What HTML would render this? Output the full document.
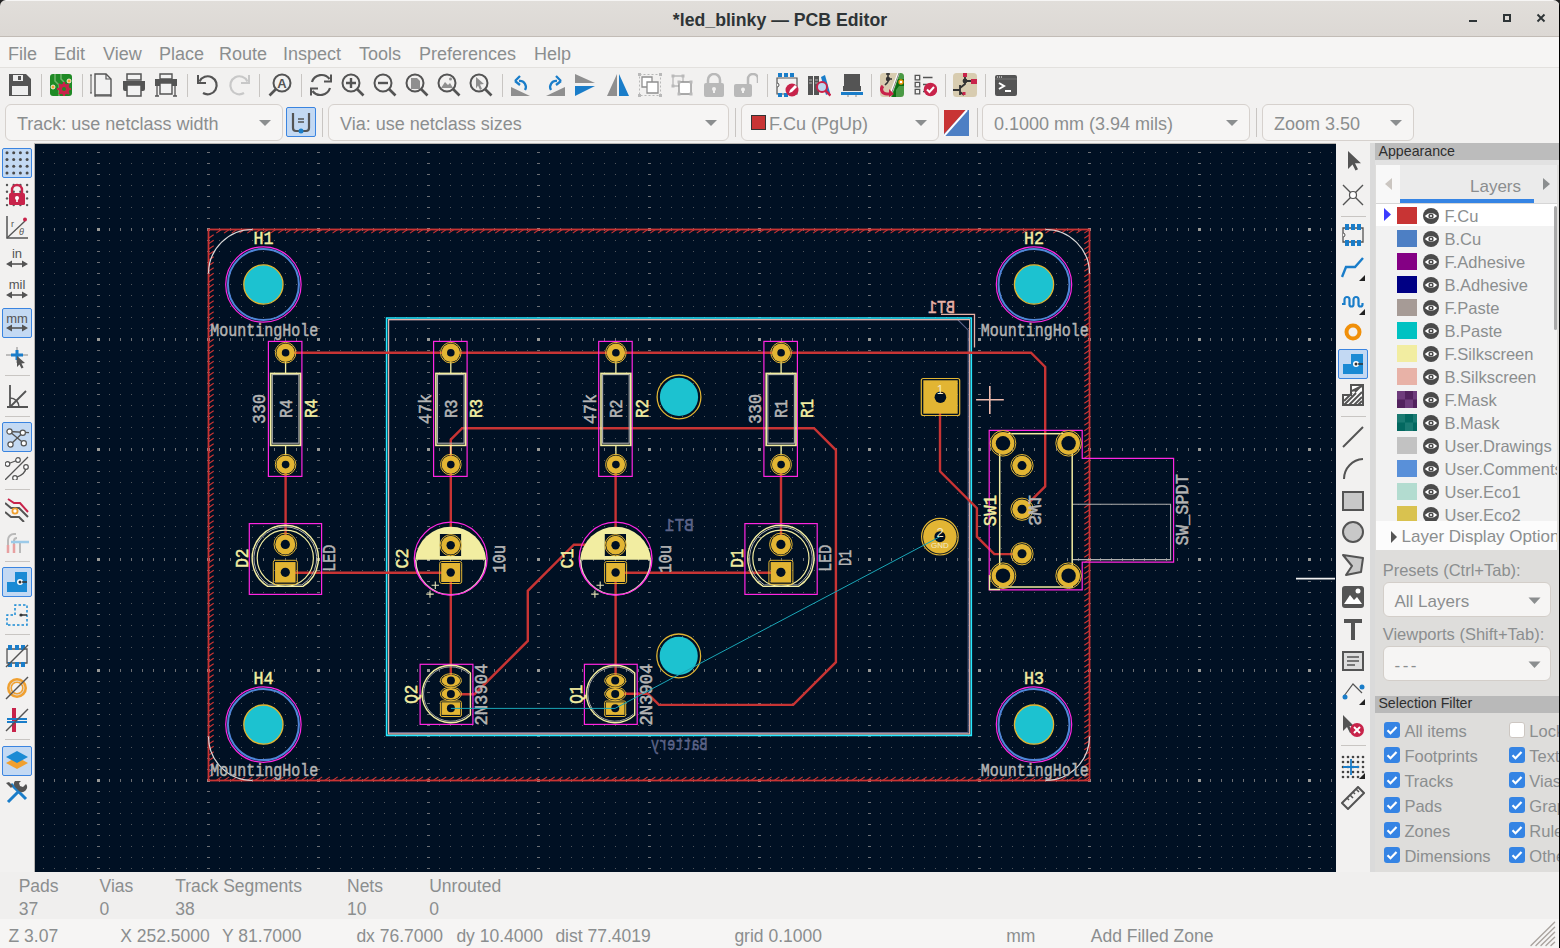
<!DOCTYPE html>
<html><head><meta charset="utf-8">
<style>
*{box-sizing:border-box}
html,body{margin:0;padding:0}
body{width:1560px;height:948px;overflow:hidden;position:relative;background:#f2f1f0;font-family:"Liberation Sans",sans-serif;color:#8b8e8f}
.a{position:absolute}
#title{left:0;top:0;width:1560px;height:37px;background:linear-gradient(#e1deda,#dcd8d4);border-top:1px solid #f6f5f4;border-bottom:1px solid #c2bcb6;}
#title .t{left:0;width:1560px;top:9px;text-align:center;font-weight:bold;font-size:17.7px;line-height:20px;color:#2e3436}
#menu{left:0;top:37px;width:1560px;height:31px;background:#f6f5f4;border-bottom:1px solid #e3e1de}
#menu span{position:absolute;top:7px;font-size:18px;color:#8b8e8f}
#tb1{left:0;top:68px;width:1560px;height:36px;background:#f2f1f0}
.sep{position:absolute;width:1px;background:#c8c5c2}
.combo{position:absolute;background:#f6f5f4;border:1px solid #d6d1cd;border-radius:6px;font-size:18px;color:#8b8e8f;padding-left:11px;line-height:39px;white-space:nowrap;overflow:hidden}
.combo .arr{position:absolute;right:11px;top:15px;width:0;height:0;border-left:6px solid transparent;border-right:6px solid transparent;border-top:6px solid #8b8e8f}
#canvas{left:34px;top:143px;width:1302px;height:730px;background:#001023;border-left:1px solid #b8b5b2;border-top:1px solid #b8b5b2}
#rtb{left:1336px;top:143px;width:34px;height:729px;background:#f2f1f0}
#app{left:1370px;top:143px;width:190px;height:729px;background:#dedddb;border-left:5px solid #dadada}
#msg{left:0;top:872px;width:1560px;height:47px;background:#f0efee;font-size:17px}
#status{left:0;top:919px;width:1560px;height:29px;background:#f6f5f4;font-size:17px}
</style></head><body>
<div id="title" class="a"><div class="t a">*led_blinky — PCB Editor</div></div>
<div id="menu" class="a">
<span style="left:8px">File</span><span style="left:54px">Edit</span><span style="left:103px">View</span><span style="left:159px">Place</span><span style="left:219px">Route</span><span style="left:283px">Inspect</span><span style="left:359px">Tools</span><span style="left:419px">Preferences</span><span style="left:534px">Help</span>
</div>
<div id="tb1" class="a"></div>
<div class="combo" style="left:5px;top:104px;width:278px;height:37px">Track: use netclass width<div class="arr"></div></div>
<div class="combo" style="left:328px;top:104px;width:401px;height:37px">Via: use netclass sizes<div class="arr"></div></div>
<div class="combo" style="left:741px;top:104px;width:198px;height:37px;padding-left:27px">F.Cu (PgUp)<div class="arr"></div></div>
<div class="combo" style="left:982px;top:104px;width:268px;height:37px">0.1000 mm (3.94 mils)<div class="arr"></div></div>
<div class="combo" style="left:1262px;top:104px;width:152px;height:37px">Zoom 3.50<div class="arr"></div></div>
<div id="canvas" class="a"></div>
<svg class="a" style="left:35px;top:144px" width="1300" height="728" viewBox="35 144 1300 728">
<rect x="35" y="144" width="1300" height="728" fill="#001023"/>
<path d="M43 152.5h1m10 0h1m10 0h1m10 0h1m10 0h1m21 0h1m10 0h1m10 0h1m10 0h1m10 0h1m10 0h1m10 0h1m10 0h1m10 0h1m21 0h1m10 0h1m10 0h1m10 0h1m10 0h1m10 0h1m10 0h1m10 0h1m10 0h1m21 0h1m10 0h1m10 0h1m10 0h1m10 0h1m10 0h1m10 0h1m10 0h1m10 0h1m21 0h1m10 0h1m10 0h1m10 0h1m10 0h1m10 0h1m10 0h1m10 0h1m10 0h1m21 0h1m10 0h1m10 0h1m10 0h1m10 0h1m10 0h1m10 0h1m10 0h1m11 0h1m21 0h1m10 0h1m10 0h1m10 0h1m10 0h1m10 0h1m10 0h1m10 0h1m10 0h1m21 0h1m10 0h1m10 0h1m10 0h1m10 0h1m10 0h1m10 0h1m10 0h1m10 0h1m21 0h1m10 0h1m10 0h1m10 0h1m10 0h1m10 0h1m10 0h1m10 0h1m10 0h1m21 0h1m10 0h1m10 0h1m10 0h1m10 0h1m10 0h1m10 0h1m10 0h1m10 0h1m21 0h1m10 0h1m10 0h1m10 0h1m10 0h1m10 0h1m10 0h1m10 0h1m10 0h1m21 0h1m10 0h1m10 0h1m10 0h1m10 0h1m10 0h1m10 0h1m10 0h1m10 0h1m21 0h1m10 0h1M43 163.5h1m10 0h1m10 0h1m10 0h1m10 0h1m21 0h1m10 0h1m10 0h1m10 0h1m10 0h1m10 0h1m10 0h1m10 0h1m10 0h1m21 0h1m10 0h1m10 0h1m10 0h1m10 0h1m10 0h1m10 0h1m10 0h1m10 0h1m21 0h1m10 0h1m10 0h1m10 0h1m10 0h1m10 0h1m10 0h1m10 0h1m10 0h1m21 0h1m10 0h1m10 0h1m10 0h1m10 0h1m10 0h1m10 0h1m10 0h1m10 0h1m21 0h1m10 0h1m10 0h1m10 0h1m10 0h1m10 0h1m10 0h1m10 0h1m11 0h1m21 0h1m10 0h1m10 0h1m10 0h1m10 0h1m10 0h1m10 0h1m10 0h1m10 0h1m21 0h1m10 0h1m10 0h1m10 0h1m10 0h1m10 0h1m10 0h1m10 0h1m10 0h1m21 0h1m10 0h1m10 0h1m10 0h1m10 0h1m10 0h1m10 0h1m10 0h1m10 0h1m21 0h1m10 0h1m10 0h1m10 0h1m10 0h1m10 0h1m10 0h1m10 0h1m10 0h1m21 0h1m10 0h1m10 0h1m10 0h1m10 0h1m10 0h1m10 0h1m10 0h1m10 0h1m21 0h1m10 0h1m10 0h1m10 0h1m10 0h1m10 0h1m10 0h1m10 0h1m10 0h1m21 0h1m10 0h1M43 174.5h1m10 0h1m10 0h1m10 0h1m10 0h1m21 0h1m10 0h1m10 0h1m10 0h1m10 0h1m10 0h1m10 0h1m10 0h1m10 0h1m21 0h1m10 0h1m10 0h1m10 0h1m10 0h1m10 0h1m10 0h1m10 0h1m10 0h1m21 0h1m10 0h1m10 0h1m10 0h1m10 0h1m10 0h1m10 0h1m10 0h1m10 0h1m21 0h1m10 0h1m10 0h1m10 0h1m10 0h1m10 0h1m10 0h1m10 0h1m10 0h1m21 0h1m10 0h1m10 0h1m10 0h1m10 0h1m10 0h1m10 0h1m10 0h1m11 0h1m21 0h1m10 0h1m10 0h1m10 0h1m10 0h1m10 0h1m10 0h1m10 0h1m10 0h1m21 0h1m10 0h1m10 0h1m10 0h1m10 0h1m10 0h1m10 0h1m10 0h1m10 0h1m21 0h1m10 0h1m10 0h1m10 0h1m10 0h1m10 0h1m10 0h1m10 0h1m10 0h1m21 0h1m10 0h1m10 0h1m10 0h1m10 0h1m10 0h1m10 0h1m10 0h1m10 0h1m21 0h1m10 0h1m10 0h1m10 0h1m10 0h1m10 0h1m10 0h1m10 0h1m10 0h1m21 0h1m10 0h1m10 0h1m10 0h1m10 0h1m10 0h1m10 0h1m10 0h1m10 0h1m21 0h1m10 0h1M43 185.5h1m10 0h1m10 0h1m10 0h1m10 0h1m21 0h1m10 0h1m10 0h1m10 0h1m10 0h1m10 0h1m10 0h1m10 0h1m10 0h1m21 0h1m10 0h1m10 0h1m10 0h1m10 0h1m10 0h1m10 0h1m10 0h1m10 0h1m21 0h1m10 0h1m10 0h1m10 0h1m10 0h1m10 0h1m10 0h1m10 0h1m10 0h1m21 0h1m10 0h1m10 0h1m10 0h1m10 0h1m10 0h1m10 0h1m10 0h1m10 0h1m21 0h1m10 0h1m10 0h1m10 0h1m10 0h1m10 0h1m10 0h1m10 0h1m11 0h1m21 0h1m10 0h1m10 0h1m10 0h1m10 0h1m10 0h1m10 0h1m10 0h1m10 0h1m21 0h1m10 0h1m10 0h1m10 0h1m10 0h1m10 0h1m10 0h1m10 0h1m10 0h1m21 0h1m10 0h1m10 0h1m10 0h1m10 0h1m10 0h1m10 0h1m10 0h1m10 0h1m21 0h1m10 0h1m10 0h1m10 0h1m10 0h1m10 0h1m10 0h1m10 0h1m10 0h1m21 0h1m10 0h1m10 0h1m10 0h1m10 0h1m10 0h1m10 0h1m10 0h1m10 0h1m21 0h1m10 0h1m10 0h1m10 0h1m10 0h1m10 0h1m10 0h1m10 0h1m10 0h1m21 0h1m10 0h1M43 196.5h1m10 0h1m10 0h1m10 0h1m10 0h1m21 0h1m10 0h1m10 0h1m10 0h1m10 0h1m10 0h1m10 0h1m10 0h1m10 0h1m21 0h1m10 0h1m10 0h1m10 0h1m10 0h1m10 0h1m10 0h1m10 0h1m10 0h1m21 0h1m10 0h1m10 0h1m10 0h1m10 0h1m10 0h1m10 0h1m10 0h1m10 0h1m21 0h1m10 0h1m10 0h1m10 0h1m10 0h1m10 0h1m10 0h1m10 0h1m10 0h1m21 0h1m10 0h1m10 0h1m10 0h1m10 0h1m10 0h1m10 0h1m10 0h1m11 0h1m21 0h1m10 0h1m10 0h1m10 0h1m10 0h1m10 0h1m10 0h1m10 0h1m10 0h1m21 0h1m10 0h1m10 0h1m10 0h1m10 0h1m10 0h1m10 0h1m10 0h1m10 0h1m21 0h1m10 0h1m10 0h1m10 0h1m10 0h1m10 0h1m10 0h1m10 0h1m10 0h1m21 0h1m10 0h1m10 0h1m10 0h1m10 0h1m10 0h1m10 0h1m10 0h1m10 0h1m21 0h1m10 0h1m10 0h1m10 0h1m10 0h1m10 0h1m10 0h1m10 0h1m10 0h1m21 0h1m10 0h1m10 0h1m10 0h1m10 0h1m10 0h1m10 0h1m10 0h1m10 0h1m21 0h1m10 0h1M43 207.5h1m10 0h1m10 0h1m10 0h1m10 0h1m21 0h1m10 0h1m10 0h1m10 0h1m10 0h1m10 0h1m10 0h1m10 0h1m10 0h1m21 0h1m10 0h1m10 0h1m10 0h1m10 0h1m10 0h1m10 0h1m10 0h1m10 0h1m21 0h1m10 0h1m10 0h1m10 0h1m10 0h1m10 0h1m10 0h1m10 0h1m10 0h1m21 0h1m10 0h1m10 0h1m10 0h1m10 0h1m10 0h1m10 0h1m10 0h1m10 0h1m21 0h1m10 0h1m10 0h1m10 0h1m10 0h1m10 0h1m10 0h1m10 0h1m11 0h1m21 0h1m10 0h1m10 0h1m10 0h1m10 0h1m10 0h1m10 0h1m10 0h1m10 0h1m21 0h1m10 0h1m10 0h1m10 0h1m10 0h1m10 0h1m10 0h1m10 0h1m10 0h1m21 0h1m10 0h1m10 0h1m10 0h1m10 0h1m10 0h1m10 0h1m10 0h1m10 0h1m21 0h1m10 0h1m10 0h1m10 0h1m10 0h1m10 0h1m10 0h1m10 0h1m10 0h1m21 0h1m10 0h1m10 0h1m10 0h1m10 0h1m10 0h1m10 0h1m10 0h1m10 0h1m21 0h1m10 0h1m10 0h1m10 0h1m10 0h1m10 0h1m10 0h1m10 0h1m10 0h1m21 0h1m10 0h1M43 218.5h1m10 0h1m10 0h1m10 0h1m10 0h1m21 0h1m10 0h1m10 0h1m10 0h1m10 0h1m10 0h1m10 0h1m10 0h1m10 0h1m21 0h1m10 0h1m10 0h1m10 0h1m10 0h1m10 0h1m10 0h1m10 0h1m10 0h1m21 0h1m10 0h1m10 0h1m10 0h1m10 0h1m10 0h1m10 0h1m10 0h1m10 0h1m21 0h1m10 0h1m10 0h1m10 0h1m10 0h1m10 0h1m10 0h1m10 0h1m10 0h1m21 0h1m10 0h1m10 0h1m10 0h1m10 0h1m10 0h1m10 0h1m10 0h1m11 0h1m21 0h1m10 0h1m10 0h1m10 0h1m10 0h1m10 0h1m10 0h1m10 0h1m10 0h1m21 0h1m10 0h1m10 0h1m10 0h1m10 0h1m10 0h1m10 0h1m10 0h1m10 0h1m21 0h1m10 0h1m10 0h1m10 0h1m10 0h1m10 0h1m10 0h1m10 0h1m10 0h1m21 0h1m10 0h1m10 0h1m10 0h1m10 0h1m10 0h1m10 0h1m10 0h1m10 0h1m21 0h1m10 0h1m10 0h1m10 0h1m10 0h1m10 0h1m10 0h1m10 0h1m10 0h1m21 0h1m10 0h1m10 0h1m10 0h1m10 0h1m10 0h1m10 0h1m10 0h1m10 0h1m21 0h1m10 0h1M43 240.5h1m10 0h1m10 0h1m10 0h1m10 0h1m21 0h1m10 0h1m10 0h1m10 0h1m10 0h1m10 0h1m10 0h1m10 0h1m10 0h1m21 0h1m10 0h1m10 0h1m10 0h1m10 0h1m10 0h1m10 0h1m10 0h1m10 0h1m21 0h1m10 0h1m10 0h1m10 0h1m10 0h1m10 0h1m10 0h1m10 0h1m10 0h1m21 0h1m10 0h1m10 0h1m10 0h1m10 0h1m10 0h1m10 0h1m10 0h1m10 0h1m21 0h1m10 0h1m10 0h1m10 0h1m10 0h1m10 0h1m10 0h1m10 0h1m11 0h1m21 0h1m10 0h1m10 0h1m10 0h1m10 0h1m10 0h1m10 0h1m10 0h1m10 0h1m21 0h1m10 0h1m10 0h1m10 0h1m10 0h1m10 0h1m10 0h1m10 0h1m10 0h1m21 0h1m10 0h1m10 0h1m10 0h1m10 0h1m10 0h1m10 0h1m10 0h1m10 0h1m21 0h1m10 0h1m10 0h1m10 0h1m10 0h1m10 0h1m10 0h1m10 0h1m10 0h1m21 0h1m10 0h1m10 0h1m10 0h1m10 0h1m10 0h1m10 0h1m10 0h1m10 0h1m21 0h1m10 0h1m10 0h1m10 0h1m10 0h1m10 0h1m10 0h1m10 0h1m10 0h1m21 0h1m10 0h1M43 251.5h1m10 0h1m10 0h1m10 0h1m10 0h1m21 0h1m10 0h1m10 0h1m10 0h1m10 0h1m10 0h1m10 0h1m10 0h1m10 0h1m21 0h1m10 0h1m10 0h1m10 0h1m10 0h1m10 0h1m10 0h1m10 0h1m10 0h1m21 0h1m10 0h1m10 0h1m10 0h1m10 0h1m10 0h1m10 0h1m10 0h1m10 0h1m21 0h1m10 0h1m10 0h1m10 0h1m10 0h1m10 0h1m10 0h1m10 0h1m10 0h1m21 0h1m10 0h1m10 0h1m10 0h1m10 0h1m10 0h1m10 0h1m10 0h1m11 0h1m21 0h1m10 0h1m10 0h1m10 0h1m10 0h1m10 0h1m10 0h1m10 0h1m10 0h1m21 0h1m10 0h1m10 0h1m10 0h1m10 0h1m10 0h1m10 0h1m10 0h1m10 0h1m21 0h1m10 0h1m10 0h1m10 0h1m10 0h1m10 0h1m10 0h1m10 0h1m10 0h1m21 0h1m10 0h1m10 0h1m10 0h1m10 0h1m10 0h1m10 0h1m10 0h1m10 0h1m21 0h1m10 0h1m10 0h1m10 0h1m10 0h1m10 0h1m10 0h1m10 0h1m10 0h1m21 0h1m10 0h1m10 0h1m10 0h1m10 0h1m10 0h1m10 0h1m10 0h1m10 0h1m21 0h1m10 0h1M43 262.5h1m10 0h1m10 0h1m10 0h1m10 0h1m21 0h1m10 0h1m10 0h1m10 0h1m10 0h1m10 0h1m10 0h1m10 0h1m10 0h1m21 0h1m10 0h1m10 0h1m10 0h1m10 0h1m10 0h1m10 0h1m10 0h1m10 0h1m21 0h1m10 0h1m10 0h1m10 0h1m10 0h1m10 0h1m10 0h1m10 0h1m10 0h1m21 0h1m10 0h1m10 0h1m10 0h1m10 0h1m10 0h1m10 0h1m10 0h1m10 0h1m21 0h1m10 0h1m10 0h1m10 0h1m10 0h1m10 0h1m10 0h1m10 0h1m11 0h1m21 0h1m10 0h1m10 0h1m10 0h1m10 0h1m10 0h1m10 0h1m10 0h1m10 0h1m21 0h1m10 0h1m10 0h1m10 0h1m10 0h1m10 0h1m10 0h1m10 0h1m10 0h1m21 0h1m10 0h1m10 0h1m10 0h1m10 0h1m10 0h1m10 0h1m10 0h1m10 0h1m21 0h1m10 0h1m10 0h1m10 0h1m10 0h1m10 0h1m10 0h1m10 0h1m10 0h1m21 0h1m10 0h1m10 0h1m10 0h1m10 0h1m10 0h1m10 0h1m10 0h1m10 0h1m21 0h1m10 0h1m10 0h1m10 0h1m10 0h1m10 0h1m10 0h1m10 0h1m10 0h1m21 0h1m10 0h1M43 273.5h1m10 0h1m10 0h1m10 0h1m10 0h1m21 0h1m10 0h1m10 0h1m10 0h1m10 0h1m10 0h1m10 0h1m10 0h1m10 0h1m21 0h1m10 0h1m10 0h1m10 0h1m10 0h1m10 0h1m10 0h1m10 0h1m10 0h1m21 0h1m10 0h1m10 0h1m10 0h1m10 0h1m10 0h1m10 0h1m10 0h1m10 0h1m21 0h1m10 0h1m10 0h1m10 0h1m10 0h1m10 0h1m10 0h1m10 0h1m10 0h1m21 0h1m10 0h1m10 0h1m10 0h1m10 0h1m10 0h1m10 0h1m10 0h1m11 0h1m21 0h1m10 0h1m10 0h1m10 0h1m10 0h1m10 0h1m10 0h1m10 0h1m10 0h1m21 0h1m10 0h1m10 0h1m10 0h1m10 0h1m10 0h1m10 0h1m10 0h1m10 0h1m21 0h1m10 0h1m10 0h1m10 0h1m10 0h1m10 0h1m10 0h1m10 0h1m10 0h1m21 0h1m10 0h1m10 0h1m10 0h1m10 0h1m10 0h1m10 0h1m10 0h1m10 0h1m21 0h1m10 0h1m10 0h1m10 0h1m10 0h1m10 0h1m10 0h1m10 0h1m10 0h1m21 0h1m10 0h1m10 0h1m10 0h1m10 0h1m10 0h1m10 0h1m10 0h1m10 0h1m21 0h1m10 0h1M43 284.5h1m10 0h1m10 0h1m10 0h1m10 0h1m21 0h1m10 0h1m10 0h1m10 0h1m10 0h1m10 0h1m10 0h1m10 0h1m10 0h1m21 0h1m10 0h1m10 0h1m10 0h1m10 0h1m10 0h1m10 0h1m10 0h1m10 0h1m21 0h1m10 0h1m10 0h1m10 0h1m10 0h1m10 0h1m10 0h1m10 0h1m10 0h1m21 0h1m10 0h1m10 0h1m10 0h1m10 0h1m10 0h1m10 0h1m10 0h1m10 0h1m21 0h1m10 0h1m10 0h1m10 0h1m10 0h1m10 0h1m10 0h1m10 0h1m11 0h1m21 0h1m10 0h1m10 0h1m10 0h1m10 0h1m10 0h1m10 0h1m10 0h1m10 0h1m21 0h1m10 0h1m10 0h1m10 0h1m10 0h1m10 0h1m10 0h1m10 0h1m10 0h1m21 0h1m10 0h1m10 0h1m10 0h1m10 0h1m10 0h1m10 0h1m10 0h1m10 0h1m21 0h1m10 0h1m10 0h1m10 0h1m10 0h1m10 0h1m10 0h1m10 0h1m10 0h1m21 0h1m10 0h1m10 0h1m10 0h1m10 0h1m10 0h1m10 0h1m10 0h1m10 0h1m21 0h1m10 0h1m10 0h1m10 0h1m10 0h1m10 0h1m10 0h1m10 0h1m10 0h1m21 0h1m10 0h1M43 295.5h1m10 0h1m10 0h1m10 0h1m10 0h1m21 0h1m10 0h1m10 0h1m10 0h1m10 0h1m10 0h1m10 0h1m10 0h1m10 0h1m21 0h1m10 0h1m10 0h1m10 0h1m10 0h1m10 0h1m10 0h1m10 0h1m10 0h1m21 0h1m10 0h1m10 0h1m10 0h1m10 0h1m10 0h1m10 0h1m10 0h1m10 0h1m21 0h1m10 0h1m10 0h1m10 0h1m10 0h1m10 0h1m10 0h1m10 0h1m10 0h1m21 0h1m10 0h1m10 0h1m10 0h1m10 0h1m10 0h1m10 0h1m10 0h1m11 0h1m21 0h1m10 0h1m10 0h1m10 0h1m10 0h1m10 0h1m10 0h1m10 0h1m10 0h1m21 0h1m10 0h1m10 0h1m10 0h1m10 0h1m10 0h1m10 0h1m10 0h1m10 0h1m21 0h1m10 0h1m10 0h1m10 0h1m10 0h1m10 0h1m10 0h1m10 0h1m10 0h1m21 0h1m10 0h1m10 0h1m10 0h1m10 0h1m10 0h1m10 0h1m10 0h1m10 0h1m21 0h1m10 0h1m10 0h1m10 0h1m10 0h1m10 0h1m10 0h1m10 0h1m10 0h1m21 0h1m10 0h1m10 0h1m10 0h1m10 0h1m10 0h1m10 0h1m10 0h1m10 0h1m21 0h1m10 0h1M43 306.5h1m10 0h1m10 0h1m10 0h1m10 0h1m21 0h1m10 0h1m10 0h1m10 0h1m10 0h1m10 0h1m10 0h1m10 0h1m10 0h1m21 0h1m10 0h1m10 0h1m10 0h1m10 0h1m10 0h1m10 0h1m10 0h1m10 0h1m21 0h1m10 0h1m10 0h1m10 0h1m10 0h1m10 0h1m10 0h1m10 0h1m10 0h1m21 0h1m10 0h1m10 0h1m10 0h1m10 0h1m10 0h1m10 0h1m10 0h1m10 0h1m21 0h1m10 0h1m10 0h1m10 0h1m10 0h1m10 0h1m10 0h1m10 0h1m11 0h1m21 0h1m10 0h1m10 0h1m10 0h1m10 0h1m10 0h1m10 0h1m10 0h1m10 0h1m21 0h1m10 0h1m10 0h1m10 0h1m10 0h1m10 0h1m10 0h1m10 0h1m10 0h1m21 0h1m10 0h1m10 0h1m10 0h1m10 0h1m10 0h1m10 0h1m10 0h1m10 0h1m21 0h1m10 0h1m10 0h1m10 0h1m10 0h1m10 0h1m10 0h1m10 0h1m10 0h1m21 0h1m10 0h1m10 0h1m10 0h1m10 0h1m10 0h1m10 0h1m10 0h1m10 0h1m21 0h1m10 0h1m10 0h1m10 0h1m10 0h1m10 0h1m10 0h1m10 0h1m10 0h1m21 0h1m10 0h1M43 317.5h1m10 0h1m10 0h1m10 0h1m10 0h1m21 0h1m10 0h1m10 0h1m10 0h1m10 0h1m10 0h1m10 0h1m10 0h1m10 0h1m21 0h1m10 0h1m10 0h1m10 0h1m10 0h1m10 0h1m10 0h1m10 0h1m10 0h1m21 0h1m10 0h1m10 0h1m10 0h1m10 0h1m10 0h1m10 0h1m10 0h1m10 0h1m21 0h1m10 0h1m10 0h1m10 0h1m10 0h1m10 0h1m10 0h1m10 0h1m10 0h1m21 0h1m10 0h1m10 0h1m10 0h1m10 0h1m10 0h1m10 0h1m10 0h1m11 0h1m21 0h1m10 0h1m10 0h1m10 0h1m10 0h1m10 0h1m10 0h1m10 0h1m10 0h1m21 0h1m10 0h1m10 0h1m10 0h1m10 0h1m10 0h1m10 0h1m10 0h1m10 0h1m21 0h1m10 0h1m10 0h1m10 0h1m10 0h1m10 0h1m10 0h1m10 0h1m10 0h1m21 0h1m10 0h1m10 0h1m10 0h1m10 0h1m10 0h1m10 0h1m10 0h1m10 0h1m21 0h1m10 0h1m10 0h1m10 0h1m10 0h1m10 0h1m10 0h1m10 0h1m10 0h1m21 0h1m10 0h1m10 0h1m10 0h1m10 0h1m10 0h1m10 0h1m10 0h1m10 0h1m21 0h1m10 0h1M43 328.5h1m10 0h1m10 0h1m10 0h1m10 0h1m21 0h1m10 0h1m10 0h1m10 0h1m10 0h1m10 0h1m10 0h1m10 0h1m10 0h1m21 0h1m10 0h1m10 0h1m10 0h1m10 0h1m10 0h1m10 0h1m10 0h1m10 0h1m21 0h1m10 0h1m10 0h1m10 0h1m10 0h1m10 0h1m10 0h1m10 0h1m10 0h1m21 0h1m10 0h1m10 0h1m10 0h1m10 0h1m10 0h1m10 0h1m10 0h1m10 0h1m21 0h1m10 0h1m10 0h1m10 0h1m10 0h1m10 0h1m10 0h1m10 0h1m11 0h1m21 0h1m10 0h1m10 0h1m10 0h1m10 0h1m10 0h1m10 0h1m10 0h1m10 0h1m21 0h1m10 0h1m10 0h1m10 0h1m10 0h1m10 0h1m10 0h1m10 0h1m10 0h1m21 0h1m10 0h1m10 0h1m10 0h1m10 0h1m10 0h1m10 0h1m10 0h1m10 0h1m21 0h1m10 0h1m10 0h1m10 0h1m10 0h1m10 0h1m10 0h1m10 0h1m10 0h1m21 0h1m10 0h1m10 0h1m10 0h1m10 0h1m10 0h1m10 0h1m10 0h1m10 0h1m21 0h1m10 0h1m10 0h1m10 0h1m10 0h1m10 0h1m10 0h1m10 0h1m10 0h1m21 0h1m10 0h1M43 350.5h1m10 0h1m10 0h1m10 0h1m10 0h1m21 0h1m10 0h1m10 0h1m10 0h1m10 0h1m10 0h1m10 0h1m10 0h1m10 0h1m21 0h1m10 0h1m10 0h1m10 0h1m10 0h1m10 0h1m10 0h1m10 0h1m10 0h1m21 0h1m10 0h1m10 0h1m10 0h1m10 0h1m10 0h1m10 0h1m10 0h1m10 0h1m21 0h1m10 0h1m10 0h1m10 0h1m10 0h1m10 0h1m10 0h1m10 0h1m10 0h1m21 0h1m10 0h1m10 0h1m10 0h1m10 0h1m10 0h1m10 0h1m10 0h1m11 0h1m21 0h1m10 0h1m10 0h1m10 0h1m10 0h1m10 0h1m10 0h1m10 0h1m10 0h1m21 0h1m10 0h1m10 0h1m10 0h1m10 0h1m10 0h1m10 0h1m10 0h1m10 0h1m21 0h1m10 0h1m10 0h1m10 0h1m10 0h1m10 0h1m10 0h1m10 0h1m10 0h1m21 0h1m10 0h1m10 0h1m10 0h1m10 0h1m10 0h1m10 0h1m10 0h1m10 0h1m21 0h1m10 0h1m10 0h1m10 0h1m10 0h1m10 0h1m10 0h1m10 0h1m10 0h1m21 0h1m10 0h1m10 0h1m10 0h1m10 0h1m10 0h1m10 0h1m10 0h1m10 0h1m21 0h1m10 0h1M43 361.5h1m10 0h1m10 0h1m10 0h1m10 0h1m21 0h1m10 0h1m10 0h1m10 0h1m10 0h1m10 0h1m10 0h1m10 0h1m10 0h1m21 0h1m10 0h1m10 0h1m10 0h1m10 0h1m10 0h1m10 0h1m10 0h1m10 0h1m21 0h1m10 0h1m10 0h1m10 0h1m10 0h1m10 0h1m10 0h1m10 0h1m10 0h1m21 0h1m10 0h1m10 0h1m10 0h1m10 0h1m10 0h1m10 0h1m10 0h1m10 0h1m21 0h1m10 0h1m10 0h1m10 0h1m10 0h1m10 0h1m10 0h1m10 0h1m11 0h1m21 0h1m10 0h1m10 0h1m10 0h1m10 0h1m10 0h1m10 0h1m10 0h1m10 0h1m21 0h1m10 0h1m10 0h1m10 0h1m10 0h1m10 0h1m10 0h1m10 0h1m10 0h1m21 0h1m10 0h1m10 0h1m10 0h1m10 0h1m10 0h1m10 0h1m10 0h1m10 0h1m21 0h1m10 0h1m10 0h1m10 0h1m10 0h1m10 0h1m10 0h1m10 0h1m10 0h1m21 0h1m10 0h1m10 0h1m10 0h1m10 0h1m10 0h1m10 0h1m10 0h1m10 0h1m21 0h1m10 0h1m10 0h1m10 0h1m10 0h1m10 0h1m10 0h1m10 0h1m10 0h1m21 0h1m10 0h1M43 372.5h1m10 0h1m10 0h1m10 0h1m10 0h1m21 0h1m10 0h1m10 0h1m10 0h1m10 0h1m10 0h1m10 0h1m10 0h1m10 0h1m21 0h1m10 0h1m10 0h1m10 0h1m10 0h1m10 0h1m10 0h1m10 0h1m10 0h1m21 0h1m10 0h1m10 0h1m10 0h1m10 0h1m10 0h1m10 0h1m10 0h1m10 0h1m21 0h1m10 0h1m10 0h1m10 0h1m10 0h1m10 0h1m10 0h1m10 0h1m10 0h1m21 0h1m10 0h1m10 0h1m10 0h1m10 0h1m10 0h1m10 0h1m10 0h1m11 0h1m21 0h1m10 0h1m10 0h1m10 0h1m10 0h1m10 0h1m10 0h1m10 0h1m10 0h1m21 0h1m10 0h1m10 0h1m10 0h1m10 0h1m10 0h1m10 0h1m10 0h1m10 0h1m21 0h1m10 0h1m10 0h1m10 0h1m10 0h1m10 0h1m10 0h1m10 0h1m10 0h1m21 0h1m10 0h1m10 0h1m10 0h1m10 0h1m10 0h1m10 0h1m10 0h1m10 0h1m21 0h1m10 0h1m10 0h1m10 0h1m10 0h1m10 0h1m10 0h1m10 0h1m10 0h1m21 0h1m10 0h1m10 0h1m10 0h1m10 0h1m10 0h1m10 0h1m10 0h1m10 0h1m21 0h1m10 0h1M43 383.5h1m10 0h1m10 0h1m10 0h1m10 0h1m21 0h1m10 0h1m10 0h1m10 0h1m10 0h1m10 0h1m10 0h1m10 0h1m10 0h1m21 0h1m10 0h1m10 0h1m10 0h1m10 0h1m10 0h1m10 0h1m10 0h1m10 0h1m21 0h1m10 0h1m10 0h1m10 0h1m10 0h1m10 0h1m10 0h1m10 0h1m10 0h1m21 0h1m10 0h1m10 0h1m10 0h1m10 0h1m10 0h1m10 0h1m10 0h1m10 0h1m21 0h1m10 0h1m10 0h1m10 0h1m10 0h1m10 0h1m10 0h1m10 0h1m11 0h1m21 0h1m10 0h1m10 0h1m10 0h1m10 0h1m10 0h1m10 0h1m10 0h1m10 0h1m21 0h1m10 0h1m10 0h1m10 0h1m10 0h1m10 0h1m10 0h1m10 0h1m10 0h1m21 0h1m10 0h1m10 0h1m10 0h1m10 0h1m10 0h1m10 0h1m10 0h1m10 0h1m21 0h1m10 0h1m10 0h1m10 0h1m10 0h1m10 0h1m10 0h1m10 0h1m10 0h1m21 0h1m10 0h1m10 0h1m10 0h1m10 0h1m10 0h1m10 0h1m10 0h1m10 0h1m21 0h1m10 0h1m10 0h1m10 0h1m10 0h1m10 0h1m10 0h1m10 0h1m10 0h1m21 0h1m10 0h1M43 394.5h1m10 0h1m10 0h1m10 0h1m10 0h1m21 0h1m10 0h1m10 0h1m10 0h1m10 0h1m10 0h1m10 0h1m10 0h1m10 0h1m21 0h1m10 0h1m10 0h1m10 0h1m10 0h1m10 0h1m10 0h1m10 0h1m10 0h1m21 0h1m10 0h1m10 0h1m10 0h1m10 0h1m10 0h1m10 0h1m10 0h1m10 0h1m21 0h1m10 0h1m10 0h1m10 0h1m10 0h1m10 0h1m10 0h1m10 0h1m10 0h1m21 0h1m10 0h1m10 0h1m10 0h1m10 0h1m10 0h1m10 0h1m10 0h1m11 0h1m21 0h1m10 0h1m10 0h1m10 0h1m10 0h1m10 0h1m10 0h1m10 0h1m10 0h1m21 0h1m10 0h1m10 0h1m10 0h1m10 0h1m10 0h1m10 0h1m10 0h1m10 0h1m21 0h1m10 0h1m10 0h1m10 0h1m10 0h1m10 0h1m10 0h1m10 0h1m10 0h1m21 0h1m10 0h1m10 0h1m10 0h1m10 0h1m10 0h1m10 0h1m10 0h1m10 0h1m21 0h1m10 0h1m10 0h1m10 0h1m10 0h1m10 0h1m10 0h1m10 0h1m10 0h1m21 0h1m10 0h1m10 0h1m10 0h1m10 0h1m10 0h1m10 0h1m10 0h1m10 0h1m21 0h1m10 0h1M43 405.5h1m10 0h1m10 0h1m10 0h1m10 0h1m21 0h1m10 0h1m10 0h1m10 0h1m10 0h1m10 0h1m10 0h1m10 0h1m10 0h1m21 0h1m10 0h1m10 0h1m10 0h1m10 0h1m10 0h1m10 0h1m10 0h1m10 0h1m21 0h1m10 0h1m10 0h1m10 0h1m10 0h1m10 0h1m10 0h1m10 0h1m10 0h1m21 0h1m10 0h1m10 0h1m10 0h1m10 0h1m10 0h1m10 0h1m10 0h1m10 0h1m21 0h1m10 0h1m10 0h1m10 0h1m10 0h1m10 0h1m10 0h1m10 0h1m11 0h1m21 0h1m10 0h1m10 0h1m10 0h1m10 0h1m10 0h1m10 0h1m10 0h1m10 0h1m21 0h1m10 0h1m10 0h1m10 0h1m10 0h1m10 0h1m10 0h1m10 0h1m10 0h1m21 0h1m10 0h1m10 0h1m10 0h1m10 0h1m10 0h1m10 0h1m10 0h1m10 0h1m21 0h1m10 0h1m10 0h1m10 0h1m10 0h1m10 0h1m10 0h1m10 0h1m10 0h1m21 0h1m10 0h1m10 0h1m10 0h1m10 0h1m10 0h1m10 0h1m10 0h1m10 0h1m21 0h1m10 0h1m10 0h1m10 0h1m10 0h1m10 0h1m10 0h1m10 0h1m10 0h1m21 0h1m10 0h1M43 416.5h1m10 0h1m10 0h1m10 0h1m10 0h1m21 0h1m10 0h1m10 0h1m10 0h1m10 0h1m10 0h1m10 0h1m10 0h1m10 0h1m21 0h1m10 0h1m10 0h1m10 0h1m10 0h1m10 0h1m10 0h1m10 0h1m10 0h1m21 0h1m10 0h1m10 0h1m10 0h1m10 0h1m10 0h1m10 0h1m10 0h1m10 0h1m21 0h1m10 0h1m10 0h1m10 0h1m10 0h1m10 0h1m10 0h1m10 0h1m10 0h1m21 0h1m10 0h1m10 0h1m10 0h1m10 0h1m10 0h1m10 0h1m10 0h1m11 0h1m21 0h1m10 0h1m10 0h1m10 0h1m10 0h1m10 0h1m10 0h1m10 0h1m10 0h1m21 0h1m10 0h1m10 0h1m10 0h1m10 0h1m10 0h1m10 0h1m10 0h1m10 0h1m21 0h1m10 0h1m10 0h1m10 0h1m10 0h1m10 0h1m10 0h1m10 0h1m10 0h1m21 0h1m10 0h1m10 0h1m10 0h1m10 0h1m10 0h1m10 0h1m10 0h1m10 0h1m21 0h1m10 0h1m10 0h1m10 0h1m10 0h1m10 0h1m10 0h1m10 0h1m10 0h1m21 0h1m10 0h1m10 0h1m10 0h1m10 0h1m10 0h1m10 0h1m10 0h1m10 0h1m21 0h1m10 0h1M43 427.5h1m10 0h1m10 0h1m10 0h1m10 0h1m21 0h1m10 0h1m10 0h1m10 0h1m10 0h1m10 0h1m10 0h1m10 0h1m10 0h1m21 0h1m10 0h1m10 0h1m10 0h1m10 0h1m10 0h1m10 0h1m10 0h1m10 0h1m21 0h1m10 0h1m10 0h1m10 0h1m10 0h1m10 0h1m10 0h1m10 0h1m10 0h1m21 0h1m10 0h1m10 0h1m10 0h1m10 0h1m10 0h1m10 0h1m10 0h1m10 0h1m21 0h1m10 0h1m10 0h1m10 0h1m10 0h1m10 0h1m10 0h1m10 0h1m11 0h1m21 0h1m10 0h1m10 0h1m10 0h1m10 0h1m10 0h1m10 0h1m10 0h1m10 0h1m21 0h1m10 0h1m10 0h1m10 0h1m10 0h1m10 0h1m10 0h1m10 0h1m10 0h1m21 0h1m10 0h1m10 0h1m10 0h1m10 0h1m10 0h1m10 0h1m10 0h1m10 0h1m21 0h1m10 0h1m10 0h1m10 0h1m10 0h1m10 0h1m10 0h1m10 0h1m10 0h1m21 0h1m10 0h1m10 0h1m10 0h1m10 0h1m10 0h1m10 0h1m10 0h1m10 0h1m21 0h1m10 0h1m10 0h1m10 0h1m10 0h1m10 0h1m10 0h1m10 0h1m10 0h1m21 0h1m10 0h1M43 438.5h1m10 0h1m10 0h1m10 0h1m10 0h1m21 0h1m10 0h1m10 0h1m10 0h1m10 0h1m10 0h1m10 0h1m10 0h1m10 0h1m21 0h1m10 0h1m10 0h1m10 0h1m10 0h1m10 0h1m10 0h1m10 0h1m10 0h1m21 0h1m10 0h1m10 0h1m10 0h1m10 0h1m10 0h1m10 0h1m10 0h1m10 0h1m21 0h1m10 0h1m10 0h1m10 0h1m10 0h1m10 0h1m10 0h1m10 0h1m10 0h1m21 0h1m10 0h1m10 0h1m10 0h1m10 0h1m10 0h1m10 0h1m10 0h1m11 0h1m21 0h1m10 0h1m10 0h1m10 0h1m10 0h1m10 0h1m10 0h1m10 0h1m10 0h1m21 0h1m10 0h1m10 0h1m10 0h1m10 0h1m10 0h1m10 0h1m10 0h1m10 0h1m21 0h1m10 0h1m10 0h1m10 0h1m10 0h1m10 0h1m10 0h1m10 0h1m10 0h1m21 0h1m10 0h1m10 0h1m10 0h1m10 0h1m10 0h1m10 0h1m10 0h1m10 0h1m21 0h1m10 0h1m10 0h1m10 0h1m10 0h1m10 0h1m10 0h1m10 0h1m10 0h1m21 0h1m10 0h1m10 0h1m10 0h1m10 0h1m10 0h1m10 0h1m10 0h1m10 0h1m21 0h1m10 0h1M43 460.5h1m10 0h1m10 0h1m10 0h1m10 0h1m21 0h1m10 0h1m10 0h1m10 0h1m10 0h1m10 0h1m10 0h1m10 0h1m10 0h1m21 0h1m10 0h1m10 0h1m10 0h1m10 0h1m10 0h1m10 0h1m10 0h1m10 0h1m21 0h1m10 0h1m10 0h1m10 0h1m10 0h1m10 0h1m10 0h1m10 0h1m10 0h1m21 0h1m10 0h1m10 0h1m10 0h1m10 0h1m10 0h1m10 0h1m10 0h1m10 0h1m21 0h1m10 0h1m10 0h1m10 0h1m10 0h1m10 0h1m10 0h1m10 0h1m11 0h1m21 0h1m10 0h1m10 0h1m10 0h1m10 0h1m10 0h1m10 0h1m10 0h1m10 0h1m21 0h1m10 0h1m10 0h1m10 0h1m10 0h1m10 0h1m10 0h1m10 0h1m10 0h1m21 0h1m10 0h1m10 0h1m10 0h1m10 0h1m10 0h1m10 0h1m10 0h1m10 0h1m21 0h1m10 0h1m10 0h1m10 0h1m10 0h1m10 0h1m10 0h1m10 0h1m10 0h1m21 0h1m10 0h1m10 0h1m10 0h1m10 0h1m10 0h1m10 0h1m10 0h1m10 0h1m21 0h1m10 0h1m10 0h1m10 0h1m10 0h1m10 0h1m10 0h1m10 0h1m10 0h1m21 0h1m10 0h1M43 471.5h1m10 0h1m10 0h1m10 0h1m10 0h1m21 0h1m10 0h1m10 0h1m10 0h1m10 0h1m10 0h1m10 0h1m10 0h1m10 0h1m21 0h1m10 0h1m10 0h1m10 0h1m10 0h1m10 0h1m10 0h1m10 0h1m10 0h1m21 0h1m10 0h1m10 0h1m10 0h1m10 0h1m10 0h1m10 0h1m10 0h1m10 0h1m21 0h1m10 0h1m10 0h1m10 0h1m10 0h1m10 0h1m10 0h1m10 0h1m10 0h1m21 0h1m10 0h1m10 0h1m10 0h1m10 0h1m10 0h1m10 0h1m10 0h1m11 0h1m21 0h1m10 0h1m10 0h1m10 0h1m10 0h1m10 0h1m10 0h1m10 0h1m10 0h1m21 0h1m10 0h1m10 0h1m10 0h1m10 0h1m10 0h1m10 0h1m10 0h1m10 0h1m21 0h1m10 0h1m10 0h1m10 0h1m10 0h1m10 0h1m10 0h1m10 0h1m10 0h1m21 0h1m10 0h1m10 0h1m10 0h1m10 0h1m10 0h1m10 0h1m10 0h1m10 0h1m21 0h1m10 0h1m10 0h1m10 0h1m10 0h1m10 0h1m10 0h1m10 0h1m10 0h1m21 0h1m10 0h1m10 0h1m10 0h1m10 0h1m10 0h1m10 0h1m10 0h1m10 0h1m21 0h1m10 0h1M43 482.5h1m10 0h1m10 0h1m10 0h1m10 0h1m21 0h1m10 0h1m10 0h1m10 0h1m10 0h1m10 0h1m10 0h1m10 0h1m10 0h1m21 0h1m10 0h1m10 0h1m10 0h1m10 0h1m10 0h1m10 0h1m10 0h1m10 0h1m21 0h1m10 0h1m10 0h1m10 0h1m10 0h1m10 0h1m10 0h1m10 0h1m10 0h1m21 0h1m10 0h1m10 0h1m10 0h1m10 0h1m10 0h1m10 0h1m10 0h1m10 0h1m21 0h1m10 0h1m10 0h1m10 0h1m10 0h1m10 0h1m10 0h1m10 0h1m11 0h1m21 0h1m10 0h1m10 0h1m10 0h1m10 0h1m10 0h1m10 0h1m10 0h1m10 0h1m21 0h1m10 0h1m10 0h1m10 0h1m10 0h1m10 0h1m10 0h1m10 0h1m10 0h1m21 0h1m10 0h1m10 0h1m10 0h1m10 0h1m10 0h1m10 0h1m10 0h1m10 0h1m21 0h1m10 0h1m10 0h1m10 0h1m10 0h1m10 0h1m10 0h1m10 0h1m10 0h1m21 0h1m10 0h1m10 0h1m10 0h1m10 0h1m10 0h1m10 0h1m10 0h1m10 0h1m21 0h1m10 0h1m10 0h1m10 0h1m10 0h1m10 0h1m10 0h1m10 0h1m10 0h1m21 0h1m10 0h1M43 493.5h1m10 0h1m10 0h1m10 0h1m10 0h1m21 0h1m10 0h1m10 0h1m10 0h1m10 0h1m10 0h1m10 0h1m10 0h1m10 0h1m21 0h1m10 0h1m10 0h1m10 0h1m10 0h1m10 0h1m10 0h1m10 0h1m10 0h1m21 0h1m10 0h1m10 0h1m10 0h1m10 0h1m10 0h1m10 0h1m10 0h1m10 0h1m21 0h1m10 0h1m10 0h1m10 0h1m10 0h1m10 0h1m10 0h1m10 0h1m10 0h1m21 0h1m10 0h1m10 0h1m10 0h1m10 0h1m10 0h1m10 0h1m10 0h1m11 0h1m21 0h1m10 0h1m10 0h1m10 0h1m10 0h1m10 0h1m10 0h1m10 0h1m10 0h1m21 0h1m10 0h1m10 0h1m10 0h1m10 0h1m10 0h1m10 0h1m10 0h1m10 0h1m21 0h1m10 0h1m10 0h1m10 0h1m10 0h1m10 0h1m10 0h1m10 0h1m10 0h1m21 0h1m10 0h1m10 0h1m10 0h1m10 0h1m10 0h1m10 0h1m10 0h1m10 0h1m21 0h1m10 0h1m10 0h1m10 0h1m10 0h1m10 0h1m10 0h1m10 0h1m10 0h1m21 0h1m10 0h1m10 0h1m10 0h1m10 0h1m10 0h1m10 0h1m10 0h1m10 0h1m21 0h1m10 0h1M43 504.5h1m10 0h1m10 0h1m10 0h1m10 0h1m21 0h1m10 0h1m10 0h1m10 0h1m10 0h1m10 0h1m10 0h1m10 0h1m10 0h1m21 0h1m10 0h1m10 0h1m10 0h1m10 0h1m10 0h1m10 0h1m10 0h1m10 0h1m21 0h1m10 0h1m10 0h1m10 0h1m10 0h1m10 0h1m10 0h1m10 0h1m10 0h1m21 0h1m10 0h1m10 0h1m10 0h1m10 0h1m10 0h1m10 0h1m10 0h1m10 0h1m21 0h1m10 0h1m10 0h1m10 0h1m10 0h1m10 0h1m10 0h1m10 0h1m11 0h1m21 0h1m10 0h1m10 0h1m10 0h1m10 0h1m10 0h1m10 0h1m10 0h1m10 0h1m21 0h1m10 0h1m10 0h1m10 0h1m10 0h1m10 0h1m10 0h1m10 0h1m10 0h1m21 0h1m10 0h1m10 0h1m10 0h1m10 0h1m10 0h1m10 0h1m10 0h1m10 0h1m21 0h1m10 0h1m10 0h1m10 0h1m10 0h1m10 0h1m10 0h1m10 0h1m10 0h1m21 0h1m10 0h1m10 0h1m10 0h1m10 0h1m10 0h1m10 0h1m10 0h1m10 0h1m21 0h1m10 0h1m10 0h1m10 0h1m10 0h1m10 0h1m10 0h1m10 0h1m10 0h1m21 0h1m10 0h1M43 515.5h1m10 0h1m10 0h1m10 0h1m10 0h1m21 0h1m10 0h1m10 0h1m10 0h1m10 0h1m10 0h1m10 0h1m10 0h1m10 0h1m21 0h1m10 0h1m10 0h1m10 0h1m10 0h1m10 0h1m10 0h1m10 0h1m10 0h1m21 0h1m10 0h1m10 0h1m10 0h1m10 0h1m10 0h1m10 0h1m10 0h1m10 0h1m21 0h1m10 0h1m10 0h1m10 0h1m10 0h1m10 0h1m10 0h1m10 0h1m10 0h1m21 0h1m10 0h1m10 0h1m10 0h1m10 0h1m10 0h1m10 0h1m10 0h1m11 0h1m21 0h1m10 0h1m10 0h1m10 0h1m10 0h1m10 0h1m10 0h1m10 0h1m10 0h1m21 0h1m10 0h1m10 0h1m10 0h1m10 0h1m10 0h1m10 0h1m10 0h1m10 0h1m21 0h1m10 0h1m10 0h1m10 0h1m10 0h1m10 0h1m10 0h1m10 0h1m10 0h1m21 0h1m10 0h1m10 0h1m10 0h1m10 0h1m10 0h1m10 0h1m10 0h1m10 0h1m21 0h1m10 0h1m10 0h1m10 0h1m10 0h1m10 0h1m10 0h1m10 0h1m10 0h1m21 0h1m10 0h1m10 0h1m10 0h1m10 0h1m10 0h1m10 0h1m10 0h1m10 0h1m21 0h1m10 0h1M43 526.5h1m10 0h1m10 0h1m10 0h1m10 0h1m21 0h1m10 0h1m10 0h1m10 0h1m10 0h1m10 0h1m10 0h1m10 0h1m10 0h1m21 0h1m10 0h1m10 0h1m10 0h1m10 0h1m10 0h1m10 0h1m10 0h1m10 0h1m21 0h1m10 0h1m10 0h1m10 0h1m10 0h1m10 0h1m10 0h1m10 0h1m10 0h1m21 0h1m10 0h1m10 0h1m10 0h1m10 0h1m10 0h1m10 0h1m10 0h1m10 0h1m21 0h1m10 0h1m10 0h1m10 0h1m10 0h1m10 0h1m10 0h1m10 0h1m11 0h1m21 0h1m10 0h1m10 0h1m10 0h1m10 0h1m10 0h1m10 0h1m10 0h1m10 0h1m21 0h1m10 0h1m10 0h1m10 0h1m10 0h1m10 0h1m10 0h1m10 0h1m10 0h1m21 0h1m10 0h1m10 0h1m10 0h1m10 0h1m10 0h1m10 0h1m10 0h1m10 0h1m21 0h1m10 0h1m10 0h1m10 0h1m10 0h1m10 0h1m10 0h1m10 0h1m10 0h1m21 0h1m10 0h1m10 0h1m10 0h1m10 0h1m10 0h1m10 0h1m10 0h1m10 0h1m21 0h1m10 0h1m10 0h1m10 0h1m10 0h1m10 0h1m10 0h1m10 0h1m10 0h1m21 0h1m10 0h1M43 537.5h1m10 0h1m10 0h1m10 0h1m10 0h1m21 0h1m10 0h1m10 0h1m10 0h1m10 0h1m10 0h1m10 0h1m10 0h1m10 0h1m21 0h1m10 0h1m10 0h1m10 0h1m10 0h1m10 0h1m10 0h1m10 0h1m10 0h1m21 0h1m10 0h1m10 0h1m10 0h1m10 0h1m10 0h1m10 0h1m10 0h1m10 0h1m21 0h1m10 0h1m10 0h1m10 0h1m10 0h1m10 0h1m10 0h1m10 0h1m10 0h1m21 0h1m10 0h1m10 0h1m10 0h1m10 0h1m10 0h1m10 0h1m10 0h1m11 0h1m21 0h1m10 0h1m10 0h1m10 0h1m10 0h1m10 0h1m10 0h1m10 0h1m10 0h1m21 0h1m10 0h1m10 0h1m10 0h1m10 0h1m10 0h1m10 0h1m10 0h1m10 0h1m21 0h1m10 0h1m10 0h1m10 0h1m10 0h1m10 0h1m10 0h1m10 0h1m10 0h1m21 0h1m10 0h1m10 0h1m10 0h1m10 0h1m10 0h1m10 0h1m10 0h1m10 0h1m21 0h1m10 0h1m10 0h1m10 0h1m10 0h1m10 0h1m10 0h1m10 0h1m10 0h1m21 0h1m10 0h1m10 0h1m10 0h1m10 0h1m10 0h1m10 0h1m10 0h1m10 0h1m21 0h1m10 0h1M43 548.5h1m10 0h1m10 0h1m10 0h1m10 0h1m21 0h1m10 0h1m10 0h1m10 0h1m10 0h1m10 0h1m10 0h1m10 0h1m10 0h1m21 0h1m10 0h1m10 0h1m10 0h1m10 0h1m10 0h1m10 0h1m10 0h1m10 0h1m21 0h1m10 0h1m10 0h1m10 0h1m10 0h1m10 0h1m10 0h1m10 0h1m10 0h1m21 0h1m10 0h1m10 0h1m10 0h1m10 0h1m10 0h1m10 0h1m10 0h1m10 0h1m21 0h1m10 0h1m10 0h1m10 0h1m10 0h1m10 0h1m10 0h1m10 0h1m11 0h1m21 0h1m10 0h1m10 0h1m10 0h1m10 0h1m10 0h1m10 0h1m10 0h1m10 0h1m21 0h1m10 0h1m10 0h1m10 0h1m10 0h1m10 0h1m10 0h1m10 0h1m10 0h1m21 0h1m10 0h1m10 0h1m10 0h1m10 0h1m10 0h1m10 0h1m10 0h1m10 0h1m21 0h1m10 0h1m10 0h1m10 0h1m10 0h1m10 0h1m10 0h1m10 0h1m10 0h1m21 0h1m10 0h1m10 0h1m10 0h1m10 0h1m10 0h1m10 0h1m10 0h1m10 0h1m21 0h1m10 0h1m10 0h1m10 0h1m10 0h1m10 0h1m10 0h1m10 0h1m10 0h1m21 0h1m10 0h1M43 570.5h1m10 0h1m10 0h1m10 0h1m10 0h1m21 0h1m10 0h1m10 0h1m10 0h1m10 0h1m10 0h1m10 0h1m10 0h1m10 0h1m21 0h1m10 0h1m10 0h1m10 0h1m10 0h1m10 0h1m10 0h1m10 0h1m10 0h1m21 0h1m10 0h1m10 0h1m10 0h1m10 0h1m10 0h1m10 0h1m10 0h1m10 0h1m21 0h1m10 0h1m10 0h1m10 0h1m10 0h1m10 0h1m10 0h1m10 0h1m10 0h1m21 0h1m10 0h1m10 0h1m10 0h1m10 0h1m10 0h1m10 0h1m10 0h1m11 0h1m21 0h1m10 0h1m10 0h1m10 0h1m10 0h1m10 0h1m10 0h1m10 0h1m10 0h1m21 0h1m10 0h1m10 0h1m10 0h1m10 0h1m10 0h1m10 0h1m10 0h1m10 0h1m21 0h1m10 0h1m10 0h1m10 0h1m10 0h1m10 0h1m10 0h1m10 0h1m10 0h1m21 0h1m10 0h1m10 0h1m10 0h1m10 0h1m10 0h1m10 0h1m10 0h1m10 0h1m21 0h1m10 0h1m10 0h1m10 0h1m10 0h1m10 0h1m10 0h1m10 0h1m10 0h1m21 0h1m10 0h1m10 0h1m10 0h1m10 0h1m10 0h1m10 0h1m10 0h1m10 0h1m21 0h1m10 0h1M43 581.5h1m10 0h1m10 0h1m10 0h1m10 0h1m21 0h1m10 0h1m10 0h1m10 0h1m10 0h1m10 0h1m10 0h1m10 0h1m10 0h1m21 0h1m10 0h1m10 0h1m10 0h1m10 0h1m10 0h1m10 0h1m10 0h1m10 0h1m21 0h1m10 0h1m10 0h1m10 0h1m10 0h1m10 0h1m10 0h1m10 0h1m10 0h1m21 0h1m10 0h1m10 0h1m10 0h1m10 0h1m10 0h1m10 0h1m10 0h1m10 0h1m21 0h1m10 0h1m10 0h1m10 0h1m10 0h1m10 0h1m10 0h1m10 0h1m11 0h1m21 0h1m10 0h1m10 0h1m10 0h1m10 0h1m10 0h1m10 0h1m10 0h1m10 0h1m21 0h1m10 0h1m10 0h1m10 0h1m10 0h1m10 0h1m10 0h1m10 0h1m10 0h1m21 0h1m10 0h1m10 0h1m10 0h1m10 0h1m10 0h1m10 0h1m10 0h1m10 0h1m21 0h1m10 0h1m10 0h1m10 0h1m10 0h1m10 0h1m10 0h1m10 0h1m10 0h1m21 0h1m10 0h1m10 0h1m10 0h1m10 0h1m10 0h1m10 0h1m10 0h1m10 0h1m21 0h1m10 0h1m10 0h1m10 0h1m10 0h1m10 0h1m10 0h1m10 0h1m10 0h1m21 0h1m10 0h1M43 592.5h1m10 0h1m10 0h1m10 0h1m10 0h1m21 0h1m10 0h1m10 0h1m10 0h1m10 0h1m10 0h1m10 0h1m10 0h1m10 0h1m21 0h1m10 0h1m10 0h1m10 0h1m10 0h1m10 0h1m10 0h1m10 0h1m10 0h1m21 0h1m10 0h1m10 0h1m10 0h1m10 0h1m10 0h1m10 0h1m10 0h1m10 0h1m21 0h1m10 0h1m10 0h1m10 0h1m10 0h1m10 0h1m10 0h1m10 0h1m10 0h1m21 0h1m10 0h1m10 0h1m10 0h1m10 0h1m10 0h1m10 0h1m10 0h1m11 0h1m21 0h1m10 0h1m10 0h1m10 0h1m10 0h1m10 0h1m10 0h1m10 0h1m10 0h1m21 0h1m10 0h1m10 0h1m10 0h1m10 0h1m10 0h1m10 0h1m10 0h1m10 0h1m21 0h1m10 0h1m10 0h1m10 0h1m10 0h1m10 0h1m10 0h1m10 0h1m10 0h1m21 0h1m10 0h1m10 0h1m10 0h1m10 0h1m10 0h1m10 0h1m10 0h1m10 0h1m21 0h1m10 0h1m10 0h1m10 0h1m10 0h1m10 0h1m10 0h1m10 0h1m10 0h1m21 0h1m10 0h1m10 0h1m10 0h1m10 0h1m10 0h1m10 0h1m10 0h1m10 0h1m21 0h1m10 0h1M43 603.5h1m10 0h1m10 0h1m10 0h1m10 0h1m21 0h1m10 0h1m10 0h1m10 0h1m10 0h1m10 0h1m10 0h1m10 0h1m10 0h1m21 0h1m10 0h1m10 0h1m10 0h1m10 0h1m10 0h1m10 0h1m10 0h1m10 0h1m21 0h1m10 0h1m10 0h1m10 0h1m10 0h1m10 0h1m10 0h1m10 0h1m10 0h1m21 0h1m10 0h1m10 0h1m10 0h1m10 0h1m10 0h1m10 0h1m10 0h1m10 0h1m21 0h1m10 0h1m10 0h1m10 0h1m10 0h1m10 0h1m10 0h1m10 0h1m11 0h1m21 0h1m10 0h1m10 0h1m10 0h1m10 0h1m10 0h1m10 0h1m10 0h1m10 0h1m21 0h1m10 0h1m10 0h1m10 0h1m10 0h1m10 0h1m10 0h1m10 0h1m10 0h1m21 0h1m10 0h1m10 0h1m10 0h1m10 0h1m10 0h1m10 0h1m10 0h1m10 0h1m21 0h1m10 0h1m10 0h1m10 0h1m10 0h1m10 0h1m10 0h1m10 0h1m10 0h1m21 0h1m10 0h1m10 0h1m10 0h1m10 0h1m10 0h1m10 0h1m10 0h1m10 0h1m21 0h1m10 0h1m10 0h1m10 0h1m10 0h1m10 0h1m10 0h1m10 0h1m10 0h1m21 0h1m10 0h1M43 614.5h1m10 0h1m10 0h1m10 0h1m10 0h1m21 0h1m10 0h1m10 0h1m10 0h1m10 0h1m10 0h1m10 0h1m10 0h1m10 0h1m21 0h1m10 0h1m10 0h1m10 0h1m10 0h1m10 0h1m10 0h1m10 0h1m10 0h1m21 0h1m10 0h1m10 0h1m10 0h1m10 0h1m10 0h1m10 0h1m10 0h1m10 0h1m21 0h1m10 0h1m10 0h1m10 0h1m10 0h1m10 0h1m10 0h1m10 0h1m10 0h1m21 0h1m10 0h1m10 0h1m10 0h1m10 0h1m10 0h1m10 0h1m10 0h1m11 0h1m21 0h1m10 0h1m10 0h1m10 0h1m10 0h1m10 0h1m10 0h1m10 0h1m10 0h1m21 0h1m10 0h1m10 0h1m10 0h1m10 0h1m10 0h1m10 0h1m10 0h1m10 0h1m21 0h1m10 0h1m10 0h1m10 0h1m10 0h1m10 0h1m10 0h1m10 0h1m10 0h1m21 0h1m10 0h1m10 0h1m10 0h1m10 0h1m10 0h1m10 0h1m10 0h1m10 0h1m21 0h1m10 0h1m10 0h1m10 0h1m10 0h1m10 0h1m10 0h1m10 0h1m10 0h1m21 0h1m10 0h1m10 0h1m10 0h1m10 0h1m10 0h1m10 0h1m10 0h1m10 0h1m21 0h1m10 0h1M43 625.5h1m10 0h1m10 0h1m10 0h1m10 0h1m21 0h1m10 0h1m10 0h1m10 0h1m10 0h1m10 0h1m10 0h1m10 0h1m10 0h1m21 0h1m10 0h1m10 0h1m10 0h1m10 0h1m10 0h1m10 0h1m10 0h1m10 0h1m21 0h1m10 0h1m10 0h1m10 0h1m10 0h1m10 0h1m10 0h1m10 0h1m10 0h1m21 0h1m10 0h1m10 0h1m10 0h1m10 0h1m10 0h1m10 0h1m10 0h1m10 0h1m21 0h1m10 0h1m10 0h1m10 0h1m10 0h1m10 0h1m10 0h1m10 0h1m11 0h1m21 0h1m10 0h1m10 0h1m10 0h1m10 0h1m10 0h1m10 0h1m10 0h1m10 0h1m21 0h1m10 0h1m10 0h1m10 0h1m10 0h1m10 0h1m10 0h1m10 0h1m10 0h1m21 0h1m10 0h1m10 0h1m10 0h1m10 0h1m10 0h1m10 0h1m10 0h1m10 0h1m21 0h1m10 0h1m10 0h1m10 0h1m10 0h1m10 0h1m10 0h1m10 0h1m10 0h1m21 0h1m10 0h1m10 0h1m10 0h1m10 0h1m10 0h1m10 0h1m10 0h1m10 0h1m21 0h1m10 0h1m10 0h1m10 0h1m10 0h1m10 0h1m10 0h1m10 0h1m10 0h1m21 0h1m10 0h1M43 636.5h1m10 0h1m10 0h1m10 0h1m10 0h1m21 0h1m10 0h1m10 0h1m10 0h1m10 0h1m10 0h1m10 0h1m10 0h1m10 0h1m21 0h1m10 0h1m10 0h1m10 0h1m10 0h1m10 0h1m10 0h1m10 0h1m10 0h1m21 0h1m10 0h1m10 0h1m10 0h1m10 0h1m10 0h1m10 0h1m10 0h1m10 0h1m21 0h1m10 0h1m10 0h1m10 0h1m10 0h1m10 0h1m10 0h1m10 0h1m10 0h1m21 0h1m10 0h1m10 0h1m10 0h1m10 0h1m10 0h1m10 0h1m10 0h1m11 0h1m21 0h1m10 0h1m10 0h1m10 0h1m10 0h1m10 0h1m10 0h1m10 0h1m10 0h1m21 0h1m10 0h1m10 0h1m10 0h1m10 0h1m10 0h1m10 0h1m10 0h1m10 0h1m21 0h1m10 0h1m10 0h1m10 0h1m10 0h1m10 0h1m10 0h1m10 0h1m10 0h1m21 0h1m10 0h1m10 0h1m10 0h1m10 0h1m10 0h1m10 0h1m10 0h1m10 0h1m21 0h1m10 0h1m10 0h1m10 0h1m10 0h1m10 0h1m10 0h1m10 0h1m10 0h1m21 0h1m10 0h1m10 0h1m10 0h1m10 0h1m10 0h1m10 0h1m10 0h1m10 0h1m21 0h1m10 0h1M43 647.5h1m10 0h1m10 0h1m10 0h1m10 0h1m21 0h1m10 0h1m10 0h1m10 0h1m10 0h1m10 0h1m10 0h1m10 0h1m10 0h1m21 0h1m10 0h1m10 0h1m10 0h1m10 0h1m10 0h1m10 0h1m10 0h1m10 0h1m21 0h1m10 0h1m10 0h1m10 0h1m10 0h1m10 0h1m10 0h1m10 0h1m10 0h1m21 0h1m10 0h1m10 0h1m10 0h1m10 0h1m10 0h1m10 0h1m10 0h1m10 0h1m21 0h1m10 0h1m10 0h1m10 0h1m10 0h1m10 0h1m10 0h1m10 0h1m11 0h1m21 0h1m10 0h1m10 0h1m10 0h1m10 0h1m10 0h1m10 0h1m10 0h1m10 0h1m21 0h1m10 0h1m10 0h1m10 0h1m10 0h1m10 0h1m10 0h1m10 0h1m10 0h1m21 0h1m10 0h1m10 0h1m10 0h1m10 0h1m10 0h1m10 0h1m10 0h1m10 0h1m21 0h1m10 0h1m10 0h1m10 0h1m10 0h1m10 0h1m10 0h1m10 0h1m10 0h1m21 0h1m10 0h1m10 0h1m10 0h1m10 0h1m10 0h1m10 0h1m10 0h1m10 0h1m21 0h1m10 0h1m10 0h1m10 0h1m10 0h1m10 0h1m10 0h1m10 0h1m10 0h1m21 0h1m10 0h1M43 659.5h1m10 0h1m10 0h1m10 0h1m10 0h1m21 0h1m10 0h1m10 0h1m10 0h1m10 0h1m10 0h1m10 0h1m10 0h1m10 0h1m21 0h1m10 0h1m10 0h1m10 0h1m10 0h1m10 0h1m10 0h1m10 0h1m10 0h1m21 0h1m10 0h1m10 0h1m10 0h1m10 0h1m10 0h1m10 0h1m10 0h1m10 0h1m21 0h1m10 0h1m10 0h1m10 0h1m10 0h1m10 0h1m10 0h1m10 0h1m10 0h1m21 0h1m10 0h1m10 0h1m10 0h1m10 0h1m10 0h1m10 0h1m10 0h1m11 0h1m21 0h1m10 0h1m10 0h1m10 0h1m10 0h1m10 0h1m10 0h1m10 0h1m10 0h1m21 0h1m10 0h1m10 0h1m10 0h1m10 0h1m10 0h1m10 0h1m10 0h1m10 0h1m21 0h1m10 0h1m10 0h1m10 0h1m10 0h1m10 0h1m10 0h1m10 0h1m10 0h1m21 0h1m10 0h1m10 0h1m10 0h1m10 0h1m10 0h1m10 0h1m10 0h1m10 0h1m21 0h1m10 0h1m10 0h1m10 0h1m10 0h1m10 0h1m10 0h1m10 0h1m10 0h1m21 0h1m10 0h1m10 0h1m10 0h1m10 0h1m10 0h1m10 0h1m10 0h1m10 0h1m21 0h1m10 0h1M43 681.5h1m10 0h1m10 0h1m10 0h1m10 0h1m21 0h1m10 0h1m10 0h1m10 0h1m10 0h1m10 0h1m10 0h1m10 0h1m10 0h1m21 0h1m10 0h1m10 0h1m10 0h1m10 0h1m10 0h1m10 0h1m10 0h1m10 0h1m21 0h1m10 0h1m10 0h1m10 0h1m10 0h1m10 0h1m10 0h1m10 0h1m10 0h1m21 0h1m10 0h1m10 0h1m10 0h1m10 0h1m10 0h1m10 0h1m10 0h1m10 0h1m21 0h1m10 0h1m10 0h1m10 0h1m10 0h1m10 0h1m10 0h1m10 0h1m11 0h1m21 0h1m10 0h1m10 0h1m10 0h1m10 0h1m10 0h1m10 0h1m10 0h1m10 0h1m21 0h1m10 0h1m10 0h1m10 0h1m10 0h1m10 0h1m10 0h1m10 0h1m10 0h1m21 0h1m10 0h1m10 0h1m10 0h1m10 0h1m10 0h1m10 0h1m10 0h1m10 0h1m21 0h1m10 0h1m10 0h1m10 0h1m10 0h1m10 0h1m10 0h1m10 0h1m10 0h1m21 0h1m10 0h1m10 0h1m10 0h1m10 0h1m10 0h1m10 0h1m10 0h1m10 0h1m21 0h1m10 0h1m10 0h1m10 0h1m10 0h1m10 0h1m10 0h1m10 0h1m10 0h1m21 0h1m10 0h1M43 692.5h1m10 0h1m10 0h1m10 0h1m10 0h1m21 0h1m10 0h1m10 0h1m10 0h1m10 0h1m10 0h1m10 0h1m10 0h1m10 0h1m21 0h1m10 0h1m10 0h1m10 0h1m10 0h1m10 0h1m10 0h1m10 0h1m10 0h1m21 0h1m10 0h1m10 0h1m10 0h1m10 0h1m10 0h1m10 0h1m10 0h1m10 0h1m21 0h1m10 0h1m10 0h1m10 0h1m10 0h1m10 0h1m10 0h1m10 0h1m10 0h1m21 0h1m10 0h1m10 0h1m10 0h1m10 0h1m10 0h1m10 0h1m10 0h1m11 0h1m21 0h1m10 0h1m10 0h1m10 0h1m10 0h1m10 0h1m10 0h1m10 0h1m10 0h1m21 0h1m10 0h1m10 0h1m10 0h1m10 0h1m10 0h1m10 0h1m10 0h1m10 0h1m21 0h1m10 0h1m10 0h1m10 0h1m10 0h1m10 0h1m10 0h1m10 0h1m10 0h1m21 0h1m10 0h1m10 0h1m10 0h1m10 0h1m10 0h1m10 0h1m10 0h1m10 0h1m21 0h1m10 0h1m10 0h1m10 0h1m10 0h1m10 0h1m10 0h1m10 0h1m10 0h1m21 0h1m10 0h1m10 0h1m10 0h1m10 0h1m10 0h1m10 0h1m10 0h1m10 0h1m21 0h1m10 0h1M43 703.5h1m10 0h1m10 0h1m10 0h1m10 0h1m21 0h1m10 0h1m10 0h1m10 0h1m10 0h1m10 0h1m10 0h1m10 0h1m10 0h1m21 0h1m10 0h1m10 0h1m10 0h1m10 0h1m10 0h1m10 0h1m10 0h1m10 0h1m21 0h1m10 0h1m10 0h1m10 0h1m10 0h1m10 0h1m10 0h1m10 0h1m10 0h1m21 0h1m10 0h1m10 0h1m10 0h1m10 0h1m10 0h1m10 0h1m10 0h1m10 0h1m21 0h1m10 0h1m10 0h1m10 0h1m10 0h1m10 0h1m10 0h1m10 0h1m11 0h1m21 0h1m10 0h1m10 0h1m10 0h1m10 0h1m10 0h1m10 0h1m10 0h1m10 0h1m21 0h1m10 0h1m10 0h1m10 0h1m10 0h1m10 0h1m10 0h1m10 0h1m10 0h1m21 0h1m10 0h1m10 0h1m10 0h1m10 0h1m10 0h1m10 0h1m10 0h1m10 0h1m21 0h1m10 0h1m10 0h1m10 0h1m10 0h1m10 0h1m10 0h1m10 0h1m10 0h1m21 0h1m10 0h1m10 0h1m10 0h1m10 0h1m10 0h1m10 0h1m10 0h1m10 0h1m21 0h1m10 0h1m10 0h1m10 0h1m10 0h1m10 0h1m10 0h1m10 0h1m10 0h1m21 0h1m10 0h1M43 714.5h1m10 0h1m10 0h1m10 0h1m10 0h1m21 0h1m10 0h1m10 0h1m10 0h1m10 0h1m10 0h1m10 0h1m10 0h1m10 0h1m21 0h1m10 0h1m10 0h1m10 0h1m10 0h1m10 0h1m10 0h1m10 0h1m10 0h1m21 0h1m10 0h1m10 0h1m10 0h1m10 0h1m10 0h1m10 0h1m10 0h1m10 0h1m21 0h1m10 0h1m10 0h1m10 0h1m10 0h1m10 0h1m10 0h1m10 0h1m10 0h1m21 0h1m10 0h1m10 0h1m10 0h1m10 0h1m10 0h1m10 0h1m10 0h1m11 0h1m21 0h1m10 0h1m10 0h1m10 0h1m10 0h1m10 0h1m10 0h1m10 0h1m10 0h1m21 0h1m10 0h1m10 0h1m10 0h1m10 0h1m10 0h1m10 0h1m10 0h1m10 0h1m21 0h1m10 0h1m10 0h1m10 0h1m10 0h1m10 0h1m10 0h1m10 0h1m10 0h1m21 0h1m10 0h1m10 0h1m10 0h1m10 0h1m10 0h1m10 0h1m10 0h1m10 0h1m21 0h1m10 0h1m10 0h1m10 0h1m10 0h1m10 0h1m10 0h1m10 0h1m10 0h1m21 0h1m10 0h1m10 0h1m10 0h1m10 0h1m10 0h1m10 0h1m10 0h1m10 0h1m21 0h1m10 0h1M43 725.5h1m10 0h1m10 0h1m10 0h1m10 0h1m21 0h1m10 0h1m10 0h1m10 0h1m10 0h1m10 0h1m10 0h1m10 0h1m10 0h1m21 0h1m10 0h1m10 0h1m10 0h1m10 0h1m10 0h1m10 0h1m10 0h1m10 0h1m21 0h1m10 0h1m10 0h1m10 0h1m10 0h1m10 0h1m10 0h1m10 0h1m10 0h1m21 0h1m10 0h1m10 0h1m10 0h1m10 0h1m10 0h1m10 0h1m10 0h1m10 0h1m21 0h1m10 0h1m10 0h1m10 0h1m10 0h1m10 0h1m10 0h1m10 0h1m11 0h1m21 0h1m10 0h1m10 0h1m10 0h1m10 0h1m10 0h1m10 0h1m10 0h1m10 0h1m21 0h1m10 0h1m10 0h1m10 0h1m10 0h1m10 0h1m10 0h1m10 0h1m10 0h1m21 0h1m10 0h1m10 0h1m10 0h1m10 0h1m10 0h1m10 0h1m10 0h1m10 0h1m21 0h1m10 0h1m10 0h1m10 0h1m10 0h1m10 0h1m10 0h1m10 0h1m10 0h1m21 0h1m10 0h1m10 0h1m10 0h1m10 0h1m10 0h1m10 0h1m10 0h1m10 0h1m21 0h1m10 0h1m10 0h1m10 0h1m10 0h1m10 0h1m10 0h1m10 0h1m10 0h1m21 0h1m10 0h1M43 736.5h1m10 0h1m10 0h1m10 0h1m10 0h1m21 0h1m10 0h1m10 0h1m10 0h1m10 0h1m10 0h1m10 0h1m10 0h1m10 0h1m21 0h1m10 0h1m10 0h1m10 0h1m10 0h1m10 0h1m10 0h1m10 0h1m10 0h1m21 0h1m10 0h1m10 0h1m10 0h1m10 0h1m10 0h1m10 0h1m10 0h1m10 0h1m21 0h1m10 0h1m10 0h1m10 0h1m10 0h1m10 0h1m10 0h1m10 0h1m10 0h1m21 0h1m10 0h1m10 0h1m10 0h1m10 0h1m10 0h1m10 0h1m10 0h1m11 0h1m21 0h1m10 0h1m10 0h1m10 0h1m10 0h1m10 0h1m10 0h1m10 0h1m10 0h1m21 0h1m10 0h1m10 0h1m10 0h1m10 0h1m10 0h1m10 0h1m10 0h1m10 0h1m21 0h1m10 0h1m10 0h1m10 0h1m10 0h1m10 0h1m10 0h1m10 0h1m10 0h1m21 0h1m10 0h1m10 0h1m10 0h1m10 0h1m10 0h1m10 0h1m10 0h1m10 0h1m21 0h1m10 0h1m10 0h1m10 0h1m10 0h1m10 0h1m10 0h1m10 0h1m10 0h1m21 0h1m10 0h1m10 0h1m10 0h1m10 0h1m10 0h1m10 0h1m10 0h1m10 0h1m21 0h1m10 0h1M43 747.5h1m10 0h1m10 0h1m10 0h1m10 0h1m21 0h1m10 0h1m10 0h1m10 0h1m10 0h1m10 0h1m10 0h1m10 0h1m10 0h1m21 0h1m10 0h1m10 0h1m10 0h1m10 0h1m10 0h1m10 0h1m10 0h1m10 0h1m21 0h1m10 0h1m10 0h1m10 0h1m10 0h1m10 0h1m10 0h1m10 0h1m10 0h1m21 0h1m10 0h1m10 0h1m10 0h1m10 0h1m10 0h1m10 0h1m10 0h1m10 0h1m21 0h1m10 0h1m10 0h1m10 0h1m10 0h1m10 0h1m10 0h1m10 0h1m11 0h1m21 0h1m10 0h1m10 0h1m10 0h1m10 0h1m10 0h1m10 0h1m10 0h1m10 0h1m21 0h1m10 0h1m10 0h1m10 0h1m10 0h1m10 0h1m10 0h1m10 0h1m10 0h1m21 0h1m10 0h1m10 0h1m10 0h1m10 0h1m10 0h1m10 0h1m10 0h1m10 0h1m21 0h1m10 0h1m10 0h1m10 0h1m10 0h1m10 0h1m10 0h1m10 0h1m10 0h1m21 0h1m10 0h1m10 0h1m10 0h1m10 0h1m10 0h1m10 0h1m10 0h1m10 0h1m21 0h1m10 0h1m10 0h1m10 0h1m10 0h1m10 0h1m10 0h1m10 0h1m10 0h1m21 0h1m10 0h1M43 758.5h1m10 0h1m10 0h1m10 0h1m10 0h1m21 0h1m10 0h1m10 0h1m10 0h1m10 0h1m10 0h1m10 0h1m10 0h1m10 0h1m21 0h1m10 0h1m10 0h1m10 0h1m10 0h1m10 0h1m10 0h1m10 0h1m10 0h1m21 0h1m10 0h1m10 0h1m10 0h1m10 0h1m10 0h1m10 0h1m10 0h1m10 0h1m21 0h1m10 0h1m10 0h1m10 0h1m10 0h1m10 0h1m10 0h1m10 0h1m10 0h1m21 0h1m10 0h1m10 0h1m10 0h1m10 0h1m10 0h1m10 0h1m10 0h1m11 0h1m21 0h1m10 0h1m10 0h1m10 0h1m10 0h1m10 0h1m10 0h1m10 0h1m10 0h1m21 0h1m10 0h1m10 0h1m10 0h1m10 0h1m10 0h1m10 0h1m10 0h1m10 0h1m21 0h1m10 0h1m10 0h1m10 0h1m10 0h1m10 0h1m10 0h1m10 0h1m10 0h1m21 0h1m10 0h1m10 0h1m10 0h1m10 0h1m10 0h1m10 0h1m10 0h1m10 0h1m21 0h1m10 0h1m10 0h1m10 0h1m10 0h1m10 0h1m10 0h1m10 0h1m10 0h1m21 0h1m10 0h1m10 0h1m10 0h1m10 0h1m10 0h1m10 0h1m10 0h1m10 0h1m21 0h1m10 0h1M43 769.5h1m10 0h1m10 0h1m10 0h1m10 0h1m21 0h1m10 0h1m10 0h1m10 0h1m10 0h1m10 0h1m10 0h1m10 0h1m10 0h1m21 0h1m10 0h1m10 0h1m10 0h1m10 0h1m10 0h1m10 0h1m10 0h1m10 0h1m21 0h1m10 0h1m10 0h1m10 0h1m10 0h1m10 0h1m10 0h1m10 0h1m10 0h1m21 0h1m10 0h1m10 0h1m10 0h1m10 0h1m10 0h1m10 0h1m10 0h1m10 0h1m21 0h1m10 0h1m10 0h1m10 0h1m10 0h1m10 0h1m10 0h1m10 0h1m11 0h1m21 0h1m10 0h1m10 0h1m10 0h1m10 0h1m10 0h1m10 0h1m10 0h1m10 0h1m21 0h1m10 0h1m10 0h1m10 0h1m10 0h1m10 0h1m10 0h1m10 0h1m10 0h1m21 0h1m10 0h1m10 0h1m10 0h1m10 0h1m10 0h1m10 0h1m10 0h1m10 0h1m21 0h1m10 0h1m10 0h1m10 0h1m10 0h1m10 0h1m10 0h1m10 0h1m10 0h1m21 0h1m10 0h1m10 0h1m10 0h1m10 0h1m10 0h1m10 0h1m10 0h1m10 0h1m21 0h1m10 0h1m10 0h1m10 0h1m10 0h1m10 0h1m10 0h1m10 0h1m10 0h1m21 0h1m10 0h1M43 791.5h1m10 0h1m10 0h1m10 0h1m10 0h1m21 0h1m10 0h1m10 0h1m10 0h1m10 0h1m10 0h1m10 0h1m10 0h1m10 0h1m21 0h1m10 0h1m10 0h1m10 0h1m10 0h1m10 0h1m10 0h1m10 0h1m10 0h1m21 0h1m10 0h1m10 0h1m10 0h1m10 0h1m10 0h1m10 0h1m10 0h1m10 0h1m21 0h1m10 0h1m10 0h1m10 0h1m10 0h1m10 0h1m10 0h1m10 0h1m10 0h1m21 0h1m10 0h1m10 0h1m10 0h1m10 0h1m10 0h1m10 0h1m10 0h1m11 0h1m21 0h1m10 0h1m10 0h1m10 0h1m10 0h1m10 0h1m10 0h1m10 0h1m10 0h1m21 0h1m10 0h1m10 0h1m10 0h1m10 0h1m10 0h1m10 0h1m10 0h1m10 0h1m21 0h1m10 0h1m10 0h1m10 0h1m10 0h1m10 0h1m10 0h1m10 0h1m10 0h1m21 0h1m10 0h1m10 0h1m10 0h1m10 0h1m10 0h1m10 0h1m10 0h1m10 0h1m21 0h1m10 0h1m10 0h1m10 0h1m10 0h1m10 0h1m10 0h1m10 0h1m10 0h1m21 0h1m10 0h1m10 0h1m10 0h1m10 0h1m10 0h1m10 0h1m10 0h1m10 0h1m21 0h1m10 0h1M43 802.5h1m10 0h1m10 0h1m10 0h1m10 0h1m21 0h1m10 0h1m10 0h1m10 0h1m10 0h1m10 0h1m10 0h1m10 0h1m10 0h1m21 0h1m10 0h1m10 0h1m10 0h1m10 0h1m10 0h1m10 0h1m10 0h1m10 0h1m21 0h1m10 0h1m10 0h1m10 0h1m10 0h1m10 0h1m10 0h1m10 0h1m10 0h1m21 0h1m10 0h1m10 0h1m10 0h1m10 0h1m10 0h1m10 0h1m10 0h1m10 0h1m21 0h1m10 0h1m10 0h1m10 0h1m10 0h1m10 0h1m10 0h1m10 0h1m11 0h1m21 0h1m10 0h1m10 0h1m10 0h1m10 0h1m10 0h1m10 0h1m10 0h1m10 0h1m21 0h1m10 0h1m10 0h1m10 0h1m10 0h1m10 0h1m10 0h1m10 0h1m10 0h1m21 0h1m10 0h1m10 0h1m10 0h1m10 0h1m10 0h1m10 0h1m10 0h1m10 0h1m21 0h1m10 0h1m10 0h1m10 0h1m10 0h1m10 0h1m10 0h1m10 0h1m10 0h1m21 0h1m10 0h1m10 0h1m10 0h1m10 0h1m10 0h1m10 0h1m10 0h1m10 0h1m21 0h1m10 0h1m10 0h1m10 0h1m10 0h1m10 0h1m10 0h1m10 0h1m10 0h1m21 0h1m10 0h1M43 813.5h1m10 0h1m10 0h1m10 0h1m10 0h1m21 0h1m10 0h1m10 0h1m10 0h1m10 0h1m10 0h1m10 0h1m10 0h1m10 0h1m21 0h1m10 0h1m10 0h1m10 0h1m10 0h1m10 0h1m10 0h1m10 0h1m10 0h1m21 0h1m10 0h1m10 0h1m10 0h1m10 0h1m10 0h1m10 0h1m10 0h1m10 0h1m21 0h1m10 0h1m10 0h1m10 0h1m10 0h1m10 0h1m10 0h1m10 0h1m10 0h1m21 0h1m10 0h1m10 0h1m10 0h1m10 0h1m10 0h1m10 0h1m10 0h1m11 0h1m21 0h1m10 0h1m10 0h1m10 0h1m10 0h1m10 0h1m10 0h1m10 0h1m10 0h1m21 0h1m10 0h1m10 0h1m10 0h1m10 0h1m10 0h1m10 0h1m10 0h1m10 0h1m21 0h1m10 0h1m10 0h1m10 0h1m10 0h1m10 0h1m10 0h1m10 0h1m10 0h1m21 0h1m10 0h1m10 0h1m10 0h1m10 0h1m10 0h1m10 0h1m10 0h1m10 0h1m21 0h1m10 0h1m10 0h1m10 0h1m10 0h1m10 0h1m10 0h1m10 0h1m10 0h1m21 0h1m10 0h1m10 0h1m10 0h1m10 0h1m10 0h1m10 0h1m10 0h1m10 0h1m21 0h1m10 0h1M43 824.5h1m10 0h1m10 0h1m10 0h1m10 0h1m21 0h1m10 0h1m10 0h1m10 0h1m10 0h1m10 0h1m10 0h1m10 0h1m10 0h1m21 0h1m10 0h1m10 0h1m10 0h1m10 0h1m10 0h1m10 0h1m10 0h1m10 0h1m21 0h1m10 0h1m10 0h1m10 0h1m10 0h1m10 0h1m10 0h1m10 0h1m10 0h1m21 0h1m10 0h1m10 0h1m10 0h1m10 0h1m10 0h1m10 0h1m10 0h1m10 0h1m21 0h1m10 0h1m10 0h1m10 0h1m10 0h1m10 0h1m10 0h1m10 0h1m11 0h1m21 0h1m10 0h1m10 0h1m10 0h1m10 0h1m10 0h1m10 0h1m10 0h1m10 0h1m21 0h1m10 0h1m10 0h1m10 0h1m10 0h1m10 0h1m10 0h1m10 0h1m10 0h1m21 0h1m10 0h1m10 0h1m10 0h1m10 0h1m10 0h1m10 0h1m10 0h1m10 0h1m21 0h1m10 0h1m10 0h1m10 0h1m10 0h1m10 0h1m10 0h1m10 0h1m10 0h1m21 0h1m10 0h1m10 0h1m10 0h1m10 0h1m10 0h1m10 0h1m10 0h1m10 0h1m21 0h1m10 0h1m10 0h1m10 0h1m10 0h1m10 0h1m10 0h1m10 0h1m10 0h1m21 0h1m10 0h1M43 835.5h1m10 0h1m10 0h1m10 0h1m10 0h1m21 0h1m10 0h1m10 0h1m10 0h1m10 0h1m10 0h1m10 0h1m10 0h1m10 0h1m21 0h1m10 0h1m10 0h1m10 0h1m10 0h1m10 0h1m10 0h1m10 0h1m10 0h1m21 0h1m10 0h1m10 0h1m10 0h1m10 0h1m10 0h1m10 0h1m10 0h1m10 0h1m21 0h1m10 0h1m10 0h1m10 0h1m10 0h1m10 0h1m10 0h1m10 0h1m10 0h1m21 0h1m10 0h1m10 0h1m10 0h1m10 0h1m10 0h1m10 0h1m10 0h1m11 0h1m21 0h1m10 0h1m10 0h1m10 0h1m10 0h1m10 0h1m10 0h1m10 0h1m10 0h1m21 0h1m10 0h1m10 0h1m10 0h1m10 0h1m10 0h1m10 0h1m10 0h1m10 0h1m21 0h1m10 0h1m10 0h1m10 0h1m10 0h1m10 0h1m10 0h1m10 0h1m10 0h1m21 0h1m10 0h1m10 0h1m10 0h1m10 0h1m10 0h1m10 0h1m10 0h1m10 0h1m21 0h1m10 0h1m10 0h1m10 0h1m10 0h1m10 0h1m10 0h1m10 0h1m10 0h1m21 0h1m10 0h1m10 0h1m10 0h1m10 0h1m10 0h1m10 0h1m10 0h1m10 0h1m21 0h1m10 0h1M43 846.5h1m10 0h1m10 0h1m10 0h1m10 0h1m21 0h1m10 0h1m10 0h1m10 0h1m10 0h1m10 0h1m10 0h1m10 0h1m10 0h1m21 0h1m10 0h1m10 0h1m10 0h1m10 0h1m10 0h1m10 0h1m10 0h1m10 0h1m21 0h1m10 0h1m10 0h1m10 0h1m10 0h1m10 0h1m10 0h1m10 0h1m10 0h1m21 0h1m10 0h1m10 0h1m10 0h1m10 0h1m10 0h1m10 0h1m10 0h1m10 0h1m21 0h1m10 0h1m10 0h1m10 0h1m10 0h1m10 0h1m10 0h1m10 0h1m11 0h1m21 0h1m10 0h1m10 0h1m10 0h1m10 0h1m10 0h1m10 0h1m10 0h1m10 0h1m21 0h1m10 0h1m10 0h1m10 0h1m10 0h1m10 0h1m10 0h1m10 0h1m10 0h1m21 0h1m10 0h1m10 0h1m10 0h1m10 0h1m10 0h1m10 0h1m10 0h1m10 0h1m21 0h1m10 0h1m10 0h1m10 0h1m10 0h1m10 0h1m10 0h1m10 0h1m10 0h1m21 0h1m10 0h1m10 0h1m10 0h1m10 0h1m10 0h1m10 0h1m10 0h1m10 0h1m21 0h1m10 0h1m10 0h1m10 0h1m10 0h1m10 0h1m10 0h1m10 0h1m10 0h1m21 0h1m10 0h1M43 857.5h1m10 0h1m10 0h1m10 0h1m10 0h1m21 0h1m10 0h1m10 0h1m10 0h1m10 0h1m10 0h1m10 0h1m10 0h1m10 0h1m21 0h1m10 0h1m10 0h1m10 0h1m10 0h1m10 0h1m10 0h1m10 0h1m10 0h1m21 0h1m10 0h1m10 0h1m10 0h1m10 0h1m10 0h1m10 0h1m10 0h1m10 0h1m21 0h1m10 0h1m10 0h1m10 0h1m10 0h1m10 0h1m10 0h1m10 0h1m10 0h1m21 0h1m10 0h1m10 0h1m10 0h1m10 0h1m10 0h1m10 0h1m10 0h1m11 0h1m21 0h1m10 0h1m10 0h1m10 0h1m10 0h1m10 0h1m10 0h1m10 0h1m10 0h1m21 0h1m10 0h1m10 0h1m10 0h1m10 0h1m10 0h1m10 0h1m10 0h1m10 0h1m21 0h1m10 0h1m10 0h1m10 0h1m10 0h1m10 0h1m10 0h1m10 0h1m10 0h1m21 0h1m10 0h1m10 0h1m10 0h1m10 0h1m10 0h1m10 0h1m10 0h1m10 0h1m21 0h1m10 0h1m10 0h1m10 0h1m10 0h1m10 0h1m10 0h1m10 0h1m10 0h1m21 0h1m10 0h1m10 0h1m10 0h1m10 0h1m10 0h1m10 0h1m10 0h1m10 0h1m21 0h1m10 0h1M43 868.5h1m10 0h1m10 0h1m10 0h1m10 0h1m21 0h1m10 0h1m10 0h1m10 0h1m10 0h1m10 0h1m10 0h1m10 0h1m10 0h1m21 0h1m10 0h1m10 0h1m10 0h1m10 0h1m10 0h1m10 0h1m10 0h1m10 0h1m21 0h1m10 0h1m10 0h1m10 0h1m10 0h1m10 0h1m10 0h1m10 0h1m10 0h1m21 0h1m10 0h1m10 0h1m10 0h1m10 0h1m10 0h1m10 0h1m10 0h1m10 0h1m21 0h1m10 0h1m10 0h1m10 0h1m10 0h1m10 0h1m10 0h1m10 0h1m11 0h1m21 0h1m10 0h1m10 0h1m10 0h1m10 0h1m10 0h1m10 0h1m10 0h1m10 0h1m21 0h1m10 0h1m10 0h1m10 0h1m10 0h1m10 0h1m10 0h1m10 0h1m10 0h1m21 0h1m10 0h1m10 0h1m10 0h1m10 0h1m10 0h1m10 0h1m10 0h1m10 0h1m21 0h1m10 0h1m10 0h1m10 0h1m10 0h1m10 0h1m10 0h1m10 0h1m10 0h1m21 0h1m10 0h1m10 0h1m10 0h1m10 0h1m10 0h1m10 0h1m10 0h1m10 0h1m21 0h1m10 0h1m10 0h1m10 0h1m10 0h1m10 0h1m10 0h1m10 0h1m10 0h1m21 0h1m10 0h1" stroke="#50555c" stroke-width="1" fill="none"/>
<path d="M97 152.5h3m107 0h3m107 0h3m107 0h3m107 0h3m108 0h3m107 0h3m107 0h3m107 0h3m107 0h3m107 0h3m107 0h3M97 163.5h3m107 0h3m107 0h3m107 0h3m107 0h3m108 0h3m107 0h3m107 0h3m107 0h3m107 0h3m107 0h3m107 0h3M97 174.5h3m107 0h3m107 0h3m107 0h3m107 0h3m108 0h3m107 0h3m107 0h3m107 0h3m107 0h3m107 0h3m107 0h3M97 185.5h3m107 0h3m107 0h3m107 0h3m107 0h3m108 0h3m107 0h3m107 0h3m107 0h3m107 0h3m107 0h3m107 0h3M97 196.5h3m107 0h3m107 0h3m107 0h3m107 0h3m108 0h3m107 0h3m107 0h3m107 0h3m107 0h3m107 0h3m107 0h3M97 207.5h3m107 0h3m107 0h3m107 0h3m107 0h3m108 0h3m107 0h3m107 0h3m107 0h3m107 0h3m107 0h3m107 0h3M97 218.5h3m107 0h3m107 0h3m107 0h3m107 0h3m108 0h3m107 0h3m107 0h3m107 0h3m107 0h3m107 0h3m107 0h3M97 240.5h3m107 0h3m107 0h3m107 0h3m107 0h3m108 0h3m107 0h3m107 0h3m107 0h3m107 0h3m107 0h3m107 0h3M97 251.5h3m107 0h3m107 0h3m107 0h3m107 0h3m108 0h3m107 0h3m107 0h3m107 0h3m107 0h3m107 0h3m107 0h3M97 262.5h3m107 0h3m107 0h3m107 0h3m107 0h3m108 0h3m107 0h3m107 0h3m107 0h3m107 0h3m107 0h3m107 0h3M97 273.5h3m107 0h3m107 0h3m107 0h3m107 0h3m108 0h3m107 0h3m107 0h3m107 0h3m107 0h3m107 0h3m107 0h3M97 284.5h3m107 0h3m107 0h3m107 0h3m107 0h3m108 0h3m107 0h3m107 0h3m107 0h3m107 0h3m107 0h3m107 0h3M97 295.5h3m107 0h3m107 0h3m107 0h3m107 0h3m108 0h3m107 0h3m107 0h3m107 0h3m107 0h3m107 0h3m107 0h3M97 306.5h3m107 0h3m107 0h3m107 0h3m107 0h3m108 0h3m107 0h3m107 0h3m107 0h3m107 0h3m107 0h3m107 0h3M97 317.5h3m107 0h3m107 0h3m107 0h3m107 0h3m108 0h3m107 0h3m107 0h3m107 0h3m107 0h3m107 0h3m107 0h3M97 328.5h3m107 0h3m107 0h3m107 0h3m107 0h3m108 0h3m107 0h3m107 0h3m107 0h3m107 0h3m107 0h3m107 0h3M97 350.5h3m107 0h3m107 0h3m107 0h3m107 0h3m108 0h3m107 0h3m107 0h3m107 0h3m107 0h3m107 0h3m107 0h3M97 361.5h3m107 0h3m107 0h3m107 0h3m107 0h3m108 0h3m107 0h3m107 0h3m107 0h3m107 0h3m107 0h3m107 0h3M97 372.5h3m107 0h3m107 0h3m107 0h3m107 0h3m108 0h3m107 0h3m107 0h3m107 0h3m107 0h3m107 0h3m107 0h3M97 383.5h3m107 0h3m107 0h3m107 0h3m107 0h3m108 0h3m107 0h3m107 0h3m107 0h3m107 0h3m107 0h3m107 0h3M97 394.5h3m107 0h3m107 0h3m107 0h3m107 0h3m108 0h3m107 0h3m107 0h3m107 0h3m107 0h3m107 0h3m107 0h3M97 405.5h3m107 0h3m107 0h3m107 0h3m107 0h3m108 0h3m107 0h3m107 0h3m107 0h3m107 0h3m107 0h3m107 0h3M97 416.5h3m107 0h3m107 0h3m107 0h3m107 0h3m108 0h3m107 0h3m107 0h3m107 0h3m107 0h3m107 0h3m107 0h3M97 427.5h3m107 0h3m107 0h3m107 0h3m107 0h3m108 0h3m107 0h3m107 0h3m107 0h3m107 0h3m107 0h3m107 0h3M97 438.5h3m107 0h3m107 0h3m107 0h3m107 0h3m108 0h3m107 0h3m107 0h3m107 0h3m107 0h3m107 0h3m107 0h3M97 460.5h3m107 0h3m107 0h3m107 0h3m107 0h3m108 0h3m107 0h3m107 0h3m107 0h3m107 0h3m107 0h3m107 0h3M97 471.5h3m107 0h3m107 0h3m107 0h3m107 0h3m108 0h3m107 0h3m107 0h3m107 0h3m107 0h3m107 0h3m107 0h3M97 482.5h3m107 0h3m107 0h3m107 0h3m107 0h3m108 0h3m107 0h3m107 0h3m107 0h3m107 0h3m107 0h3m107 0h3M97 493.5h3m107 0h3m107 0h3m107 0h3m107 0h3m108 0h3m107 0h3m107 0h3m107 0h3m107 0h3m107 0h3m107 0h3M97 504.5h3m107 0h3m107 0h3m107 0h3m107 0h3m108 0h3m107 0h3m107 0h3m107 0h3m107 0h3m107 0h3m107 0h3M97 515.5h3m107 0h3m107 0h3m107 0h3m107 0h3m108 0h3m107 0h3m107 0h3m107 0h3m107 0h3m107 0h3m107 0h3M97 526.5h3m107 0h3m107 0h3m107 0h3m107 0h3m108 0h3m107 0h3m107 0h3m107 0h3m107 0h3m107 0h3m107 0h3M97 537.5h3m107 0h3m107 0h3m107 0h3m107 0h3m108 0h3m107 0h3m107 0h3m107 0h3m107 0h3m107 0h3m107 0h3M97 548.5h3m107 0h3m107 0h3m107 0h3m107 0h3m108 0h3m107 0h3m107 0h3m107 0h3m107 0h3m107 0h3m107 0h3M97 570.5h3m107 0h3m107 0h3m107 0h3m107 0h3m108 0h3m107 0h3m107 0h3m107 0h3m107 0h3m107 0h3m107 0h3M97 581.5h3m107 0h3m107 0h3m107 0h3m107 0h3m108 0h3m107 0h3m107 0h3m107 0h3m107 0h3m107 0h3m107 0h3M97 592.5h3m107 0h3m107 0h3m107 0h3m107 0h3m108 0h3m107 0h3m107 0h3m107 0h3m107 0h3m107 0h3m107 0h3M97 603.5h3m107 0h3m107 0h3m107 0h3m107 0h3m108 0h3m107 0h3m107 0h3m107 0h3m107 0h3m107 0h3m107 0h3M97 614.5h3m107 0h3m107 0h3m107 0h3m107 0h3m108 0h3m107 0h3m107 0h3m107 0h3m107 0h3m107 0h3m107 0h3M97 625.5h3m107 0h3m107 0h3m107 0h3m107 0h3m108 0h3m107 0h3m107 0h3m107 0h3m107 0h3m107 0h3m107 0h3M97 636.5h3m107 0h3m107 0h3m107 0h3m107 0h3m108 0h3m107 0h3m107 0h3m107 0h3m107 0h3m107 0h3m107 0h3M97 647.5h3m107 0h3m107 0h3m107 0h3m107 0h3m108 0h3m107 0h3m107 0h3m107 0h3m107 0h3m107 0h3m107 0h3M97 659.5h3m107 0h3m107 0h3m107 0h3m107 0h3m108 0h3m107 0h3m107 0h3m107 0h3m107 0h3m107 0h3m107 0h3M97 681.5h3m107 0h3m107 0h3m107 0h3m107 0h3m108 0h3m107 0h3m107 0h3m107 0h3m107 0h3m107 0h3m107 0h3M97 692.5h3m107 0h3m107 0h3m107 0h3m107 0h3m108 0h3m107 0h3m107 0h3m107 0h3m107 0h3m107 0h3m107 0h3M97 703.5h3m107 0h3m107 0h3m107 0h3m107 0h3m108 0h3m107 0h3m107 0h3m107 0h3m107 0h3m107 0h3m107 0h3M97 714.5h3m107 0h3m107 0h3m107 0h3m107 0h3m108 0h3m107 0h3m107 0h3m107 0h3m107 0h3m107 0h3m107 0h3M97 725.5h3m107 0h3m107 0h3m107 0h3m107 0h3m108 0h3m107 0h3m107 0h3m107 0h3m107 0h3m107 0h3m107 0h3M97 736.5h3m107 0h3m107 0h3m107 0h3m107 0h3m108 0h3m107 0h3m107 0h3m107 0h3m107 0h3m107 0h3m107 0h3M97 747.5h3m107 0h3m107 0h3m107 0h3m107 0h3m108 0h3m107 0h3m107 0h3m107 0h3m107 0h3m107 0h3m107 0h3M97 758.5h3m107 0h3m107 0h3m107 0h3m107 0h3m108 0h3m107 0h3m107 0h3m107 0h3m107 0h3m107 0h3m107 0h3M97 769.5h3m107 0h3m107 0h3m107 0h3m107 0h3m108 0h3m107 0h3m107 0h3m107 0h3m107 0h3m107 0h3m107 0h3M97 791.5h3m107 0h3m107 0h3m107 0h3m107 0h3m108 0h3m107 0h3m107 0h3m107 0h3m107 0h3m107 0h3m107 0h3M97 802.5h3m107 0h3m107 0h3m107 0h3m107 0h3m108 0h3m107 0h3m107 0h3m107 0h3m107 0h3m107 0h3m107 0h3M97 813.5h3m107 0h3m107 0h3m107 0h3m107 0h3m108 0h3m107 0h3m107 0h3m107 0h3m107 0h3m107 0h3m107 0h3M97 824.5h3m107 0h3m107 0h3m107 0h3m107 0h3m108 0h3m107 0h3m107 0h3m107 0h3m107 0h3m107 0h3m107 0h3M97 835.5h3m107 0h3m107 0h3m107 0h3m107 0h3m108 0h3m107 0h3m107 0h3m107 0h3m107 0h3m107 0h3m107 0h3M97 846.5h3m107 0h3m107 0h3m107 0h3m107 0h3m108 0h3m107 0h3m107 0h3m107 0h3m107 0h3m107 0h3m107 0h3M97 857.5h3m107 0h3m107 0h3m107 0h3m107 0h3m108 0h3m107 0h3m107 0h3m107 0h3m107 0h3m107 0h3m107 0h3M97 868.5h3m107 0h3m107 0h3m107 0h3m107 0h3m108 0h3m107 0h3m107 0h3m107 0h3m107 0h3m107 0h3m107 0h3" stroke="#6c6f74" stroke-width="1" fill="none"/>
<path d="M43.5 228v3M54.5 228v3M65.5 228v3M76.5 228v3M87.5 228v3M109.5 228v3M120.5 228v3M131.5 228v3M142.5 228v3M153.5 228v3M164.5 228v3M175.5 228v3M186.5 228v3M197.5 228v3M219.5 228v3M230.5 228v3M241.5 228v3M252.5 228v3M263.5 228v3M274.5 228v3M285.5 228v3M296.5 228v3M307.5 228v3M329.5 228v3M340.5 228v3M351.5 228v3M362.5 228v3M373.5 228v3M384.5 228v3M395.5 228v3M406.5 228v3M417.5 228v3M439.5 228v3M450.5 228v3M461.5 228v3M472.5 228v3M483.5 228v3M494.5 228v3M505.5 228v3M516.5 228v3M527.5 228v3M549.5 228v3M560.5 228v3M571.5 228v3M582.5 228v3M593.5 228v3M604.5 228v3M615.5 228v3M626.5 228v3M638.5 228v3M660.5 228v3M671.5 228v3M682.5 228v3M693.5 228v3M704.5 228v3M715.5 228v3M726.5 228v3M737.5 228v3M748.5 228v3M770.5 228v3M781.5 228v3M792.5 228v3M803.5 228v3M814.5 228v3M825.5 228v3M836.5 228v3M847.5 228v3M858.5 228v3M880.5 228v3M891.5 228v3M902.5 228v3M913.5 228v3M924.5 228v3M935.5 228v3M946.5 228v3M957.5 228v3M968.5 228v3M990.5 228v3M1001.5 228v3M1012.5 228v3M1023.5 228v3M1034.5 228v3M1045.5 228v3M1056.5 228v3M1067.5 228v3M1078.5 228v3M1100.5 228v3M1111.5 228v3M1122.5 228v3M1133.5 228v3M1144.5 228v3M1155.5 228v3M1166.5 228v3M1177.5 228v3M1188.5 228v3M1210.5 228v3M1221.5 228v3M1232.5 228v3M1243.5 228v3M1254.5 228v3M1265.5 228v3M1276.5 228v3M1287.5 228v3M1298.5 228v3M1320.5 228v3M1331.5 228v3M43.5 338v3M54.5 338v3M65.5 338v3M76.5 338v3M87.5 338v3M109.5 338v3M120.5 338v3M131.5 338v3M142.5 338v3M153.5 338v3M164.5 338v3M175.5 338v3M186.5 338v3M197.5 338v3M219.5 338v3M230.5 338v3M241.5 338v3M252.5 338v3M263.5 338v3M274.5 338v3M285.5 338v3M296.5 338v3M307.5 338v3M329.5 338v3M340.5 338v3M351.5 338v3M362.5 338v3M373.5 338v3M384.5 338v3M395.5 338v3M406.5 338v3M417.5 338v3M439.5 338v3M450.5 338v3M461.5 338v3M472.5 338v3M483.5 338v3M494.5 338v3M505.5 338v3M516.5 338v3M527.5 338v3M549.5 338v3M560.5 338v3M571.5 338v3M582.5 338v3M593.5 338v3M604.5 338v3M615.5 338v3M626.5 338v3M638.5 338v3M660.5 338v3M671.5 338v3M682.5 338v3M693.5 338v3M704.5 338v3M715.5 338v3M726.5 338v3M737.5 338v3M748.5 338v3M770.5 338v3M781.5 338v3M792.5 338v3M803.5 338v3M814.5 338v3M825.5 338v3M836.5 338v3M847.5 338v3M858.5 338v3M880.5 338v3M891.5 338v3M902.5 338v3M913.5 338v3M924.5 338v3M935.5 338v3M946.5 338v3M957.5 338v3M968.5 338v3M990.5 338v3M1001.5 338v3M1012.5 338v3M1023.5 338v3M1034.5 338v3M1045.5 338v3M1056.5 338v3M1067.5 338v3M1078.5 338v3M1100.5 338v3M1111.5 338v3M1122.5 338v3M1133.5 338v3M1144.5 338v3M1155.5 338v3M1166.5 338v3M1177.5 338v3M1188.5 338v3M1210.5 338v3M1221.5 338v3M1232.5 338v3M1243.5 338v3M1254.5 338v3M1265.5 338v3M1276.5 338v3M1287.5 338v3M1298.5 338v3M1320.5 338v3M1331.5 338v3M43.5 448v3M54.5 448v3M65.5 448v3M76.5 448v3M87.5 448v3M109.5 448v3M120.5 448v3M131.5 448v3M142.5 448v3M153.5 448v3M164.5 448v3M175.5 448v3M186.5 448v3M197.5 448v3M219.5 448v3M230.5 448v3M241.5 448v3M252.5 448v3M263.5 448v3M274.5 448v3M285.5 448v3M296.5 448v3M307.5 448v3M329.5 448v3M340.5 448v3M351.5 448v3M362.5 448v3M373.5 448v3M384.5 448v3M395.5 448v3M406.5 448v3M417.5 448v3M439.5 448v3M450.5 448v3M461.5 448v3M472.5 448v3M483.5 448v3M494.5 448v3M505.5 448v3M516.5 448v3M527.5 448v3M549.5 448v3M560.5 448v3M571.5 448v3M582.5 448v3M593.5 448v3M604.5 448v3M615.5 448v3M626.5 448v3M638.5 448v3M660.5 448v3M671.5 448v3M682.5 448v3M693.5 448v3M704.5 448v3M715.5 448v3M726.5 448v3M737.5 448v3M748.5 448v3M770.5 448v3M781.5 448v3M792.5 448v3M803.5 448v3M814.5 448v3M825.5 448v3M836.5 448v3M847.5 448v3M858.5 448v3M880.5 448v3M891.5 448v3M902.5 448v3M913.5 448v3M924.5 448v3M935.5 448v3M946.5 448v3M957.5 448v3M968.5 448v3M990.5 448v3M1001.5 448v3M1012.5 448v3M1023.5 448v3M1034.5 448v3M1045.5 448v3M1056.5 448v3M1067.5 448v3M1078.5 448v3M1100.5 448v3M1111.5 448v3M1122.5 448v3M1133.5 448v3M1144.5 448v3M1155.5 448v3M1166.5 448v3M1177.5 448v3M1188.5 448v3M1210.5 448v3M1221.5 448v3M1232.5 448v3M1243.5 448v3M1254.5 448v3M1265.5 448v3M1276.5 448v3M1287.5 448v3M1298.5 448v3M1320.5 448v3M1331.5 448v3M43.5 558v3M54.5 558v3M65.5 558v3M76.5 558v3M87.5 558v3M109.5 558v3M120.5 558v3M131.5 558v3M142.5 558v3M153.5 558v3M164.5 558v3M175.5 558v3M186.5 558v3M197.5 558v3M219.5 558v3M230.5 558v3M241.5 558v3M252.5 558v3M263.5 558v3M274.5 558v3M285.5 558v3M296.5 558v3M307.5 558v3M329.5 558v3M340.5 558v3M351.5 558v3M362.5 558v3M373.5 558v3M384.5 558v3M395.5 558v3M406.5 558v3M417.5 558v3M439.5 558v3M450.5 558v3M461.5 558v3M472.5 558v3M483.5 558v3M494.5 558v3M505.5 558v3M516.5 558v3M527.5 558v3M549.5 558v3M560.5 558v3M571.5 558v3M582.5 558v3M593.5 558v3M604.5 558v3M615.5 558v3M626.5 558v3M638.5 558v3M660.5 558v3M671.5 558v3M682.5 558v3M693.5 558v3M704.5 558v3M715.5 558v3M726.5 558v3M737.5 558v3M748.5 558v3M770.5 558v3M781.5 558v3M792.5 558v3M803.5 558v3M814.5 558v3M825.5 558v3M836.5 558v3M847.5 558v3M858.5 558v3M880.5 558v3M891.5 558v3M902.5 558v3M913.5 558v3M924.5 558v3M935.5 558v3M946.5 558v3M957.5 558v3M968.5 558v3M990.5 558v3M1001.5 558v3M1012.5 558v3M1023.5 558v3M1034.5 558v3M1045.5 558v3M1056.5 558v3M1067.5 558v3M1078.5 558v3M1100.5 558v3M1111.5 558v3M1122.5 558v3M1133.5 558v3M1144.5 558v3M1155.5 558v3M1166.5 558v3M1177.5 558v3M1188.5 558v3M1210.5 558v3M1221.5 558v3M1232.5 558v3M1243.5 558v3M1254.5 558v3M1265.5 558v3M1276.5 558v3M1287.5 558v3M1298.5 558v3M1320.5 558v3M1331.5 558v3M43.5 669v3M54.5 669v3M65.5 669v3M76.5 669v3M87.5 669v3M109.5 669v3M120.5 669v3M131.5 669v3M142.5 669v3M153.5 669v3M164.5 669v3M175.5 669v3M186.5 669v3M197.5 669v3M219.5 669v3M230.5 669v3M241.5 669v3M252.5 669v3M263.5 669v3M274.5 669v3M285.5 669v3M296.5 669v3M307.5 669v3M329.5 669v3M340.5 669v3M351.5 669v3M362.5 669v3M373.5 669v3M384.5 669v3M395.5 669v3M406.5 669v3M417.5 669v3M439.5 669v3M450.5 669v3M461.5 669v3M472.5 669v3M483.5 669v3M494.5 669v3M505.5 669v3M516.5 669v3M527.5 669v3M549.5 669v3M560.5 669v3M571.5 669v3M582.5 669v3M593.5 669v3M604.5 669v3M615.5 669v3M626.5 669v3M638.5 669v3M660.5 669v3M671.5 669v3M682.5 669v3M693.5 669v3M704.5 669v3M715.5 669v3M726.5 669v3M737.5 669v3M748.5 669v3M770.5 669v3M781.5 669v3M792.5 669v3M803.5 669v3M814.5 669v3M825.5 669v3M836.5 669v3M847.5 669v3M858.5 669v3M880.5 669v3M891.5 669v3M902.5 669v3M913.5 669v3M924.5 669v3M935.5 669v3M946.5 669v3M957.5 669v3M968.5 669v3M990.5 669v3M1001.5 669v3M1012.5 669v3M1023.5 669v3M1034.5 669v3M1045.5 669v3M1056.5 669v3M1067.5 669v3M1078.5 669v3M1100.5 669v3M1111.5 669v3M1122.5 669v3M1133.5 669v3M1144.5 669v3M1155.5 669v3M1166.5 669v3M1177.5 669v3M1188.5 669v3M1210.5 669v3M1221.5 669v3M1232.5 669v3M1243.5 669v3M1254.5 669v3M1265.5 669v3M1276.5 669v3M1287.5 669v3M1298.5 669v3M1320.5 669v3M1331.5 669v3M43.5 779v3M54.5 779v3M65.5 779v3M76.5 779v3M87.5 779v3M109.5 779v3M120.5 779v3M131.5 779v3M142.5 779v3M153.5 779v3M164.5 779v3M175.5 779v3M186.5 779v3M197.5 779v3M219.5 779v3M230.5 779v3M241.5 779v3M252.5 779v3M263.5 779v3M274.5 779v3M285.5 779v3M296.5 779v3M307.5 779v3M329.5 779v3M340.5 779v3M351.5 779v3M362.5 779v3M373.5 779v3M384.5 779v3M395.5 779v3M406.5 779v3M417.5 779v3M439.5 779v3M450.5 779v3M461.5 779v3M472.5 779v3M483.5 779v3M494.5 779v3M505.5 779v3M516.5 779v3M527.5 779v3M549.5 779v3M560.5 779v3M571.5 779v3M582.5 779v3M593.5 779v3M604.5 779v3M615.5 779v3M626.5 779v3M638.5 779v3M660.5 779v3M671.5 779v3M682.5 779v3M693.5 779v3M704.5 779v3M715.5 779v3M726.5 779v3M737.5 779v3M748.5 779v3M770.5 779v3M781.5 779v3M792.5 779v3M803.5 779v3M814.5 779v3M825.5 779v3M836.5 779v3M847.5 779v3M858.5 779v3M880.5 779v3M891.5 779v3M902.5 779v3M913.5 779v3M924.5 779v3M935.5 779v3M946.5 779v3M957.5 779v3M968.5 779v3M990.5 779v3M1001.5 779v3M1012.5 779v3M1023.5 779v3M1034.5 779v3M1045.5 779v3M1056.5 779v3M1067.5 779v3M1078.5 779v3M1100.5 779v3M1111.5 779v3M1122.5 779v3M1133.5 779v3M1144.5 779v3M1155.5 779v3M1166.5 779v3M1177.5 779v3M1188.5 779v3M1210.5 779v3M1221.5 779v3M1232.5 779v3M1243.5 779v3M1254.5 779v3M1265.5 779v3M1276.5 779v3M1287.5 779v3M1298.5 779v3M1320.5 779v3M1331.5 779v3" stroke="#6c6f74" stroke-width="1" fill="none"/>
<path d="M97 228h3v3h-3zM207 228h3v3h-3zM317 228h3v3h-3zM427 228h3v3h-3zM537 228h3v3h-3zM648 228h3v3h-3zM758 228h3v3h-3zM868 228h3v3h-3zM978 228h3v3h-3zM1088 228h3v3h-3zM1198 228h3v3h-3zM1308 228h3v3h-3zM97 338h3v3h-3zM207 338h3v3h-3zM317 338h3v3h-3zM427 338h3v3h-3zM537 338h3v3h-3zM648 338h3v3h-3zM758 338h3v3h-3zM868 338h3v3h-3zM978 338h3v3h-3zM1088 338h3v3h-3zM1198 338h3v3h-3zM1308 338h3v3h-3zM97 448h3v3h-3zM207 448h3v3h-3zM317 448h3v3h-3zM427 448h3v3h-3zM537 448h3v3h-3zM648 448h3v3h-3zM758 448h3v3h-3zM868 448h3v3h-3zM978 448h3v3h-3zM1088 448h3v3h-3zM1198 448h3v3h-3zM1308 448h3v3h-3zM97 558h3v3h-3zM207 558h3v3h-3zM317 558h3v3h-3zM427 558h3v3h-3zM537 558h3v3h-3zM648 558h3v3h-3zM758 558h3v3h-3zM868 558h3v3h-3zM978 558h3v3h-3zM1088 558h3v3h-3zM1198 558h3v3h-3zM1308 558h3v3h-3zM97 669h3v3h-3zM207 669h3v3h-3zM317 669h3v3h-3zM427 669h3v3h-3zM537 669h3v3h-3zM648 669h3v3h-3zM758 669h3v3h-3zM868 669h3v3h-3zM978 669h3v3h-3zM1088 669h3v3h-3zM1198 669h3v3h-3zM1308 669h3v3h-3zM97 779h3v3h-3zM207 779h3v3h-3zM317 779h3v3h-3zM427 779h3v3h-3zM537 779h3v3h-3zM648 779h3v3h-3zM758 779h3v3h-3zM868 779h3v3h-3zM978 779h3v3h-3zM1088 779h3v3h-3zM1198 779h3v3h-3zM1308 779h3v3h-3z" fill="#9a9a97"/><g fill="none" stroke="#c83434">
<rect x="208.5" y="229.5" width="881.0" height="551.0" stroke-width="1.8"/>
<path d="M208.5 238.3l5.2 -3.6M1084.3 238.3l5.2 -3.6M208.5 243.8l5.2 -3.6M1084.3 243.8l5.2 -3.6M208.5 249.3l5.2 -3.6M1084.3 249.3l5.2 -3.6M208.5 254.8l5.2 -3.6M1084.3 254.8l5.2 -3.6M208.5 260.3l5.2 -3.6M1084.3 260.3l5.2 -3.6M208.5 265.8l5.2 -3.6M1084.3 265.8l5.2 -3.6M208.5 271.3l5.2 -3.6M1084.3 271.3l5.2 -3.6M208.5 276.8l5.2 -3.6M1084.3 276.8l5.2 -3.6M208.5 282.3l5.2 -3.6M1084.3 282.3l5.2 -3.6M208.5 287.8l5.2 -3.6M1084.3 287.8l5.2 -3.6M208.5 293.3l5.2 -3.6M1084.3 293.3l5.2 -3.6M208.5 298.8l5.2 -3.6M1084.3 298.8l5.2 -3.6M208.5 304.3l5.2 -3.6M1084.3 304.3l5.2 -3.6M208.5 309.8l5.2 -3.6M1084.3 309.8l5.2 -3.6M208.5 315.3l5.2 -3.6M1084.3 315.3l5.2 -3.6M208.5 320.8l5.2 -3.6M1084.3 320.8l5.2 -3.6M208.5 326.3l5.2 -3.6M1084.3 326.3l5.2 -3.6M208.5 331.8l5.2 -3.6M1084.3 331.8l5.2 -3.6M208.5 337.3l5.2 -3.6M1084.3 337.3l5.2 -3.6M208.5 342.8l5.2 -3.6M1084.3 342.8l5.2 -3.6M208.5 348.3l5.2 -3.6M1084.3 348.3l5.2 -3.6M208.5 353.8l5.2 -3.6M1084.3 353.8l5.2 -3.6M208.5 359.3l5.2 -3.6M1084.3 359.3l5.2 -3.6M208.5 364.8l5.2 -3.6M1084.3 364.8l5.2 -3.6M208.5 370.3l5.2 -3.6M1084.3 370.3l5.2 -3.6M208.5 375.8l5.2 -3.6M1084.3 375.8l5.2 -3.6M208.5 381.3l5.2 -3.6M1084.3 381.3l5.2 -3.6M208.5 386.8l5.2 -3.6M1084.3 386.8l5.2 -3.6M208.5 392.3l5.2 -3.6M1084.3 392.3l5.2 -3.6M208.5 397.8l5.2 -3.6M1084.3 397.8l5.2 -3.6M208.5 403.3l5.2 -3.6M1084.3 403.3l5.2 -3.6M208.5 408.8l5.2 -3.6M1084.3 408.8l5.2 -3.6M208.5 414.3l5.2 -3.6M1084.3 414.3l5.2 -3.6M208.5 419.8l5.2 -3.6M1084.3 419.8l5.2 -3.6M208.5 425.3l5.2 -3.6M1084.3 425.3l5.2 -3.6M208.5 430.8l5.2 -3.6M1084.3 430.8l5.2 -3.6M208.5 436.3l5.2 -3.6M1084.3 436.3l5.2 -3.6M208.5 441.8l5.2 -3.6M1084.3 441.8l5.2 -3.6M208.5 447.3l5.2 -3.6M1084.3 447.3l5.2 -3.6M208.5 452.8l5.2 -3.6M1084.3 452.8l5.2 -3.6M208.5 458.3l5.2 -3.6M1084.3 458.3l5.2 -3.6M208.5 463.8l5.2 -3.6M1084.3 463.8l5.2 -3.6M208.5 469.3l5.2 -3.6M1084.3 469.3l5.2 -3.6M208.5 474.8l5.2 -3.6M1084.3 474.8l5.2 -3.6M208.5 480.3l5.2 -3.6M1084.3 480.3l5.2 -3.6M208.5 485.8l5.2 -3.6M1084.3 485.8l5.2 -3.6M208.5 491.3l5.2 -3.6M1084.3 491.3l5.2 -3.6M208.5 496.8l5.2 -3.6M1084.3 496.8l5.2 -3.6M208.5 502.3l5.2 -3.6M1084.3 502.3l5.2 -3.6M208.5 507.8l5.2 -3.6M1084.3 507.8l5.2 -3.6M208.5 513.3l5.2 -3.6M1084.3 513.3l5.2 -3.6M208.5 518.8l5.2 -3.6M1084.3 518.8l5.2 -3.6M208.5 524.3l5.2 -3.6M1084.3 524.3l5.2 -3.6M208.5 529.8l5.2 -3.6M1084.3 529.8l5.2 -3.6M208.5 535.3l5.2 -3.6M1084.3 535.3l5.2 -3.6M208.5 540.8l5.2 -3.6M1084.3 540.8l5.2 -3.6M208.5 546.3l5.2 -3.6M1084.3 546.3l5.2 -3.6M208.5 551.8l5.2 -3.6M1084.3 551.8l5.2 -3.6M208.5 557.3l5.2 -3.6M1084.3 557.3l5.2 -3.6M208.5 562.8l5.2 -3.6M1084.3 562.8l5.2 -3.6M208.5 568.3l5.2 -3.6M1084.3 568.3l5.2 -3.6M208.5 573.8l5.2 -3.6M1084.3 573.8l5.2 -3.6M208.5 579.3l5.2 -3.6M1084.3 579.3l5.2 -3.6M208.5 584.8l5.2 -3.6M1084.3 584.8l5.2 -3.6M208.5 590.3l5.2 -3.6M1084.3 590.3l5.2 -3.6M208.5 595.8l5.2 -3.6M1084.3 595.8l5.2 -3.6M208.5 601.3l5.2 -3.6M1084.3 601.3l5.2 -3.6M208.5 606.8l5.2 -3.6M1084.3 606.8l5.2 -3.6M208.5 612.3l5.2 -3.6M1084.3 612.3l5.2 -3.6M208.5 617.8l5.2 -3.6M1084.3 617.8l5.2 -3.6M208.5 623.3l5.2 -3.6M1084.3 623.3l5.2 -3.6M208.5 628.8l5.2 -3.6M1084.3 628.8l5.2 -3.6M208.5 634.3l5.2 -3.6M1084.3 634.3l5.2 -3.6M208.5 639.8l5.2 -3.6M1084.3 639.8l5.2 -3.6M208.5 645.3l5.2 -3.6M1084.3 645.3l5.2 -3.6M208.5 650.8l5.2 -3.6M1084.3 650.8l5.2 -3.6M208.5 656.3l5.2 -3.6M1084.3 656.3l5.2 -3.6M208.5 661.8l5.2 -3.6M1084.3 661.8l5.2 -3.6M208.5 667.3l5.2 -3.6M1084.3 667.3l5.2 -3.6M208.5 672.8l5.2 -3.6M1084.3 672.8l5.2 -3.6M208.5 678.3l5.2 -3.6M1084.3 678.3l5.2 -3.6M208.5 683.8l5.2 -3.6M1084.3 683.8l5.2 -3.6M208.5 689.3l5.2 -3.6M1084.3 689.3l5.2 -3.6M208.5 694.8l5.2 -3.6M1084.3 694.8l5.2 -3.6M208.5 700.3l5.2 -3.6M1084.3 700.3l5.2 -3.6M208.5 705.8l5.2 -3.6M1084.3 705.8l5.2 -3.6M208.5 711.3l5.2 -3.6M1084.3 711.3l5.2 -3.6M208.5 716.8l5.2 -3.6M1084.3 716.8l5.2 -3.6M208.5 722.3l5.2 -3.6M1084.3 722.3l5.2 -3.6M208.5 727.8l5.2 -3.6M1084.3 727.8l5.2 -3.6M208.5 733.3l5.2 -3.6M1084.3 733.3l5.2 -3.6M208.5 738.8l5.2 -3.6M1084.3 738.8l5.2 -3.6M208.5 744.3l5.2 -3.6M1084.3 744.3l5.2 -3.6M208.5 749.8l5.2 -3.6M1084.3 749.8l5.2 -3.6M208.5 755.3l5.2 -3.6M1084.3 755.3l5.2 -3.6M208.5 760.8l5.2 -3.6M1084.3 760.8l5.2 -3.6M208.5 766.3l5.2 -3.6M1084.3 766.3l5.2 -3.6M208.5 771.8l5.2 -3.6M1084.3 771.8l5.2 -3.6M208.5 777.3l5.2 -3.6M1084.3 777.3l5.2 -3.6M216.25 233.1l5.2 -3.6M216.25 780.5l5.2 -3.6M224 233.1l5.2 -3.6M224 780.5l5.2 -3.6M231.75 233.1l5.2 -3.6M231.75 780.5l5.2 -3.6M239.5 233.1l5.2 -3.6M239.5 780.5l5.2 -3.6M247.25 233.1l5.2 -3.6M247.25 780.5l5.2 -3.6M255 233.1l5.2 -3.6M255 780.5l5.2 -3.6M262.75 233.1l5.2 -3.6M262.75 780.5l5.2 -3.6M270.5 233.1l5.2 -3.6M270.5 780.5l5.2 -3.6M278.25 233.1l5.2 -3.6M278.25 780.5l5.2 -3.6M286 233.1l5.2 -3.6M286 780.5l5.2 -3.6M293.75 233.1l5.2 -3.6M293.75 780.5l5.2 -3.6M301.5 233.1l5.2 -3.6M301.5 780.5l5.2 -3.6M309.25 233.1l5.2 -3.6M309.25 780.5l5.2 -3.6M317 233.1l5.2 -3.6M317 780.5l5.2 -3.6M324.75 233.1l5.2 -3.6M324.75 780.5l5.2 -3.6M332.5 233.1l5.2 -3.6M332.5 780.5l5.2 -3.6M340.25 233.1l5.2 -3.6M340.25 780.5l5.2 -3.6M348 233.1l5.2 -3.6M348 780.5l5.2 -3.6M355.75 233.1l5.2 -3.6M355.75 780.5l5.2 -3.6M363.5 233.1l5.2 -3.6M363.5 780.5l5.2 -3.6M371.25 233.1l5.2 -3.6M371.25 780.5l5.2 -3.6M379 233.1l5.2 -3.6M379 780.5l5.2 -3.6M386.75 233.1l5.2 -3.6M386.75 780.5l5.2 -3.6M394.5 233.1l5.2 -3.6M394.5 780.5l5.2 -3.6M402.25 233.1l5.2 -3.6M402.25 780.5l5.2 -3.6M410 233.1l5.2 -3.6M410 780.5l5.2 -3.6M417.75 233.1l5.2 -3.6M417.75 780.5l5.2 -3.6M425.5 233.1l5.2 -3.6M425.5 780.5l5.2 -3.6M433.25 233.1l5.2 -3.6M433.25 780.5l5.2 -3.6M441 233.1l5.2 -3.6M441 780.5l5.2 -3.6M448.75 233.1l5.2 -3.6M448.75 780.5l5.2 -3.6M456.5 233.1l5.2 -3.6M456.5 780.5l5.2 -3.6M464.25 233.1l5.2 -3.6M464.25 780.5l5.2 -3.6M472 233.1l5.2 -3.6M472 780.5l5.2 -3.6M479.75 233.1l5.2 -3.6M479.75 780.5l5.2 -3.6M487.5 233.1l5.2 -3.6M487.5 780.5l5.2 -3.6M495.25 233.1l5.2 -3.6M495.25 780.5l5.2 -3.6M503 233.1l5.2 -3.6M503 780.5l5.2 -3.6M510.75 233.1l5.2 -3.6M510.75 780.5l5.2 -3.6M518.5 233.1l5.2 -3.6M518.5 780.5l5.2 -3.6M526.25 233.1l5.2 -3.6M526.25 780.5l5.2 -3.6M534 233.1l5.2 -3.6M534 780.5l5.2 -3.6M541.75 233.1l5.2 -3.6M541.75 780.5l5.2 -3.6M549.5 233.1l5.2 -3.6M549.5 780.5l5.2 -3.6M557.25 233.1l5.2 -3.6M557.25 780.5l5.2 -3.6M565 233.1l5.2 -3.6M565 780.5l5.2 -3.6M572.75 233.1l5.2 -3.6M572.75 780.5l5.2 -3.6M580.5 233.1l5.2 -3.6M580.5 780.5l5.2 -3.6M588.25 233.1l5.2 -3.6M588.25 780.5l5.2 -3.6M596 233.1l5.2 -3.6M596 780.5l5.2 -3.6M603.75 233.1l5.2 -3.6M603.75 780.5l5.2 -3.6M611.5 233.1l5.2 -3.6M611.5 780.5l5.2 -3.6M619.25 233.1l5.2 -3.6M619.25 780.5l5.2 -3.6M627 233.1l5.2 -3.6M627 780.5l5.2 -3.6M634.75 233.1l5.2 -3.6M634.75 780.5l5.2 -3.6M642.5 233.1l5.2 -3.6M642.5 780.5l5.2 -3.6M650.25 233.1l5.2 -3.6M650.25 780.5l5.2 -3.6M658 233.1l5.2 -3.6M658 780.5l5.2 -3.6M665.75 233.1l5.2 -3.6M665.75 780.5l5.2 -3.6M673.5 233.1l5.2 -3.6M673.5 780.5l5.2 -3.6M681.25 233.1l5.2 -3.6M681.25 780.5l5.2 -3.6M689 233.1l5.2 -3.6M689 780.5l5.2 -3.6M696.75 233.1l5.2 -3.6M696.75 780.5l5.2 -3.6M704.5 233.1l5.2 -3.6M704.5 780.5l5.2 -3.6M712.25 233.1l5.2 -3.6M712.25 780.5l5.2 -3.6M720 233.1l5.2 -3.6M720 780.5l5.2 -3.6M727.75 233.1l5.2 -3.6M727.75 780.5l5.2 -3.6M735.5 233.1l5.2 -3.6M735.5 780.5l5.2 -3.6M743.25 233.1l5.2 -3.6M743.25 780.5l5.2 -3.6M751 233.1l5.2 -3.6M751 780.5l5.2 -3.6M758.75 233.1l5.2 -3.6M758.75 780.5l5.2 -3.6M766.5 233.1l5.2 -3.6M766.5 780.5l5.2 -3.6M774.25 233.1l5.2 -3.6M774.25 780.5l5.2 -3.6M782 233.1l5.2 -3.6M782 780.5l5.2 -3.6M789.75 233.1l5.2 -3.6M789.75 780.5l5.2 -3.6M797.5 233.1l5.2 -3.6M797.5 780.5l5.2 -3.6M805.25 233.1l5.2 -3.6M805.25 780.5l5.2 -3.6M813 233.1l5.2 -3.6M813 780.5l5.2 -3.6M820.75 233.1l5.2 -3.6M820.75 780.5l5.2 -3.6M828.5 233.1l5.2 -3.6M828.5 780.5l5.2 -3.6M836.25 233.1l5.2 -3.6M836.25 780.5l5.2 -3.6M844 233.1l5.2 -3.6M844 780.5l5.2 -3.6M851.75 233.1l5.2 -3.6M851.75 780.5l5.2 -3.6M859.5 233.1l5.2 -3.6M859.5 780.5l5.2 -3.6M867.25 233.1l5.2 -3.6M867.25 780.5l5.2 -3.6M875 233.1l5.2 -3.6M875 780.5l5.2 -3.6M882.75 233.1l5.2 -3.6M882.75 780.5l5.2 -3.6M890.5 233.1l5.2 -3.6M890.5 780.5l5.2 -3.6M898.25 233.1l5.2 -3.6M898.25 780.5l5.2 -3.6M906 233.1l5.2 -3.6M906 780.5l5.2 -3.6M913.75 233.1l5.2 -3.6M913.75 780.5l5.2 -3.6M921.5 233.1l5.2 -3.6M921.5 780.5l5.2 -3.6M929.25 233.1l5.2 -3.6M929.25 780.5l5.2 -3.6M937 233.1l5.2 -3.6M937 780.5l5.2 -3.6M944.75 233.1l5.2 -3.6M944.75 780.5l5.2 -3.6M952.5 233.1l5.2 -3.6M952.5 780.5l5.2 -3.6M960.25 233.1l5.2 -3.6M960.25 780.5l5.2 -3.6M968 233.1l5.2 -3.6M968 780.5l5.2 -3.6M975.75 233.1l5.2 -3.6M975.75 780.5l5.2 -3.6M983.5 233.1l5.2 -3.6M983.5 780.5l5.2 -3.6M991.25 233.1l5.2 -3.6M991.25 780.5l5.2 -3.6M999 233.1l5.2 -3.6M999 780.5l5.2 -3.6M1006.75 233.1l5.2 -3.6M1006.75 780.5l5.2 -3.6M1014.5 233.1l5.2 -3.6M1014.5 780.5l5.2 -3.6M1022.25 233.1l5.2 -3.6M1022.25 780.5l5.2 -3.6M1030 233.1l5.2 -3.6M1030 780.5l5.2 -3.6M1037.75 233.1l5.2 -3.6M1037.75 780.5l5.2 -3.6M1045.5 233.1l5.2 -3.6M1045.5 780.5l5.2 -3.6M1053.25 233.1l5.2 -3.6M1053.25 780.5l5.2 -3.6M1061 233.1l5.2 -3.6M1061 780.5l5.2 -3.6M1068.75 233.1l5.2 -3.6M1068.75 780.5l5.2 -3.6M1076.5 233.1l5.2 -3.6M1076.5 780.5l5.2 -3.6M1084.25 233.1l5.2 -3.6M1084.25 780.5l5.2 -3.6" stroke-width="1.1"/>
</g>
<path d="M208.5 273.55A44.05 44.05 0 0 1 252.55 229.5 M1045.45 229.5A44.05 44.05 0 0 1 1089.5 273.55 M1089.5 736.45A44.05 44.05 0 0 1 1045.45 780.5 M252.55 780.5A44.05 44.05 0 0 1 208.5 736.45" fill="none" stroke="#d8d8d8" stroke-width="1.2"/>
<g fill="none">
<path d="M386.6 318H971.3V735.4H386.6Z" stroke="#26e9ff" stroke-width="1.6"/>
<path d="M388.6 319.6H957.6L968.2 330.2V732.6H388.6Z" stroke="#5d6489" stroke-width="1.1"/>
<path d="M388.6 319.6H969.6V733.9H388.6Z" stroke="#e8b2a7" stroke-width="1.1"/>
<path d="M941 314.4H974.5V347.6" stroke="#e8b2a7" stroke-width="1.3"/>
</g>
<g font-family="Liberation Mono, monospace" stroke-width="0.5">
<text transform="translate(941.5 312.6) scale(-1 1)" text-anchor="middle" fill="#e8b2a7" stroke="#e8b2a7" font-size="18" textLength="27" lengthAdjust="spacingAndGlyphs">BT1</text>
<text transform="translate(679.4 531.2) scale(-1 1)" text-anchor="middle" fill="#5d6489" stroke="#5d6489" font-size="18" textLength="28.8" lengthAdjust="spacingAndGlyphs">BT1</text>
<text transform="translate(679.2 749.8) scale(-1 1)" text-anchor="middle" fill="#5d6489" stroke="#5d6489" font-size="18" textLength="56.5" lengthAdjust="spacingAndGlyphs">Battery</text>
</g>
<circle cx="263.4" cy="284.5" r="37.7" fill="none" stroke="#ff26e2" stroke-width="1.2"/>
<circle cx="263.4" cy="284.5" r="35.5" fill="none" stroke="#4f86d8" stroke-width="2"/>
<circle cx="263.4" cy="284.5" r="19.6" fill="#1cc2d0" stroke="#e2b533" stroke-width="1.3"/>
<circle cx="1034" cy="284.5" r="37.7" fill="none" stroke="#ff26e2" stroke-width="1.2"/>
<circle cx="1034" cy="284.5" r="35.5" fill="none" stroke="#4f86d8" stroke-width="2"/>
<circle cx="1034" cy="284.5" r="19.6" fill="#1cc2d0" stroke="#e2b533" stroke-width="1.3"/>
<circle cx="1034" cy="724.6" r="37.7" fill="none" stroke="#ff26e2" stroke-width="1.2"/>
<circle cx="1034" cy="724.6" r="35.5" fill="none" stroke="#4f86d8" stroke-width="2"/>
<circle cx="1034" cy="724.6" r="19.6" fill="#1cc2d0" stroke="#e2b533" stroke-width="1.3"/>
<circle cx="263.4" cy="724.6" r="37.7" fill="none" stroke="#ff26e2" stroke-width="1.2"/>
<circle cx="263.4" cy="724.6" r="35.5" fill="none" stroke="#4f86d8" stroke-width="2"/>
<circle cx="263.4" cy="724.6" r="19.6" fill="#1cc2d0" stroke="#e2b533" stroke-width="1.3"/>
<g font-family="Liberation Mono, monospace" stroke-width="0.5">
<text x="263.4" y="243.7" text-anchor="middle" fill="#f2eda1" stroke="#f2eda1" font-size="18" textLength="20" lengthAdjust="spacingAndGlyphs">H1</text>
<text x="264.2" y="336" text-anchor="middle" fill="#b4b4b4" stroke="#b4b4b4" font-size="18" textLength="108" lengthAdjust="spacingAndGlyphs">MountingHole</text>
<text x="1034" y="243.7" text-anchor="middle" fill="#f2eda1" stroke="#f2eda1" font-size="18" textLength="20" lengthAdjust="spacingAndGlyphs">H2</text>
<text x="1034.8" y="336" text-anchor="middle" fill="#b4b4b4" stroke="#b4b4b4" font-size="18" textLength="108" lengthAdjust="spacingAndGlyphs">MountingHole</text>
<text x="1034" y="683.8" text-anchor="middle" fill="#f2eda1" stroke="#f2eda1" font-size="18" textLength="20" lengthAdjust="spacingAndGlyphs">H3</text>
<text x="1034.8" y="776.1" text-anchor="middle" fill="#b4b4b4" stroke="#b4b4b4" font-size="18" textLength="108" lengthAdjust="spacingAndGlyphs">MountingHole</text>
<text x="263.4" y="683.8" text-anchor="middle" fill="#f2eda1" stroke="#f2eda1" font-size="18" textLength="20" lengthAdjust="spacingAndGlyphs">H4</text>
<text x="264.2" y="776.1" text-anchor="middle" fill="#b4b4b4" stroke="#b4b4b4" font-size="18" textLength="108" lengthAdjust="spacingAndGlyphs">MountingHole</text>
</g>
<path d="M285.6 352.7H1031L1045.2 366.9V486.4L1022 509.5M450.8 464.6V439.6L462.2 428.2H814L835.9 450.1V662.2L793.2 704.9H659L647.9 693.8H615.6M285.6 464.6V544.4M285.6 572.7H450.8M450.8 464.6V545.3M450.8 572.5V680.6M615.6 544.7H573.9L527.8 590.8V640.9L474.5 694.2H450.8M615.6 464.6V544.7M615.6 572.6V680.6M615.6 572.7H781M781 464.6V544.5M940 397V471.3L976.9 508.2V536.7L994.3 554.1H1022" fill="none" stroke="#c83434" stroke-width="2.4" stroke-linejoin="miter"/>
<g font-family="Liberation Mono, monospace" stroke-width="0.5">
<rect x="268.4" y="341.4" width="33.5" height="135" fill="none" stroke="#ff26e2" stroke-width="1.2"/>
<rect x="272.3" y="374.6" width="26.6" height="68.6" fill="none" stroke="#afafaf" stroke-width="1.1"/>
<rect x="270.7" y="373.4" width="29.8" height="72" fill="none" stroke="#f2eda1" stroke-width="1.6"/>
<path d="M285.6 362V373.4M285.6 445.4V455" stroke="#f2eda1" stroke-width="1.3"/>
<circle cx="285.6" cy="352.7" r="10.3" fill="none" stroke="#e2b533" stroke-width="1"/>
<circle cx="285.6" cy="352.7" r="9.2" fill="#e2b533"/>
<circle cx="285.6" cy="352.7" r="3.8" fill="#001023"/>
<circle cx="285.6" cy="464.6" r="10.3" fill="none" stroke="#e2b533" stroke-width="1"/>
<circle cx="285.6" cy="464.6" r="9.2" fill="#e2b533"/>
<circle cx="285.6" cy="464.6" r="3.8" fill="#001023"/>
<text transform="translate(259 409) rotate(-90)" y="6.3" text-anchor="middle" fill="#b4b4b4" stroke="#b4b4b4" font-size="18" textLength="30" lengthAdjust="spacingAndGlyphs">330</text>
<text transform="translate(285.6 408.7) rotate(-90)" y="6.3" text-anchor="middle" fill="#b4b4b4" stroke="#b4b4b4" font-size="18" textLength="18.5" lengthAdjust="spacingAndGlyphs">R4</text>
<text transform="translate(310.9 408.5) rotate(-90)" y="6.3" text-anchor="middle" fill="#f2eda1" stroke="#f2eda1" font-size="18" textLength="19" lengthAdjust="spacingAndGlyphs">R4</text>
<rect x="433.6" y="341.4" width="33.5" height="135" fill="none" stroke="#ff26e2" stroke-width="1.2"/>
<rect x="437.5" y="374.6" width="26.6" height="68.6" fill="none" stroke="#afafaf" stroke-width="1.1"/>
<rect x="435.9" y="373.4" width="29.8" height="72" fill="none" stroke="#f2eda1" stroke-width="1.6"/>
<path d="M450.8 362V373.4M450.8 445.4V455" stroke="#f2eda1" stroke-width="1.3"/>
<circle cx="450.8" cy="352.7" r="10.3" fill="none" stroke="#e2b533" stroke-width="1"/>
<circle cx="450.8" cy="352.7" r="9.2" fill="#e2b533"/>
<circle cx="450.8" cy="352.7" r="3.8" fill="#001023"/>
<circle cx="450.8" cy="464.6" r="10.3" fill="none" stroke="#e2b533" stroke-width="1"/>
<circle cx="450.8" cy="464.6" r="9.2" fill="#e2b533"/>
<circle cx="450.8" cy="464.6" r="3.8" fill="#001023"/>
<text transform="translate(424.2 409) rotate(-90)" y="6.3" text-anchor="middle" fill="#b4b4b4" stroke="#b4b4b4" font-size="18" textLength="30" lengthAdjust="spacingAndGlyphs">47k</text>
<text transform="translate(450.8 408.7) rotate(-90)" y="6.3" text-anchor="middle" fill="#b4b4b4" stroke="#b4b4b4" font-size="18" textLength="18.5" lengthAdjust="spacingAndGlyphs">R3</text>
<text transform="translate(476.1 408.5) rotate(-90)" y="6.3" text-anchor="middle" fill="#f2eda1" stroke="#f2eda1" font-size="18" textLength="19" lengthAdjust="spacingAndGlyphs">R3</text>
<rect x="598.7" y="341.4" width="33.5" height="135" fill="none" stroke="#ff26e2" stroke-width="1.2"/>
<rect x="602.6" y="374.6" width="26.6" height="68.6" fill="none" stroke="#afafaf" stroke-width="1.1"/>
<rect x="601" y="373.4" width="29.8" height="72" fill="none" stroke="#f2eda1" stroke-width="1.6"/>
<path d="M615.9 362V373.4M615.9 445.4V455" stroke="#f2eda1" stroke-width="1.3"/>
<circle cx="615.9" cy="352.7" r="10.3" fill="none" stroke="#e2b533" stroke-width="1"/>
<circle cx="615.9" cy="352.7" r="9.2" fill="#e2b533"/>
<circle cx="615.9" cy="352.7" r="3.8" fill="#001023"/>
<circle cx="615.9" cy="464.6" r="10.3" fill="none" stroke="#e2b533" stroke-width="1"/>
<circle cx="615.9" cy="464.6" r="9.2" fill="#e2b533"/>
<circle cx="615.9" cy="464.6" r="3.8" fill="#001023"/>
<text transform="translate(589.3 409) rotate(-90)" y="6.3" text-anchor="middle" fill="#b4b4b4" stroke="#b4b4b4" font-size="18" textLength="30" lengthAdjust="spacingAndGlyphs">47k</text>
<text transform="translate(615.9 408.7) rotate(-90)" y="6.3" text-anchor="middle" fill="#b4b4b4" stroke="#b4b4b4" font-size="18" textLength="18.5" lengthAdjust="spacingAndGlyphs">R2</text>
<text transform="translate(641.2 408.5) rotate(-90)" y="6.3" text-anchor="middle" fill="#f2eda1" stroke="#f2eda1" font-size="18" textLength="19" lengthAdjust="spacingAndGlyphs">R2</text>
<rect x="763.9" y="341.4" width="33.5" height="135" fill="none" stroke="#ff26e2" stroke-width="1.2"/>
<rect x="767.8" y="374.6" width="26.6" height="68.6" fill="none" stroke="#afafaf" stroke-width="1.1"/>
<rect x="766.2" y="373.4" width="29.8" height="72" fill="none" stroke="#f2eda1" stroke-width="1.6"/>
<path d="M781.1 362V373.4M781.1 445.4V455" stroke="#f2eda1" stroke-width="1.3"/>
<circle cx="781.1" cy="352.7" r="10.3" fill="none" stroke="#e2b533" stroke-width="1"/>
<circle cx="781.1" cy="352.7" r="9.2" fill="#e2b533"/>
<circle cx="781.1" cy="352.7" r="3.8" fill="#001023"/>
<circle cx="781.1" cy="464.6" r="10.3" fill="none" stroke="#e2b533" stroke-width="1"/>
<circle cx="781.1" cy="464.6" r="9.2" fill="#e2b533"/>
<circle cx="781.1" cy="464.6" r="3.8" fill="#001023"/>
<text transform="translate(754.5 409) rotate(-90)" y="6.3" text-anchor="middle" fill="#b4b4b4" stroke="#b4b4b4" font-size="18" textLength="30" lengthAdjust="spacingAndGlyphs">330</text>
<text transform="translate(781.1 408.7) rotate(-90)" y="6.3" text-anchor="middle" fill="#b4b4b4" stroke="#b4b4b4" font-size="18" textLength="18.5" lengthAdjust="spacingAndGlyphs">R1</text>
<text transform="translate(806.4 408.5) rotate(-90)" y="6.3" text-anchor="middle" fill="#f2eda1" stroke="#f2eda1" font-size="18" textLength="19" lengthAdjust="spacingAndGlyphs">R1</text>
</g>
<g font-family="Liberation Mono, monospace" stroke-width="0.5">
<rect x="249.3" y="523.6" width="72.3" height="70.8" fill="none" stroke="#ff26e2" stroke-width="1.2"/>
<path d="M267.7 586.4A33.1 33.1 0 1 1 302.9 586.4Z" fill="none" stroke="#f2eda1" stroke-width="1.4"/>
<path d="M268.7 584.9A31.4 31.4 0 1 1 301.9 584.9Z" fill="none" stroke="#afafaf" stroke-width="1"/>
<circle cx="285.3" cy="558.2" r="28.1" fill="none" stroke="#f2eda1" stroke-width="1.2"/>
<circle cx="285.3" cy="544.4" r="11.3" fill="none" stroke="#e2b533" stroke-width="1"/>
<circle cx="285.3" cy="544.4" r="10" fill="#e2b533"/>
<circle cx="285.3" cy="544.4" r="4.6" fill="#001023"/>
<rect x="273.3" y="560.3" width="24" height="24" rx="2" fill="none" stroke="#e2b533" stroke-width="1"/>
<rect x="275.05" y="562.05" width="20.5" height="20.5" fill="#e2b533"/>
<circle cx="285.3" cy="572.3" r="4.6" fill="#001023"/>
<text transform="translate(241.8 558.2) rotate(-90)" y="6.3" text-anchor="middle" fill="#f2eda1" stroke="#f2eda1" font-size="18" textLength="19.2" lengthAdjust="spacingAndGlyphs">D2</text>
<text transform="translate(328.9 558.2) rotate(-90)" y="6.3" text-anchor="middle" fill="#b4b4b4" stroke="#b4b4b4" font-size="18" textLength="27.2" lengthAdjust="spacingAndGlyphs">LED</text>
<rect x="744.9" y="523.6" width="72.3" height="70.8" fill="none" stroke="#ff26e2" stroke-width="1.2"/>
<path d="M763.3 586.4A33.1 33.1 0 1 1 798.5 586.4Z" fill="none" stroke="#f2eda1" stroke-width="1.4"/>
<path d="M764.3 584.9A31.4 31.4 0 1 1 797.5 584.9Z" fill="none" stroke="#afafaf" stroke-width="1"/>
<circle cx="780.9" cy="558.2" r="28.1" fill="none" stroke="#f2eda1" stroke-width="1.2"/>
<circle cx="780.9" cy="544.4" r="11.3" fill="none" stroke="#e2b533" stroke-width="1"/>
<circle cx="780.9" cy="544.4" r="10" fill="#e2b533"/>
<circle cx="780.9" cy="544.4" r="4.6" fill="#001023"/>
<rect x="768.9" y="560.3" width="24" height="24" rx="2" fill="none" stroke="#e2b533" stroke-width="1"/>
<rect x="770.65" y="562.05" width="20.5" height="20.5" fill="#e2b533"/>
<circle cx="780.9" cy="572.3" r="4.6" fill="#001023"/>
<text transform="translate(736.8 558.2) rotate(-90)" y="6.3" text-anchor="middle" fill="#f2eda1" stroke="#f2eda1" font-size="18" textLength="19.2" lengthAdjust="spacingAndGlyphs">D1</text>
<text transform="translate(824.5 558.2) rotate(-90)" y="6.3" text-anchor="middle" fill="#b4b4b4" stroke="#b4b4b4" font-size="18" textLength="27.2" lengthAdjust="spacingAndGlyphs">LED</text>
<text transform="translate(844.7 558) rotate(-90)" y="6.3" text-anchor="middle" fill="#b4b4b4" stroke="#b4b4b4" font-size="18" textLength="16.2" lengthAdjust="spacingAndGlyphs">D1</text>
</g>
<g font-family="Liberation Mono, monospace" stroke-width="0.5">
<path d="M415.2 559.8A35.6 35.6 0 0 1 486.2 559.8Z" fill="#f2eda1"/>
<path d="M415.7 559.8A35 35 0 0 0 485.7 559.8" fill="none" stroke="#e6e2c0" stroke-width="1.6"/>
<circle cx="450.7" cy="558.6" r="36.4" fill="none" stroke="#ff26e2" stroke-width="1.3"/>
<rect x="439.9" y="534" width="21.2" height="22" fill="#001023"/>
<circle cx="450.7" cy="545.2" r="10.6" fill="none" stroke="#e2b533" stroke-width="1"/>
<circle cx="450.7" cy="545.2" r="9.4" fill="#e2b533"/>
<circle cx="450.7" cy="545.2" r="4.2" fill="#001023"/>
<rect x="439.7" y="561.5" width="22" height="22" rx="2" fill="none" stroke="#e2b533" stroke-width="1"/>
<rect x="441.2" y="563" width="19" height="19" fill="#e2b533"/>
<circle cx="450.7" cy="572.5" r="4.2" fill="#001023"/>
<path d="M431.6 585.3h7.4M435.3 581.6v7.4M426.3 594.1h7.4M430 590.4v7.4" stroke="#e8e4b8" stroke-width="1.1"/>
<text transform="translate(401.4 558.6) rotate(-90)" y="6.3" text-anchor="middle" fill="#f2eda1" stroke="#f2eda1" font-size="18" textLength="20" lengthAdjust="spacingAndGlyphs">C2</text>
<text transform="translate(498.8 558.9) rotate(-90)" y="6.3" text-anchor="middle" fill="#b4b4b4" stroke="#b4b4b4" font-size="18" textLength="28.4" lengthAdjust="spacingAndGlyphs">10u</text>
<path d="M580.1 559.8A35.6 35.6 0 0 1 651.1 559.8Z" fill="#f2eda1"/>
<path d="M580.6 559.8A35 35 0 0 0 650.6 559.8" fill="none" stroke="#e6e2c0" stroke-width="1.6"/>
<circle cx="615.6" cy="558.6" r="36.4" fill="none" stroke="#ff26e2" stroke-width="1.3"/>
<rect x="604.8" y="534" width="21.2" height="22" fill="#001023"/>
<circle cx="615.6" cy="545.2" r="10.6" fill="none" stroke="#e2b533" stroke-width="1"/>
<circle cx="615.6" cy="545.2" r="9.4" fill="#e2b533"/>
<circle cx="615.6" cy="545.2" r="4.2" fill="#001023"/>
<rect x="604.6" y="561.5" width="22" height="22" rx="2" fill="none" stroke="#e2b533" stroke-width="1"/>
<rect x="606.1" y="563" width="19" height="19" fill="#e2b533"/>
<circle cx="615.6" cy="572.5" r="4.2" fill="#001023"/>
<path d="M596.5 585.3h7.4M600.2 581.6v7.4M591.2 594.1h7.4M594.9 590.4v7.4" stroke="#e8e4b8" stroke-width="1.1"/>
<text transform="translate(566.8 558.6) rotate(-90)" y="6.3" text-anchor="middle" fill="#f2eda1" stroke="#f2eda1" font-size="18" textLength="20" lengthAdjust="spacingAndGlyphs">C1</text>
<text transform="translate(664.3 558.9) rotate(-90)" y="6.3" text-anchor="middle" fill="#b4b4b4" stroke="#b4b4b4" font-size="18" textLength="28.4" lengthAdjust="spacingAndGlyphs">10u</text>
</g>
<g font-family="Liberation Mono, monospace" stroke-width="0.5">
<rect x="420.1" y="664.3" width="52.8" height="60.1" fill="none" stroke="#ff26e2" stroke-width="1.2"/>
<path d="M470.4 715A28.7 28.7 0 1 1 470.4 673Z" fill="none" stroke="#f2eda1" stroke-width="1.4"/>
<path d="M469.2 714A27.2 27.2 0 1 1 469.2 674" fill="none" stroke="#afafaf" stroke-width="0.9"/>
<ellipse cx="450.9" cy="680.6" rx="10.5" ry="6.9" fill="none" stroke="#e2b533" stroke-width="1"/>
<ellipse cx="450.9" cy="680.6" rx="9.3" ry="5.8" fill="#e2b533"/>
<ellipse cx="450.9" cy="693.9" rx="10.5" ry="6.9" fill="none" stroke="#e2b533" stroke-width="1"/>
<ellipse cx="450.9" cy="693.9" rx="9.3" ry="5.8" fill="#e2b533"/>
<rect x="440.4" y="701" width="21" height="15.5" rx="1.5" fill="none" stroke="#e2b533" stroke-width="1"/>
<rect x="441.6" y="702.3" width="18.6" height="12.6" fill="#e2b533"/>
<circle cx="450.9" cy="680.6" r="4" fill="#001023"/>
<circle cx="450.9" cy="693.9" r="4" fill="#001023"/>
<circle cx="450.9" cy="708.3" r="4" fill="#001023"/>
<text transform="translate(410.8 694.3) rotate(-90)" y="6.3" text-anchor="middle" fill="#f2eda1" stroke="#f2eda1" font-size="18" textLength="19" lengthAdjust="spacingAndGlyphs">Q2</text>
<text transform="translate(480.7 694.6) rotate(-90)" y="6.3" text-anchor="middle" fill="#b4b4b4" stroke="#b4b4b4" font-size="18" textLength="61.8" lengthAdjust="spacingAndGlyphs">2N3904</text>
<rect x="584.4" y="664.3" width="52.8" height="60.1" fill="none" stroke="#ff26e2" stroke-width="1.2"/>
<path d="M634.7 715A28.7 28.7 0 1 1 634.7 673Z" fill="none" stroke="#f2eda1" stroke-width="1.4"/>
<path d="M633.5 714A27.2 27.2 0 1 1 633.5 674" fill="none" stroke="#afafaf" stroke-width="0.9"/>
<ellipse cx="615.2" cy="680.6" rx="10.5" ry="6.9" fill="none" stroke="#e2b533" stroke-width="1"/>
<ellipse cx="615.2" cy="680.6" rx="9.3" ry="5.8" fill="#e2b533"/>
<ellipse cx="615.2" cy="693.9" rx="10.5" ry="6.9" fill="none" stroke="#e2b533" stroke-width="1"/>
<ellipse cx="615.2" cy="693.9" rx="9.3" ry="5.8" fill="#e2b533"/>
<rect x="604.7" y="701" width="21" height="15.5" rx="1.5" fill="none" stroke="#e2b533" stroke-width="1"/>
<rect x="605.9" y="702.3" width="18.6" height="12.6" fill="#e2b533"/>
<circle cx="615.2" cy="680.6" r="4" fill="#001023"/>
<circle cx="615.2" cy="693.9" r="4" fill="#001023"/>
<circle cx="615.2" cy="708.3" r="4" fill="#001023"/>
<text transform="translate(575.7 694.3) rotate(-90)" y="6.3" text-anchor="middle" fill="#f2eda1" stroke="#f2eda1" font-size="18" textLength="19" lengthAdjust="spacingAndGlyphs">Q1</text>
<text transform="translate(645.6 694.6) rotate(-90)" y="6.3" text-anchor="middle" fill="#b4b4b4" stroke="#b4b4b4" font-size="18" textLength="61.8" lengthAdjust="spacingAndGlyphs">2N3904</text>
</g>
<circle cx="679" cy="396.9" r="21.9" fill="none" stroke="#e2b533" stroke-width="1.3"/>
<circle cx="679" cy="396.9" r="19.1" fill="#1cc2d0"/>
<circle cx="678.7" cy="655.9" r="21.9" fill="none" stroke="#e2b533" stroke-width="1.3"/>
<circle cx="678.7" cy="655.9" r="19.1" fill="#1cc2d0"/>
<rect x="921.3" y="378.5" width="38.4" height="37" rx="2" fill="none" stroke="#e2b533" stroke-width="1.2"/>
<rect x="923.3" y="380.3" width="34.4" height="33.4" fill="#e2b533"/>
<circle cx="940.4" cy="397.2" r="5.8" fill="#001023"/>
<circle cx="939.9" cy="536.7" r="18.3" fill="none" stroke="#e2b533" stroke-width="1.2"/>
<circle cx="939.9" cy="536.7" r="16.8" fill="#e2b533"/>
<circle cx="939.9" cy="536.7" r="5.5" fill="#001023"/>
<g font-family="Liberation Sans, sans-serif" fill="#f4eccb">
<text x="940" y="394" text-anchor="middle" font-size="12">1</text>
<text x="940" y="548" text-anchor="middle" font-size="8">GND</text>
<text x="940" y="537" text-anchor="middle" font-size="13">2</text>
</g>
<path d="M989.2 430.4H1082.2V458.4H1173.6V562.1H1082.2V589.9H989.2Z" fill="none" stroke="#ff26e2" stroke-width="1.2"/>
<path d="M1072.3 504.2H1170.6V559.6H1072.3" fill="none" stroke="#afafaf" stroke-width="1.1"/>
<rect x="999.7" y="433.7" width="72.5" height="153.3" fill="none" stroke="#f2eda1" stroke-width="1.5"/>
<path d="M989.5 575V589.5H1000" fill="none" stroke="#f2eda1" stroke-width="1.3"/>
<circle cx="1003" cy="443.3" r="12.8" fill="none" stroke="#e2b533" stroke-width="1"/>
<circle cx="1003" cy="443.3" r="11.4" fill="#e2b533"/>
<circle cx="1003" cy="443.3" r="7.2" fill="#001023"/>
<circle cx="1068.6" cy="443.3" r="12.8" fill="none" stroke="#e2b533" stroke-width="1"/>
<circle cx="1068.6" cy="443.3" r="11.4" fill="#e2b533"/>
<circle cx="1068.6" cy="443.3" r="7.2" fill="#001023"/>
<circle cx="1003" cy="575.7" r="12.8" fill="none" stroke="#e2b533" stroke-width="1"/>
<circle cx="1003" cy="575.7" r="11.4" fill="#e2b533"/>
<circle cx="1003" cy="575.7" r="7.2" fill="#001023"/>
<circle cx="1068.6" cy="575.7" r="12.8" fill="none" stroke="#e2b533" stroke-width="1"/>
<circle cx="1068.6" cy="575.7" r="11.4" fill="#e2b533"/>
<circle cx="1068.6" cy="575.7" r="7.2" fill="#001023"/>
<circle cx="1022" cy="465.6" r="11.1" fill="none" stroke="#e2b533" stroke-width="1"/>
<circle cx="1022" cy="465.6" r="9.8" fill="#e2b533"/>
<circle cx="1022" cy="465.6" r="4.5" fill="#001023"/>
<circle cx="1022" cy="509.2" r="11.1" fill="none" stroke="#e2b533" stroke-width="1"/>
<circle cx="1022" cy="509.2" r="9.8" fill="#e2b533"/>
<circle cx="1022" cy="509.2" r="4.5" fill="#001023"/>
<circle cx="1022" cy="553.8" r="11.1" fill="none" stroke="#e2b533" stroke-width="1"/>
<circle cx="1022" cy="553.8" r="9.8" fill="#e2b533"/>
<circle cx="1022" cy="553.8" r="4.5" fill="#001023"/>
<g font-family="Liberation Mono, monospace" stroke-width="0.5">
<text transform="translate(989.7 510.6) rotate(-90)" y="6.3" text-anchor="middle" fill="#f2eda1" stroke="#f2eda1" font-size="18" textLength="31.3" lengthAdjust="spacingAndGlyphs">SW1</text>
<text transform="translate(1035.2 510.2) scale(-1 1) rotate(-90)" y="6.3" text-anchor="middle" fill="#b4b4b4" stroke="#b4b4b4" font-size="18" textLength="30.4" lengthAdjust="spacingAndGlyphs">SW1</text>
<text transform="translate(1181.6 509.7) rotate(-90)" y="6.3" text-anchor="middle" fill="#b4b4b4" stroke="#b4b4b4" font-size="18" textLength="71.4" lengthAdjust="spacingAndGlyphs">SW_SPDT</text>
</g>
<path d="M450.9 708.4H615.2M615.2 708.3L939.9 536.7" stroke="#1aa6b7" stroke-width="1" fill="none"/>
<path d="M976.1 399.7H1003.8M989.8 386V414.1" stroke="#f0bcae" stroke-width="1.6"/>
<path d="M1296 578.6H1335" stroke="#f0f0f0" stroke-width="1.6"/></svg>
<div id="rtb" class="a"></div>
<div id="app" class="a"></div>

<div id="msg" class="a"></div>
<div id="status" class="a"></div>
<div class="a" style="left:1375px;top:143px;width:184px;height:16.5px;background:#bcbcbc;"></div>
<div class="a" style="left:1378.5px;top:144.18px;font-size:14.2px;line-height:1;color:#2e2e2e;white-space:nowrap;">Appearance</div>
<div class="a" style="left:1375px;top:159.5px;width:184px;height:5.5px;background:#e2e2e2;"></div>
<div class="a" style="left:1376px;top:165px;width:24px;height:38px;background:#f8f8f8;"></div>
<div class="a" style="left:1400px;top:165px;width:157px;height:38px;background:#ebebeb;"></div>
<svg class="a" style="left:1384px;top:177px" width="10" height="14"><path d="M8 1v12L1 7z" fill="#cbc6c1"/></svg>
<svg class="a" style="left:1541px;top:177px" width="10" height="14"><path d="M2 1v12l7-6z" fill="#8b8e8f"/></svg>
<div class="a" style="left:1470px;top:177.51px;font-size:17px;line-height:1;color:#8b8e8f;white-space:nowrap;">Layers</div>
<div class="a" style="left:1400px;top:199px;width:134px;height:4px;background:#3584e4;"></div>
<div class="a" style="left:1376px;top:203px;width:181px;height:1px;background:#d6d6d6;"></div>
<div class="a" style="left:1376px;top:204px;width:181px;height:316.5px;background:#f2f2f2;overflow:hidden">
<div class="a" style="left:0;top:0;width:181px;height:21.6px;background:#fff"></div>
<svg class="a" style="left:8px;top:4px" width="8" height="14"><path d="M0 0v13l7-6.5z" fill="#3c3cff"/></svg>
<div class="a" style="left:21px;top:3px;width:20px;height:17px;background:#c83434"></div>
<svg class="a" style="left:47px;top:3.5px" width="16" height="16" viewBox="0 0 16 16"><circle cx="8" cy="8" r="8" fill="#4a4a4a"/><path d="M1.8 8Q8 1.8 14.2 8Q8 14.2 1.8 8z" fill="#fff"/><circle cx="8" cy="8" r="2.6" fill="#4a4a4a"/><circle cx="8" cy="8" r="1.1" fill="#fff"/></svg>
<div class="a" style="left:68.5px;top:4.13275px;font-size:16.5px;line-height:1;color:#8b8e8f;white-space:nowrap">F.Cu</div>
<div class="a" style="left:21px;top:26px;width:20px;height:17px;background:#4d7fc4"></div>
<svg class="a" style="left:47px;top:26.5px" width="16" height="16" viewBox="0 0 16 16"><circle cx="8" cy="8" r="8" fill="#4a4a4a"/><path d="M1.8 8Q8 1.8 14.2 8Q8 14.2 1.8 8z" fill="#fff"/><circle cx="8" cy="8" r="2.6" fill="#4a4a4a"/><circle cx="8" cy="8" r="1.1" fill="#fff"/></svg>
<div class="a" style="left:68.5px;top:27.1327px;font-size:16.5px;line-height:1;color:#8b8e8f;white-space:nowrap">B.Cu</div>
<div class="a" style="left:21px;top:49px;width:20px;height:17px;background:#840084"></div>
<svg class="a" style="left:47px;top:49.5px" width="16" height="16" viewBox="0 0 16 16"><circle cx="8" cy="8" r="8" fill="#4a4a4a"/><path d="M1.8 8Q8 1.8 14.2 8Q8 14.2 1.8 8z" fill="#fff"/><circle cx="8" cy="8" r="2.6" fill="#4a4a4a"/><circle cx="8" cy="8" r="1.1" fill="#fff"/></svg>
<div class="a" style="left:68.5px;top:50.1328px;font-size:16.5px;line-height:1;color:#8b8e8f;white-space:nowrap">F.Adhesive</div>
<div class="a" style="left:21px;top:72px;width:20px;height:17px;background:#000084"></div>
<svg class="a" style="left:47px;top:72.5px" width="16" height="16" viewBox="0 0 16 16"><circle cx="8" cy="8" r="8" fill="#4a4a4a"/><path d="M1.8 8Q8 1.8 14.2 8Q8 14.2 1.8 8z" fill="#fff"/><circle cx="8" cy="8" r="2.6" fill="#4a4a4a"/><circle cx="8" cy="8" r="1.1" fill="#fff"/></svg>
<div class="a" style="left:68.5px;top:73.1328px;font-size:16.5px;line-height:1;color:#8b8e8f;white-space:nowrap">B.Adhesive</div>
<div class="a" style="left:21px;top:95px;width:20px;height:17px;background:#a69b96"></div>
<svg class="a" style="left:47px;top:95.5px" width="16" height="16" viewBox="0 0 16 16"><circle cx="8" cy="8" r="8" fill="#4a4a4a"/><path d="M1.8 8Q8 1.8 14.2 8Q8 14.2 1.8 8z" fill="#fff"/><circle cx="8" cy="8" r="2.6" fill="#4a4a4a"/><circle cx="8" cy="8" r="1.1" fill="#fff"/></svg>
<div class="a" style="left:68.5px;top:96.1328px;font-size:16.5px;line-height:1;color:#8b8e8f;white-space:nowrap">F.Paste</div>
<div class="a" style="left:21px;top:118px;width:20px;height:17px;background:#00c2c2"></div>
<svg class="a" style="left:47px;top:118.5px" width="16" height="16" viewBox="0 0 16 16"><circle cx="8" cy="8" r="8" fill="#4a4a4a"/><path d="M1.8 8Q8 1.8 14.2 8Q8 14.2 1.8 8z" fill="#fff"/><circle cx="8" cy="8" r="2.6" fill="#4a4a4a"/><circle cx="8" cy="8" r="1.1" fill="#fff"/></svg>
<div class="a" style="left:68.5px;top:119.133px;font-size:16.5px;line-height:1;color:#8b8e8f;white-space:nowrap">B.Paste</div>
<div class="a" style="left:21px;top:141px;width:20px;height:17px;background:#f2eda1"></div>
<svg class="a" style="left:47px;top:141.5px" width="16" height="16" viewBox="0 0 16 16"><circle cx="8" cy="8" r="8" fill="#4a4a4a"/><path d="M1.8 8Q8 1.8 14.2 8Q8 14.2 1.8 8z" fill="#fff"/><circle cx="8" cy="8" r="2.6" fill="#4a4a4a"/><circle cx="8" cy="8" r="1.1" fill="#fff"/></svg>
<div class="a" style="left:68.5px;top:142.133px;font-size:16.5px;line-height:1;color:#8b8e8f;white-space:nowrap">F.Silkscreen</div>
<div class="a" style="left:21px;top:164px;width:20px;height:17px;background:#e8b2a7"></div>
<svg class="a" style="left:47px;top:164.5px" width="16" height="16" viewBox="0 0 16 16"><circle cx="8" cy="8" r="8" fill="#4a4a4a"/><path d="M1.8 8Q8 1.8 14.2 8Q8 14.2 1.8 8z" fill="#fff"/><circle cx="8" cy="8" r="2.6" fill="#4a4a4a"/><circle cx="8" cy="8" r="1.1" fill="#fff"/></svg>
<div class="a" style="left:68.5px;top:165.133px;font-size:16.5px;line-height:1;color:#8b8e8f;white-space:nowrap">B.Silkscreen</div>
<svg class="a" style="left:21px;top:187px" width="20" height="17"><rect width="20" height="17" fill="#6e3c7c"/><path d="M8 0h8v8.5H8zM0 8.5h8V17H0zM16 8.5h4V17h-4z" fill="#52225e"/></svg>
<svg class="a" style="left:47px;top:187.5px" width="16" height="16" viewBox="0 0 16 16"><circle cx="8" cy="8" r="8" fill="#4a4a4a"/><path d="M1.8 8Q8 1.8 14.2 8Q8 14.2 1.8 8z" fill="#fff"/><circle cx="8" cy="8" r="2.6" fill="#4a4a4a"/><circle cx="8" cy="8" r="1.1" fill="#fff"/></svg>
<div class="a" style="left:68.5px;top:188.133px;font-size:16.5px;line-height:1;color:#8b8e8f;white-space:nowrap">F.Mask</div>
<svg class="a" style="left:21px;top:210px" width="20" height="17"><rect width="20" height="17" fill="#1a7a72"/><path d="M8 0h8v8.5H8zM0 8.5h8V17H0zM16 8.5h4V17h-4z" fill="#036860"/></svg>
<svg class="a" style="left:47px;top:210.5px" width="16" height="16" viewBox="0 0 16 16"><circle cx="8" cy="8" r="8" fill="#4a4a4a"/><path d="M1.8 8Q8 1.8 14.2 8Q8 14.2 1.8 8z" fill="#fff"/><circle cx="8" cy="8" r="2.6" fill="#4a4a4a"/><circle cx="8" cy="8" r="1.1" fill="#fff"/></svg>
<div class="a" style="left:68.5px;top:211.133px;font-size:16.5px;line-height:1;color:#8b8e8f;white-space:nowrap">B.Mask</div>
<div class="a" style="left:21px;top:233px;width:20px;height:17px;background:#c2c2c2"></div>
<svg class="a" style="left:47px;top:233.5px" width="16" height="16" viewBox="0 0 16 16"><circle cx="8" cy="8" r="8" fill="#4a4a4a"/><path d="M1.8 8Q8 1.8 14.2 8Q8 14.2 1.8 8z" fill="#fff"/><circle cx="8" cy="8" r="2.6" fill="#4a4a4a"/><circle cx="8" cy="8" r="1.1" fill="#fff"/></svg>
<div class="a" style="left:68.5px;top:234.133px;font-size:16.5px;line-height:1;color:#8b8e8f;white-space:nowrap">User.Drawings</div>
<div class="a" style="left:21px;top:256px;width:20px;height:17px;background:#5990d9"></div>
<svg class="a" style="left:47px;top:256.5px" width="16" height="16" viewBox="0 0 16 16"><circle cx="8" cy="8" r="8" fill="#4a4a4a"/><path d="M1.8 8Q8 1.8 14.2 8Q8 14.2 1.8 8z" fill="#fff"/><circle cx="8" cy="8" r="2.6" fill="#4a4a4a"/><circle cx="8" cy="8" r="1.1" fill="#fff"/></svg>
<div class="a" style="left:68.5px;top:257.133px;font-size:16.5px;line-height:1;color:#8b8e8f;white-space:nowrap">User.Comments</div>
<div class="a" style="left:21px;top:279px;width:20px;height:17px;background:#b3dcd0"></div>
<svg class="a" style="left:47px;top:279.5px" width="16" height="16" viewBox="0 0 16 16"><circle cx="8" cy="8" r="8" fill="#4a4a4a"/><path d="M1.8 8Q8 1.8 14.2 8Q8 14.2 1.8 8z" fill="#fff"/><circle cx="8" cy="8" r="2.6" fill="#4a4a4a"/><circle cx="8" cy="8" r="1.1" fill="#fff"/></svg>
<div class="a" style="left:68.5px;top:280.133px;font-size:16.5px;line-height:1;color:#8b8e8f;white-space:nowrap">User.Eco1</div>
<div class="a" style="left:21px;top:302px;width:20px;height:17px;background:#d9c24f"></div>
<svg class="a" style="left:47px;top:302.5px" width="16" height="16" viewBox="0 0 16 16"><circle cx="8" cy="8" r="8" fill="#4a4a4a"/><path d="M1.8 8Q8 1.8 14.2 8Q8 14.2 1.8 8z" fill="#fff"/><circle cx="8" cy="8" r="2.6" fill="#4a4a4a"/><circle cx="8" cy="8" r="1.1" fill="#fff"/></svg>
<div class="a" style="left:68.5px;top:303.133px;font-size:16.5px;line-height:1;color:#8b8e8f;white-space:nowrap">User.Eco2</div>
<div class="a" style="left:178px;top:2px;width:3px;height:124px;background:#a9a9a9;border-radius:2px"></div>
</div>
<div class="a" style="left:1376px;top:520.5px;width:181px;height:29.5px;background:#fcfcfc;"></div>
<svg class="a" style="left:1390px;top:530px" width="8" height="14"><path d="M1 1v12l6-6z" fill="#555"/></svg>
<div class="a" style="left:1401.6px;top:527.61px;width:155px;overflow:hidden;font-size:17px;line-height:1;color:#8b8e8f;white-space:nowrap">Layer Display Options</div>
<div class="a" style="left:1382.7px;top:561.833px;font-size:16.5px;line-height:1;color:#8b8e8f;white-space:nowrap;">Presets (Ctrl+Tab):</div>
<div class="a" style="left:1383px;top:582.3px;width:168px;height:34.4px;background:#f6f5f4;border:1px solid #d3cec9;border-radius:6px"></div>
<div class="a" style="left:1394.5px;top:593.01px;font-size:17px;line-height:1;color:#8b8e8f;white-space:nowrap;">All Layers</div>
<svg class="a" style="left:1528px;top:597px" width="13" height="8"><path d="M0.5 0.5h12l-6 6.5z" fill="#8b8e8f"/></svg>
<div class="a" style="left:1382.7px;top:625.533px;font-size:16.5px;line-height:1;color:#8b8e8f;white-space:nowrap;">Viewports (Shift+Tab):</div>
<div class="a" style="left:1383px;top:646px;width:168px;height:35px;background:#f6f5f4;border:1px solid #d3cec9;border-radius:6px"></div>
<div class="a" style="left:1394.5px;top:657.01px;font-size:17px;line-height:1;color:#8b8e8f;white-space:nowrap;letter-spacing:2.5px">---</div>
<svg class="a" style="left:1528px;top:661px" width="13" height="8"><path d="M0.5 0.5h12l-6 6.5z" fill="#8b8e8f"/></svg>
<div class="a" style="left:1375.3px;top:695.8px;width:183.5px;height:17px;background:#b9b9b9;"></div>
<div class="a" style="left:1378.4px;top:696.48px;font-size:14.2px;line-height:1;color:#2e2e2e;white-space:nowrap;">Selection Filter</div>
<div class="a" style="left:1375px;top:713px;width:183.5px;height:159px;overflow:hidden">
<svg class="a" style="left:9.1px;top:9.2px" width="16" height="16" viewBox="0 0 16 16"><rect width="16" height="16" rx="3" fill="#3584e4"/><path d="M3.5 8.2l3 3 6-6.2" stroke="#fff" stroke-width="2.2" fill="none"/></svg>
<div class="a" style="left:29.4px;top:9.53275px;font-size:16.5px;line-height:1;color:#8b8e8f;white-space:nowrap">All items</div>
<div class="a" style="left:134.2px;top:9.2px;width:16px;height:16px;background:#fff;border:1px solid #cdc7c2;border-radius:3px"></div>
<div class="a" style="left:154.3px;top:9.53275px;font-size:16.5px;line-height:1;color:#8b8e8f;white-space:nowrap">Locked items</div>
<svg class="a" style="left:9.1px;top:34.2px" width="16" height="16" viewBox="0 0 16 16"><rect width="16" height="16" rx="3" fill="#3584e4"/><path d="M3.5 8.2l3 3 6-6.2" stroke="#fff" stroke-width="2.2" fill="none"/></svg>
<div class="a" style="left:29.4px;top:34.5328px;font-size:16.5px;line-height:1;color:#8b8e8f;white-space:nowrap">Footprints</div>
<svg class="a" style="left:134.2px;top:34.2px" width="16" height="16" viewBox="0 0 16 16"><rect width="16" height="16" rx="3" fill="#3584e4"/><path d="M3.5 8.2l3 3 6-6.2" stroke="#fff" stroke-width="2.2" fill="none"/></svg>
<div class="a" style="left:154.3px;top:34.5328px;font-size:16.5px;line-height:1;color:#8b8e8f;white-space:nowrap">Text</div>
<svg class="a" style="left:9.1px;top:59.2px" width="16" height="16" viewBox="0 0 16 16"><rect width="16" height="16" rx="3" fill="#3584e4"/><path d="M3.5 8.2l3 3 6-6.2" stroke="#fff" stroke-width="2.2" fill="none"/></svg>
<div class="a" style="left:29.4px;top:59.5328px;font-size:16.5px;line-height:1;color:#8b8e8f;white-space:nowrap">Tracks</div>
<svg class="a" style="left:134.2px;top:59.2px" width="16" height="16" viewBox="0 0 16 16"><rect width="16" height="16" rx="3" fill="#3584e4"/><path d="M3.5 8.2l3 3 6-6.2" stroke="#fff" stroke-width="2.2" fill="none"/></svg>
<div class="a" style="left:154.3px;top:59.5328px;font-size:16.5px;line-height:1;color:#8b8e8f;white-space:nowrap">Vias</div>
<svg class="a" style="left:9.1px;top:84.2px" width="16" height="16" viewBox="0 0 16 16"><rect width="16" height="16" rx="3" fill="#3584e4"/><path d="M3.5 8.2l3 3 6-6.2" stroke="#fff" stroke-width="2.2" fill="none"/></svg>
<div class="a" style="left:29.4px;top:84.5327px;font-size:16.5px;line-height:1;color:#8b8e8f;white-space:nowrap">Pads</div>
<svg class="a" style="left:134.2px;top:84.2px" width="16" height="16" viewBox="0 0 16 16"><rect width="16" height="16" rx="3" fill="#3584e4"/><path d="M3.5 8.2l3 3 6-6.2" stroke="#fff" stroke-width="2.2" fill="none"/></svg>
<div class="a" style="left:154.3px;top:84.5327px;font-size:16.5px;line-height:1;color:#8b8e8f;white-space:nowrap">Graphics</div>
<svg class="a" style="left:9.1px;top:109.2px" width="16" height="16" viewBox="0 0 16 16"><rect width="16" height="16" rx="3" fill="#3584e4"/><path d="M3.5 8.2l3 3 6-6.2" stroke="#fff" stroke-width="2.2" fill="none"/></svg>
<div class="a" style="left:29.4px;top:109.533px;font-size:16.5px;line-height:1;color:#8b8e8f;white-space:nowrap">Zones</div>
<svg class="a" style="left:134.2px;top:109.2px" width="16" height="16" viewBox="0 0 16 16"><rect width="16" height="16" rx="3" fill="#3584e4"/><path d="M3.5 8.2l3 3 6-6.2" stroke="#fff" stroke-width="2.2" fill="none"/></svg>
<div class="a" style="left:154.3px;top:109.533px;font-size:16.5px;line-height:1;color:#8b8e8f;white-space:nowrap">Rule Areas</div>
<svg class="a" style="left:9.1px;top:134.2px" width="16" height="16" viewBox="0 0 16 16"><rect width="16" height="16" rx="3" fill="#3584e4"/><path d="M3.5 8.2l3 3 6-6.2" stroke="#fff" stroke-width="2.2" fill="none"/></svg>
<div class="a" style="left:29.4px;top:134.533px;font-size:16.5px;line-height:1;color:#8b8e8f;white-space:nowrap">Dimensions</div>
<svg class="a" style="left:134.2px;top:134.2px" width="16" height="16" viewBox="0 0 16 16"><rect width="16" height="16" rx="3" fill="#3584e4"/><path d="M3.5 8.2l3 3 6-6.2" stroke="#fff" stroke-width="2.2" fill="none"/></svg>
<div class="a" style="left:154.3px;top:134.533px;font-size:16.5px;line-height:1;color:#8b8e8f;white-space:nowrap">Other items</div>
</div>
<div class="a" style="left:1558.5px;top:143px;width:1.5px;height:729px;background:#f4f4f4;"></div>
<div class="a" style="left:18.7px;top:877.786px;font-size:17.5px;line-height:1;color:#8b8e8f;white-space:nowrap;">Pads</div>
<div class="a" style="left:18.7px;top:900.886px;font-size:17.5px;line-height:1;color:#8b8e8f;white-space:nowrap;">37</div>
<div class="a" style="left:99.6px;top:877.786px;font-size:17.5px;line-height:1;color:#8b8e8f;white-space:nowrap;">Vias</div>
<div class="a" style="left:99.6px;top:900.886px;font-size:17.5px;line-height:1;color:#8b8e8f;white-space:nowrap;">0</div>
<div class="a" style="left:175.2px;top:877.786px;font-size:17.5px;line-height:1;color:#8b8e8f;white-space:nowrap;">Track Segments</div>
<div class="a" style="left:175.2px;top:900.886px;font-size:17.5px;line-height:1;color:#8b8e8f;white-space:nowrap;">38</div>
<div class="a" style="left:347px;top:877.786px;font-size:17.5px;line-height:1;color:#8b8e8f;white-space:nowrap;">Nets</div>
<div class="a" style="left:347px;top:900.886px;font-size:17.5px;line-height:1;color:#8b8e8f;white-space:nowrap;">10</div>
<div class="a" style="left:429.2px;top:877.786px;font-size:17.5px;line-height:1;color:#8b8e8f;white-space:nowrap;">Unrouted</div>
<div class="a" style="left:429.2px;top:900.886px;font-size:17.5px;line-height:1;color:#8b8e8f;white-space:nowrap;">0</div>
<div class="a" style="left:8.5px;top:927.786px;font-size:17.5px;line-height:1;color:#8b8e8f;white-space:nowrap;">Z 3.07</div>
<div class="a" style="left:120.2px;top:927.786px;font-size:17.5px;line-height:1;color:#8b8e8f;white-space:nowrap;">X 252.5000</div>
<div class="a" style="left:222.1px;top:927.786px;font-size:17.5px;line-height:1;color:#8b8e8f;white-space:nowrap;">Y 81.7000</div>
<div class="a" style="left:356.4px;top:927.786px;font-size:17.5px;line-height:1;color:#8b8e8f;white-space:nowrap;">dx 76.7000</div>
<div class="a" style="left:456.4px;top:927.786px;font-size:17.5px;line-height:1;color:#8b8e8f;white-space:nowrap;">dy 10.4000</div>
<div class="a" style="left:555.4px;top:927.786px;font-size:17.5px;line-height:1;color:#8b8e8f;white-space:nowrap;">dist 77.4019</div>
<div class="a" style="left:734.4px;top:927.786px;font-size:17.5px;line-height:1;color:#8b8e8f;white-space:nowrap;">grid 0.1000</div>
<div class="a" style="left:1006.2px;top:927.786px;font-size:17.5px;line-height:1;color:#8b8e8f;white-space:nowrap;">mm</div>
<div class="a" style="left:1090.8px;top:927.786px;font-size:17.5px;line-height:1;color:#8b8e8f;white-space:nowrap;">Add Filled Zone</div>
<svg class="a" style="left:1528px;top:920px" width="30" height="28"><path d="M3 25.5L26.6 2.3M8 25.5L26.6 7.3M13 25.5L26.6 12.3M18 25.5L26.6 17.3M23 25.5L26.6 22.3" stroke="#aaa49f" stroke-width="1.4" stroke-linecap="round"/></svg>
<div class="a" style="left:1559px;top:0px;width:1px;height:948px;background:#000;"></div>
<svg class="a" style="left:0;top:0" width="8" height="8"><path d="M0 0h6A6 6 0 0 0 0 6z" fill="#222"/></svg>
<svg class="a" style="left:1550px;top:0" width="10" height="10"><path d="M10 0H3A7 7 0 0 1 10 7z" fill="#222"/></svg>
<svg class="a" style="left:7.5px;top:73px" width="24" height="24" viewBox="0 0 24 24"><path d="M1 1h17l5 5v17H1z" fill="#545454"/><path d="M5 2h10v6H5z" fill="#eee"/><path d="M10 3h3v4h-3z" fill="#545454"/><path d="M4 13h16v9H4z" fill="#eee"/></svg>
<div class="sep" style="left:40.5px;top:74px;height:23px"></div>
<svg class="a" style="left:49px;top:73px" width="24" height="24" viewBox="0 0 24 24"><rect x="1" y="1" width="22" height="22" rx="3" fill="#1f8a25"/><path d="M6 1v7l4 4v11M12 1v5l3 3" stroke="#6fb46a" stroke-width="1.5" fill="none"/><circle cx="4" cy="14" r="2" fill="#f0a030" stroke="#fff" stroke-width=".8"/><circle cx="20" cy="8" r="2" fill="#f0a030" stroke="#fff" stroke-width=".8"/><circle cx="15" cy="16" r="5.5" fill="#c8234a"/><circle cx="15" cy="16" r="2.2" fill="#1f8a25"/><path d="M15 9v14M8 16h14M10 11l10 10M20 11l-10 10" stroke="#c8234a" stroke-width="2.2"/><circle cx="15" cy="16" r="2" fill="#1f8a25"/></svg>
<div class="sep" style="left:81.5px;top:74px;height:23px"></div>
<svg class="a" style="left:89px;top:73px" width="24" height="24" viewBox="0 0 24 24"><path d="M6 1h11l5 5v16H6z" fill="#f2f2f2" stroke="#545454" stroke-width="1.4"/><path d="M17 1v5h5" fill="none" stroke="#545454" stroke-width="1.2"/><path d="M2 2v18M1 2h2M1 20h2M6 23h16M6 22v2M22 22v2" stroke="#545454" stroke-width="1"/></svg>
<svg class="a" style="left:122px;top:73px" width="24" height="24" viewBox="0 0 24 24"><path d="M5 1h14v6H5z" fill="#f2f2f2" stroke="#545454" stroke-width="1.5"/><path d="M1 8h22v8a2 2 0 0 1-2 2H3a2 2 0 0 1-2-2z" fill="#545454"/><path d="M5 12h14v11H5z" fill="#f2f2f2" stroke="#545454" stroke-width="1.5"/></svg>
<svg class="a" style="left:154px;top:73px" width="24" height="24" viewBox="0 0 24 24"><path d="M6 1h12v5H6z" fill="#f2f2f2" stroke="#545454" stroke-width="1.4"/><path d="M1 6h22v7H1z" fill="#545454"/><path d="M6 10h12v11H6z" fill="#f2f2f2" stroke="#545454" stroke-width="1.4"/><path d="M3 13v10M21 13v10M1 23h4M19 23h4" stroke="#545454" stroke-width="1.3"/></svg>
<div class="sep" style="left:186.5px;top:74px;height:23px"></div>
<svg class="a" style="left:195px;top:73px" width="24" height="24" viewBox="0 0 24 24"><path d="M4.5 8.5A9 9 0 1 1 8 20" fill="none" stroke="#545454" stroke-width="2.2"/><path d="M3 2v8h8" fill="none" stroke="#545454" stroke-width="2"/></svg>
<svg class="a" style="left:228px;top:73px" width="24" height="24" viewBox="0 0 24 24"><path d="M19.5 8.5A9 9 0 1 0 16 20" fill="none" stroke="#c8c8c8" stroke-width="2.2"/><path d="M21 2v8h-8" fill="none" stroke="#c8c8c8" stroke-width="2"/></svg>
<div class="sep" style="left:259px;top:74px;height:23px"></div>
<svg class="a" style="left:268px;top:73px" width="24" height="24" viewBox="0 0 24 24"><circle cx="14" cy="10" r="8.5" fill="none" stroke="#545454" stroke-width="2"/><path d="M8 16l-6.5 6.5" stroke="#545454" stroke-width="2.6"/><text x="14" y="15" font-size="13" font-weight="bold" text-anchor="middle" fill="#545454" font-family="Liberation Sans">A</text></svg>
<div class="sep" style="left:301px;top:74px;height:23px"></div>
<svg class="a" style="left:309px;top:73px" width="24" height="24" viewBox="0 0 24 24"><path d="M3 9A10 10 0 0 1 20.5 6" fill="none" stroke="#545454" stroke-width="2.2"/><path d="M21 15A10 10 0 0 1 3.5 18" fill="none" stroke="#545454" stroke-width="2.2"/><path d="M22 1.5v7h-7M2 22.5v-7h7" fill="none" stroke="#545454" stroke-width="2"/></svg>
<svg class="a" style="left:340.5px;top:73px" width="24" height="24" viewBox="0 0 24 24"><circle cx="10" cy="10" r="8.5" fill="none" stroke="#545454" stroke-width="2"/><path d="M16 16l6.5 6.5" stroke="#545454" stroke-width="2.6"/><path d="M10 5v10M5 10h10" stroke="#545454" stroke-width="2.4"/></svg>
<svg class="a" style="left:372.5px;top:73px" width="24" height="24" viewBox="0 0 24 24"><circle cx="10" cy="10" r="8.5" fill="none" stroke="#545454" stroke-width="2"/><path d="M16 16l6.5 6.5" stroke="#545454" stroke-width="2.6"/><path d="M5 10h10" stroke="#545454" stroke-width="2.4"/></svg>
<svg class="a" style="left:405px;top:73px" width="24" height="24" viewBox="0 0 24 24"><circle cx="10" cy="10" r="8.5" fill="none" stroke="#545454" stroke-width="2"/><path d="M16 16l6.5 6.5" stroke="#545454" stroke-width="2.6"/><path d="M6 5h6l3 3v8H6z" fill="#8f8f8f"/></svg>
<svg class="a" style="left:437px;top:73px" width="24" height="24" viewBox="0 0 24 24"><circle cx="10" cy="10" r="8.5" fill="none" stroke="#545454" stroke-width="2"/><path d="M16 16l6.5 6.5" stroke="#545454" stroke-width="2.6"/><path d="M4 15l4-6 3 3 2-2 3 5z" fill="#8f8f8f"/><circle cx="13.5" cy="6" r="1.5" fill="#8f8f8f"/></svg>
<svg class="a" style="left:468.5px;top:73px" width="24" height="24" viewBox="0 0 24 24"><circle cx="10" cy="10" r="8.5" fill="none" stroke="#545454" stroke-width="2"/><path d="M16 16l6.5 6.5" stroke="#545454" stroke-width="2.6"/><path d="M7 4l8 7-4 .5 2 4.5-2 1-2-4.5-2 3z" fill="#8f8f8f"/></svg>
<div class="sep" style="left:501.5px;top:74px;height:23px"></div>
<svg class="a" style="left:509.5px;top:73px" width="24" height="24" viewBox="0 0 24 24"><path d="M1 14l19 9H1z" fill="#8f8f8f"/><path d="M15 17a6 6 0 0 0-6-9" fill="none" stroke="#1a7dc9" stroke-width="2.3"/><path d="M5 8l5-5M5 8l5 4" stroke="#1a7dc9" stroke-width="2.3"/></svg>
<svg class="a" style="left:542px;top:73px" width="24" height="24" viewBox="0 0 24 24"><path d="M23 14L4 23h19z" fill="#8f8f8f"/><path d="M9 17a6 6 0 0 1 6-9" fill="none" stroke="#1a7dc9" stroke-width="2.3"/><path d="M19 8l-5-5M19 8l-5 4" stroke="#1a7dc9" stroke-width="2.3"/></svg>
<svg class="a" style="left:573px;top:73px" width="24" height="24" viewBox="0 0 24 24"><path d="M2 1l20 9H2z" fill="#8f8f8f"/><path d="M2 13h20L2 23z" fill="#1a7dc9"/></svg>
<svg class="a" style="left:605.5px;top:73px" width="24" height="24" viewBox="0 0 24 24"><path d="M11 1L1 23h10z" fill="#8f8f8f"/><path d="M13 1v22h10z" fill="#1a7dc9"/></svg>
<svg class="a" style="left:638px;top:73px" width="24" height="24" viewBox="0 0 24 24"><rect x="1.5" y="1.5" width="21" height="21" fill="none" stroke="#b9b9b9" stroke-width="1" stroke-dasharray="2 2"/><path d="M4 4h10v10H4z" fill="#fff" stroke="#8f8f8f" stroke-width="1.3"/><path d="M9 9h11v11H9z" fill="#fff" stroke="#8f8f8f" stroke-width="1.3"/><path d="M0 0h3v3H0zM21 0h3v3h-3zM0 21h3v3H0zM21 21h3v3h-3z" fill="#b9b9b9"/></svg>
<svg class="a" style="left:670px;top:73px" width="24" height="24" viewBox="0 0 24 24"><path d="M3 3h10v10H3z" fill="none" stroke="#b9b9b9" stroke-width="1.3"/><path d="M9 9h12v12H9z" fill="#fff" stroke="#8f8f8f" stroke-width="1.3"/><path d="M1.5 1.5h3v3h-3zM11.5 1.5h3v3h-3zM1.5 11.5h3v3h-3zM7.5 7.5h3v3h-3zM19.5 7.5h3v3h-3zM7.5 19.5h3v3h-3zM19.5 19.5h3v3h-3z" fill="#b9b9b9"/></svg>
<svg class="a" style="left:701.5px;top:73px" width="24" height="24" viewBox="0 0 24 24"><path d="M6 11V7a6 6 0 0 1 12 0v4" fill="none" stroke="#b9b9b9" stroke-width="2.5"/><rect x="2" y="10" width="20" height="14" rx="2" fill="#b9b9b9"/><circle cx="12" cy="16" r="2" fill="#f2f1f0"/><path d="M12 16v4" stroke="#f2f1f0" stroke-width="2"/></svg>
<svg class="a" style="left:734px;top:73px" width="24" height="24" viewBox="0 0 24 24"><path d="M14 11V6a5 5 0 0 1 10 0v4" fill="none" stroke="#b9b9b9" stroke-width="2.5"/><rect x="0" y="11" width="18" height="13" rx="2" fill="#b9b9b9"/><circle cx="9" cy="16.5" r="2" fill="#f2f1f0"/><path d="M9 16v4" stroke="#f2f1f0" stroke-width="2"/></svg>
<div class="sep" style="left:766.5px;top:74px;height:23px"></div>
<svg class="a" style="left:775px;top:73px" width="24" height="24" viewBox="0 0 24 24"><path d="M2 5h20v16H2z" fill="none" stroke="#545454" stroke-width="1.2"/><path d="M3 0h4v4H3zM9 0h4v4H9zM15 0h4v4h-4zM3 20h4v4H3zM9 20h4v4H9z" fill="#1a7dc9"/><path d="M2 10a2 2 0 0 1 0 4" fill="#f2f1f0" stroke="#545454"/><circle cx="17" cy="17" r="6.5" fill="#c8234a"/><path d="M14 20l1-3 5-5 2 2-5 5z" fill="#fff"/></svg>
<svg class="a" style="left:807px;top:73px" width="24" height="24" viewBox="0 0 24 24"><path d="M1 3h5v19H1zM7 3h5v19H7z" fill="#545454"/><path d="M14 4l4-2 5 18-4 2z" fill="#1a7dc9"/><path d="M2 7h3M2 10h3M8 7h3M8 10h3" stroke="#ccc" stroke-width=".8"/><circle cx="15" cy="14" r="5" fill="#bcd6f0" stroke="#c8234a" stroke-width="2"/><path d="M18.5 17.5l5 5" stroke="#c8234a" stroke-width="2.5"/></svg>
<svg class="a" style="left:839.5px;top:73px" width="24" height="24" viewBox="0 0 24 24"><path d="M4 1h16v13H4z" fill="#545454"/><rect x="3" y="13" width="18" height="5" fill="#545454"/><path d="M1 19h22v3H1z" fill="#1a7dc9"/><path d="M8 22v2M16 22v2" stroke="#8f8f8f"/></svg>
<div class="sep" style="left:871px;top:74px;height:23px"></div>
<svg class="a" style="left:879.5px;top:73px" width="24" height="24" viewBox="0 0 24 24"><rect x="0" y="0" width="24" height="24" rx="3.5" fill="#d8ccb0"/><path d="M19.5 0h1a3.5 3.5 0 0 1 3.5 3.5v17a3.5 3.5 0 0 1-3.5 3.5H11z" fill="#4a9a45"/><path d="M18 6h6v7h-5l-3 4v7h-4z" fill="#0b6e12"/><path d="M18.5 0L10 23" stroke="#fff" stroke-width="2.2"/><path d="M19 0L10.5 23" stroke="#333" stroke-width=".6"/><circle cx="21" cy="9" r="2" fill="#fff" stroke="#f0900a" stroke-width="1.3"/><path d="M8 0v4M6 1h4M8 4v5M8 6h4M8 9l-3 3" stroke="#333" stroke-width="1.6" fill="none"/><circle cx="8" cy="6" r="2.2" fill="#333"/><path d="M3 13c-3 3-1 8 4 8h3" stroke="#c8234a" stroke-width="3.2" fill="none"/><path d="M9 16l5 5-5 3z" fill="#c8234a"/></svg>
<svg class="a" style="left:912.5px;top:73px" width="24" height="24" viewBox="0 0 24 24"><path d="M2.2 2.3h4.5v4.5H2.2zM2.2 9.3h4.5v4.5H2.2zM2.2 16.3h4.5v4.5H2.2z" fill="none" stroke="#545454" stroke-width="1.3"/><path d="M10 4.5h9.5M10 11.5h4M10 18.5h2" stroke="#545454" stroke-width="1.3"/><circle cx="17.5" cy="16.5" r="6.8" fill="#c8234a"/><path d="M14 16.5l2.5 2.5 4.5-5" stroke="#fff" stroke-width="2" fill="none"/></svg>
<div class="sep" style="left:945px;top:74px;height:23px"></div>
<svg class="a" style="left:953px;top:73px" width="24" height="24" viewBox="0 0 24 24"><rect x="0" y="0" width="24" height="24" rx="3.5" fill="#d8ccb0"/><path d="M0 17h7M7 12v10M7 15l5-4V4M7 19l4 3M12 8h6" stroke="#333" stroke-width="1.8" fill="none"/><circle cx="12" cy="8" r="2.4" fill="#333"/><path d="M10 0h4v4h-4zM18 6h6v5h-6zM9.5 19h3v3h-3z" fill="#c8234a"/></svg>
<div class="sep" style="left:985px;top:74px;height:23px"></div>
<svg class="a" style="left:994px;top:73px" width="24" height="24" viewBox="0 0 24 24"><rect x="1" y="2" width="22" height="21" rx="2" fill="#545454"/><path d="M1 6h22" stroke="#888" stroke-width=".6"/><path d="M3 4h1M5 4h1M7 4h1" stroke="#fff"/><path d="M5 10l5 3-5 3" stroke="#fff" stroke-width="2" fill="none"/><path d="M11 18h6" stroke="#fff" stroke-width="2"/></svg>
<div class="a" style="left:286px;top:107px;width:30px;height:30px;background:#c3d9f3;border:1px solid #3a84e0;border-radius:2px"></div>
<svg class="a" style="left:289px;top:110px" width="24" height="24" viewBox="0 0 24 24"><path d="M4 3v15a3 3 0 0 0 3 3h10a3 3 0 0 0 3-3V3" fill="none" stroke="#545454" stroke-width="2.2"/><path d="M9 9h6M9 12h6" stroke="#545454" stroke-width="1.5"/><circle cx="12" cy="21" r="2.5" fill="#1a7dc9"/></svg>
<div class="sep" style="left:321.5px;top:108px;height:29px"></div>
<div class="sep" style="left:735px;top:108px;height:29px"></div>
<svg class="a" style="left:944px;top:110px" width="25" height="26" viewBox="0 0 25 26"><path d="M0 0h25v26H0z" fill="#4d7fc4"/><path d="M0 0h22L0 24z" fill="#c83434"/><path d="M23 0L0 26" stroke="#fff" stroke-width="2"/></svg>
<div class="sep" style="left:976.5px;top:108px;height:29px"></div>
<div class="sep" style="left:1256px;top:108px;height:29px"></div>
<div class="a" style="left:751px;top:115px;width:15px;height:15px;background:#c83434;border:1px solid #333"></div>
<div class="a" style="left:1469px;top:20px;width:8px;height:2px;background:#2e3436"></div>
<div class="a" style="left:1503px;top:14px;width:8px;height:8px;border:2px solid #2e3436"></div>
<svg class="a" style="left:1536px;top:13px" width="10" height="10" viewBox="0 0 10 10"><path d="M1.5 1.5l7 7M8.5 1.5l-7 7" stroke="#2e3436" stroke-width="1.9"/></svg>
<div class="a" style="left:2px;top:148px;width:30px;height:30px;background:#c3d9f3;border:1px solid #3a84e0;border-radius:2px"></div>
<svg class="a" style="left:3px;top:148px" width="29" height="30"><circle cx="4" cy="4.8" r="1.5" fill="#4a4a4a"/><circle cx="4" cy="11.5" r="1.5" fill="#4a4a4a"/><circle cx="4" cy="18.2" r="1.5" fill="#4a4a4a"/><circle cx="4" cy="24.9" r="1.5" fill="#4a4a4a"/><circle cx="10.7" cy="4.8" r="1.5" fill="#4a4a4a"/><circle cx="10.7" cy="11.5" r="1.5" fill="#4a4a4a"/><circle cx="10.7" cy="18.2" r="1.5" fill="#4a4a4a"/><circle cx="10.7" cy="24.9" r="1.5" fill="#4a4a4a"/><circle cx="17.4" cy="4.8" r="1.5" fill="#4a4a4a"/><circle cx="17.4" cy="11.5" r="1.5" fill="#4a4a4a"/><circle cx="17.4" cy="18.2" r="1.5" fill="#4a4a4a"/><circle cx="17.4" cy="24.9" r="1.5" fill="#4a4a4a"/><circle cx="24.1" cy="4.8" r="1.5" fill="#4a4a4a"/><circle cx="24.1" cy="11.5" r="1.5" fill="#4a4a4a"/><circle cx="24.1" cy="18.2" r="1.5" fill="#4a4a4a"/><circle cx="24.1" cy="24.9" r="1.5" fill="#4a4a4a"/></svg>
<svg class="a" style="left:5px;top:182.5px" width="24" height="24" viewBox="0 0 24 24"><circle cx="2" cy="2" r="1.2" fill="#555"/><circle cx="2" cy="8.7" r="1.2" fill="#555"/><circle cx="2" cy="15.4" r="1.2" fill="#555"/><circle cx="2" cy="22.1" r="1.2" fill="#555"/><circle cx="8.7" cy="2" r="1.2" fill="#555"/><circle cx="8.7" cy="8.7" r="1.2" fill="#555"/><circle cx="8.7" cy="15.4" r="1.2" fill="#555"/><circle cx="8.7" cy="22.1" r="1.2" fill="#555"/><circle cx="15.4" cy="2" r="1.2" fill="#555"/><circle cx="15.4" cy="8.7" r="1.2" fill="#555"/><circle cx="15.4" cy="15.4" r="1.2" fill="#555"/><circle cx="15.4" cy="22.1" r="1.2" fill="#555"/><circle cx="22.1" cy="2" r="1.2" fill="#555"/><circle cx="22.1" cy="8.7" r="1.2" fill="#555"/><circle cx="22.1" cy="15.4" r="1.2" fill="#555"/><circle cx="22.1" cy="22.1" r="1.2" fill="#555"/><path d="M7 10V7a5 5 0 0 1 10 0v3" fill="none" stroke="#c8234a" stroke-width="2.4"/><rect x="4" y="10" width="16" height="12" rx="1.5" fill="#c8234a"/><circle cx="12" cy="15" r="2" fill="#fff"/><path d="M12 15v4" stroke="#fff" stroke-width="1.6"/></svg>
<svg class="a" style="left:5px;top:215px" width="24" height="24" viewBox="0 0 24 24"><path d="M2 1v22h21" fill="none" stroke="#545454" stroke-width="1.5"/><path d="M2 23L20 6" stroke="#545454" stroke-width="1.3"/><circle cx="20" cy="4.5" r="2" fill="#c8234a"/><text x="6" y="12" font-size="9" fill="#545454" font-family="Liberation Sans">r</text><text x="14" y="20" font-size="9" font-style="italic" fill="#545454" font-family="Liberation Sans">θ</text></svg>
<svg class="a" style="left:5px;top:247px" width="24" height="24" viewBox="0 0 24 24"><text x="12" y="11" font-size="13" text-anchor="middle" fill="#545454" font-family="Liberation Sans">in</text><path d="M6 17h12" stroke="#545454" stroke-width="1.6"/><path d="M1 17l6-3.5v7zM23 17l-6-3.5v7z" fill="#545454"/></svg>
<svg class="a" style="left:5px;top:278px" width="24" height="24" viewBox="0 0 24 24"><text x="12" y="11" font-size="13" text-anchor="middle" fill="#545454" font-family="Liberation Sans">mil</text><path d="M6 17h12" stroke="#545454" stroke-width="1.6"/><path d="M1 17l6-3.5v7zM23 17l-6-3.5v7z" fill="#545454"/></svg>
<div class="a" style="left:2px;top:308px;width:30px;height:30px;background:#c3d9f3;border:1px solid #3a84e0;border-radius:2px"></div>
<svg class="a" style="left:5px;top:311px" width="24" height="24" viewBox="0 0 24 24"><text x="12" y="11.5" font-size="13" text-anchor="middle" fill="#545454" font-family="Liberation Sans">mm</text><path d="M6 17h12" stroke="#545454" stroke-width="1.6"/><path d="M1 17l6-3.5v7zM23 17l-6-3.5v7z" fill="#545454"/></svg>
<svg class="a" style="left:5px;top:347px" width="24" height="24" viewBox="0 0 24 24"><path d="M1 8h22M12 0v16" stroke="#888" stroke-width="1"/><path d="M6 8h12M12 3v10" stroke="#1a7dc9" stroke-width="3"/><path d="M12 9l8 7-3.5.5 2 4-2 1-2-4-2.5 2.5z" fill="#545454"/></svg>
<div class="sep" style="left:4px;top:375px;height:0px"></div>
<div class="a" style="left:5px;top:375px;width:25px;height:1px;background:#c8c5c2"></div>
<svg class="a" style="left:5px;top:384px" width="24" height="24" viewBox="0 0 24 24"><path d="M2 23h21M5 23V1M5 23L21 7" stroke="#545454" stroke-width="1.8" fill="none"/><path d="M5 14a9 9 0 0 1 9 9" fill="none" stroke="#545454" stroke-width="1.5"/></svg>
<div class="a" style="left:5px;top:416px;width:25px;height:1px;background:#c8c5c2"></div>
<div class="a" style="left:2px;top:422px;width:30px;height:30px;background:#c3d9f3;border:1px solid #3a84e0;border-radius:2px"></div>
<svg class="a" style="left:5px;top:424.5px" width="24" height="24" viewBox="0 0 24 24"><path d="M4.5 6.5L24 7.7M4.5 6.5L18.8 18.2M17.8 7.7L5.5 19.5" stroke="#545454" stroke-width="1.3" fill="none"/><circle cx="4.5" cy="6.5" r="2.6" fill="#fff" stroke="#545454" stroke-width="1.2"/><circle cx="17.8" cy="7.7" r="2.6" fill="#fff" stroke="#545454" stroke-width="1.2"/><circle cx="5.5" cy="19.5" r="2.6" fill="#fff" stroke="#545454" stroke-width="1.2"/><circle cx="18.8" cy="18.2" r="2.6" fill="#fff" stroke="#545454" stroke-width="1.2"/></svg>
<svg class="a" style="left:5px;top:456px" width="24" height="24" viewBox="0 0 24 24"><path d="M0 24L23 1M2.5 8L13 4M10 22C16 20 21 16 21 11" stroke="#545454" stroke-width="1.3" fill="none"/><circle cx="2.5" cy="8" r="2.3" fill="#fff" stroke="#545454" stroke-width="1.2"/><circle cx="13" cy="4" r="2.3" fill="#fff" stroke="#545454" stroke-width="1.2"/><circle cx="10" cy="22" r="2.3" fill="#fff" stroke="#545454" stroke-width="1.2"/><circle cx="21" cy="11" r="2.3" fill="#fff" stroke="#545454" stroke-width="1.2"/></svg>
<div class="a" style="left:5px;top:489px;width:25px;height:1px;background:#c8c5c2"></div>
<svg class="a" style="left:5px;top:497.5px" width="24" height="24" viewBox="0 0 24 24"><path d="M0 5l6 5h8l9 9M0 14l6 5h8l5 5" stroke="#545454" stroke-width="2" fill="none"/><path d="M3 1l6 4h6l8 9" stroke="#c8234a" stroke-width="2" fill="none"/><circle cx="10" cy="13" r="2.6" fill="#fff" stroke="#f0a030" stroke-width="1.8"/></svg>
<svg class="a" style="left:5px;top:530px" width="24" height="24" viewBox="0 0 24 24"><path d="M3 23V10a6 6 0 0 1 6-6h2M9 23V11a3 3 0 0 1 3-3M15 23V12" stroke="#b9b9b9" stroke-width="2" fill="none"/><path d="M3 23V15M9 23V14" stroke="#e8a0a0" stroke-width="2.5"/><path d="M6 12h18" stroke="#9ccae8" stroke-width="2.5"/></svg>
<div class="a" style="left:5px;top:561px;width:25px;height:1px;background:#c8c5c2"></div>
<div class="a" style="left:2px;top:567px;width:30px;height:30px;background:#c3d9f3;border:1px solid #3a84e0;border-radius:2px"></div>
<svg class="a" style="left:5px;top:570px" width="24" height="24" viewBox="0 0 24 24"><path d="M2 22V12h8V2h12v20z" fill="#1a8ad4"/><circle cx="15" cy="12" r="3" fill="#fff"/><path d="M17 12h5" stroke="#333" stroke-width="1.5"/><circle cx="15" cy="12" r="1.5" fill="#333"/></svg>
<svg class="a" style="left:5px;top:603px" width="24" height="24" viewBox="0 0 24 24"><path d="M2 22V12h8V2h12v20z" fill="none" stroke="#1a8ad4" stroke-width="1.5" stroke-dasharray="2.5 2"/><circle cx="16" cy="12" r="1.6" fill="#333"/><path d="M17 12h5" stroke="#333" stroke-width="1.5"/></svg>
<div class="a" style="left:5px;top:634px;width:25px;height:1px;background:#c8c5c2"></div>
<svg class="a" style="left:5px;top:643.5px" width="24" height="24" viewBox="0 0 24 24"><path d="M2 5h20v14H2z" fill="none" stroke="#545454" stroke-width="1.3"/><path d="M3 1h4v5H3zM10 1h4v5h-4zM16 1h4v5h-4zM3 18h4v5H3zM10 18h4v5h-4zM16 18h4v5h-4z" fill="#1a7dc9"/><path d="M1 23L23 1" stroke="#545454" stroke-width="1.5"/></svg>
<svg class="a" style="left:5px;top:676px" width="24" height="24" viewBox="0 0 24 24"><circle cx="12" cy="12" r="10" fill="#f0a030"/><circle cx="12" cy="12" r="5" fill="#f2f1f0"/><circle cx="12" cy="12" r="7" fill="none" stroke="#ddd"/><path d="M1 23L23 1" stroke="#545454" stroke-width="1.5"/></svg>
<svg class="a" style="left:5px;top:708px" width="24" height="24" viewBox="0 0 24 24"><path d="M8 0v24M10 0v24" stroke="#c8234a" stroke-width="2"/><path d="M2 11h20M2 14h20" stroke="#1a7dc9" stroke-width="1.8"/><path d="M1 23L23 1" stroke="#545454" stroke-width="1.5"/></svg>
<div class="a" style="left:5px;top:739px;width:25px;height:1px;background:#c8c5c2"></div>
<div class="a" style="left:2px;top:746px;width:30px;height:30px;background:#c3d9f3;border:1px solid #3a84e0;border-radius:2px"></div>
<svg class="a" style="left:5px;top:749px" width="24" height="24" viewBox="0 0 24 24"><path d="M12 8l11 6-11 6L1 14z" fill="#f0a030"/><path d="M12 2l11 6-11 6L1 8z" fill="#1a8ad4"/></svg>
<svg class="a" style="left:5px;top:780.5px" width="24" height="24" viewBox="0 0 24 24"><path d="M3 21L14 10M6 3l15 15" stroke="#1a7dc9" stroke-width="3"/><path d="M14 10a5 5 0 0 0 7-7l-3 3-3-1-1-3 3-3a5 5 0 0 0-7 7" fill="#545454"/><path d="M1 2l3-1 4 4-2 2z" fill="#545454"/></svg>
<svg class="a" style="left:1341px;top:149px" width="24" height="24" viewBox="0 0 24 24"><path d="M7 2v18l4.5-4.5 3 6 2.5-1.2-3-6H20z" fill="#545454"/></svg>
<svg class="a" style="left:1341px;top:183px" width="24" height="24" viewBox="0 0 24 24"><path d="M2 2l20 20M22 2L2 22" stroke="#545454" stroke-width="1.4"/><circle cx="12" cy="12" r="3.5" fill="#fff" stroke="#545454" stroke-width="1.2"/></svg>
<div class="a" style="left:1341px;top:216px;width:25px;height:1px;background:#c8c5c2"></div>
<svg class="a" style="left:1341px;top:223px" width="24" height="24" viewBox="0 0 24 24"><path d="M2 5h20v14H2z" fill="none" stroke="#545454" stroke-width="1.3"/><path d="M4 1h4v6H4zM10 1h4v6h-4zM16 1h4v6h-4zM4 17h4v6H4zM10 17h4v6h-4zM16 17h4v6h-4z" fill="#1a7dc9"/><path d="M2 10a2 2 0 0 1 0 4" fill="#f2f1f0" stroke="#545454"/></svg>
<svg class="a" style="left:1341px;top:257px" width="24" height="24" viewBox="0 0 24 24"><path d="M1 20l4-10h9l8-9" stroke="#1a7dc9" stroke-width="2.4" fill="none"/><path d="M24 18v6h-6z" fill="#222"/></svg>
<svg class="a" style="left:1341px;top:290.5px" width="24" height="24" viewBox="0 0 24 24"><path d="M1 13h2.5V8.5a2.5 2.5 0 0 1 5 0v5a2 2 0 0 0 4 0v-5a2.5 2.5 0 0 1 5 0v5a2 2 0 0 0 4 0V12" stroke="#1a7dc9" stroke-width="2.2" fill="none"/><path d="M24 18v6h-6z" fill="#222"/></svg>
<svg class="a" style="left:1341px;top:320px" width="24" height="24" viewBox="0 0 24 24"><circle cx="12" cy="12" r="6.5" fill="none" stroke="#f0900a" stroke-width="4"/></svg>
<div class="a" style="left:1338px;top:349px;width:30px;height:30px;background:#c3d9f3;border:1px solid #3a84e0;border-radius:2px"></div>
<svg class="a" style="left:1341px;top:351.5px" width="24" height="24" viewBox="0 0 24 24"><path d="M2 22V12h8V2h12v20z" fill="#1a8ad4"/><circle cx="15" cy="12" r="3" fill="#fff"/><path d="M17 12h5" stroke="#333" stroke-width="1.5"/><circle cx="15" cy="12" r="1.5" fill="#333"/></svg>
<svg class="a" style="left:1341px;top:383px" width="24" height="24" viewBox="0 0 24 24"><path d="M2 22V12h8V2h12v20z" fill="#fff" stroke="#545454" stroke-width="2"/><path d="M3 18l8-8M3 22l12-12M8 22L21 9M13 22l8-8M17 22l4-4M11 8l10-5M14 9l7-7" stroke="#545454" stroke-width="2"/></svg>
<div class="a" style="left:1341px;top:416px;width:25px;height:1px;background:#c8c5c2"></div>
<svg class="a" style="left:1341px;top:424.5px" width="24" height="24" viewBox="0 0 24 24"><path d="M2 22L22 2" stroke="#545454" stroke-width="2"/></svg>
<svg class="a" style="left:1341px;top:456px" width="24" height="24" viewBox="0 0 24 24"><path d="M3 23A20 20 0 0 1 22 3" stroke="#545454" stroke-width="2" fill="none"/></svg>
<svg class="a" style="left:1341px;top:488.5px" width="24" height="24" viewBox="0 0 24 24"><rect x="2" y="3" width="20" height="18" fill="#c8c8c8" stroke="#545454" stroke-width="2"/></svg>
<svg class="a" style="left:1341px;top:520px" width="24" height="24" viewBox="0 0 24 24"><circle cx="12" cy="12" r="10" fill="#c8c8c8" stroke="#545454" stroke-width="2"/></svg>
<svg class="a" style="left:1341px;top:553px" width="24" height="24" viewBox="0 0 24 24"><path d="M2 2l20 3-2 14L5 22l6-9z" fill="#c8c8c8" stroke="#545454" stroke-width="2" stroke-linejoin="round"/></svg>
<svg class="a" style="left:1341px;top:585px" width="24" height="24" viewBox="0 0 24 24"><rect x="1" y="1" width="22" height="22" rx="3" fill="#545454"/><path d="M3 19l6-9 4 5 3-3 5 7z" fill="#fff"/><circle cx="17" cy="6" r="2.5" fill="#fff"/></svg>
<svg class="a" style="left:1341px;top:616.5px" width="24" height="24" viewBox="0 0 24 24"><path d="M3 2h18v4h-7v17h-4V6H3z" fill="#545454"/></svg>
<svg class="a" style="left:1341px;top:649px" width="24" height="24" viewBox="0 0 24 24"><rect x="2" y="3" width="20" height="18" fill="#ddd" stroke="#545454" stroke-width="2"/><path d="M6 8h12M6 12h12M6 16h8" stroke="#545454" stroke-width="1.6"/></svg>
<svg class="a" style="left:1341px;top:680.5px" width="24" height="24" viewBox="0 0 24 24"><path d="M3 15L12 3l9 9" stroke="#545454" stroke-width="1.2" fill="none"/><circle cx="4" cy="16" r="2.5" fill="#1a7dc9"/><circle cx="21" cy="6" r="2.5" fill="#1a7dc9"/><path d="M24 18v6h-6z" fill="#222"/></svg>
<svg class="a" style="left:1341px;top:713.5px" width="24" height="24" viewBox="0 0 24 24"><path d="M2 1v16l4-4 3 6 2.5-1-3-6H13z" fill="#545454"/><circle cx="16" cy="16" r="7" fill="#c8234a"/><path d="M13 13l6 6M19 13l-6 6" stroke="#fff" stroke-width="2"/></svg>
<div class="a" style="left:1341px;top:745px;width:25px;height:1px;background:#c8c5c2"></div>
<svg class="a" style="left:1341px;top:755px" width="24" height="24" viewBox="0 0 24 24"><circle cx="2" cy="2" r="1.3" fill="#444"/><circle cx="2" cy="7" r="1.3" fill="#444"/><circle cx="2" cy="12" r="1.3" fill="#444"/><circle cx="2" cy="17" r="1.3" fill="#444"/><circle cx="2" cy="22" r="1.3" fill="#444"/><circle cx="7" cy="2" r="1.3" fill="#444"/><circle cx="7" cy="7" r="1.3" fill="#444"/><circle cx="7" cy="12" r="1.3" fill="#444"/><circle cx="7" cy="17" r="1.3" fill="#444"/><circle cx="7" cy="22" r="1.3" fill="#444"/><circle cx="12" cy="2" r="1.3" fill="#444"/><circle cx="12" cy="7" r="1.3" fill="#444"/><circle cx="12" cy="12" r="1.3" fill="#444"/><circle cx="12" cy="17" r="1.3" fill="#444"/><circle cx="12" cy="22" r="1.3" fill="#444"/><circle cx="17" cy="2" r="1.3" fill="#444"/><circle cx="17" cy="7" r="1.3" fill="#444"/><circle cx="17" cy="12" r="1.3" fill="#444"/><circle cx="17" cy="17" r="1.3" fill="#444"/><circle cx="17" cy="22" r="1.3" fill="#444"/><circle cx="22" cy="2" r="1.3" fill="#444"/><circle cx="22" cy="7" r="1.3" fill="#444"/><circle cx="22" cy="12" r="1.3" fill="#444"/><circle cx="22" cy="17" r="1.3" fill="#444"/><circle cx="22" cy="22" r="1.3" fill="#444"/><path d="M2 12h16M10 4v16" stroke="#1a7dc9" stroke-width="1.8"/><path d="M24 18v6h-6z" fill="#222"/></svg>
<svg class="a" style="left:1341px;top:785.5px" width="24" height="24" viewBox="0 0 24 24"><path d="M1 17L17 1l6 6L7 23z" fill="none" stroke="#545454" stroke-width="2"/><path d="M6 12l2 2M9 9l3 3M12 6l2 2M15 3l3 3" stroke="#545454" stroke-width="1.5"/></svg>
</body></html>
